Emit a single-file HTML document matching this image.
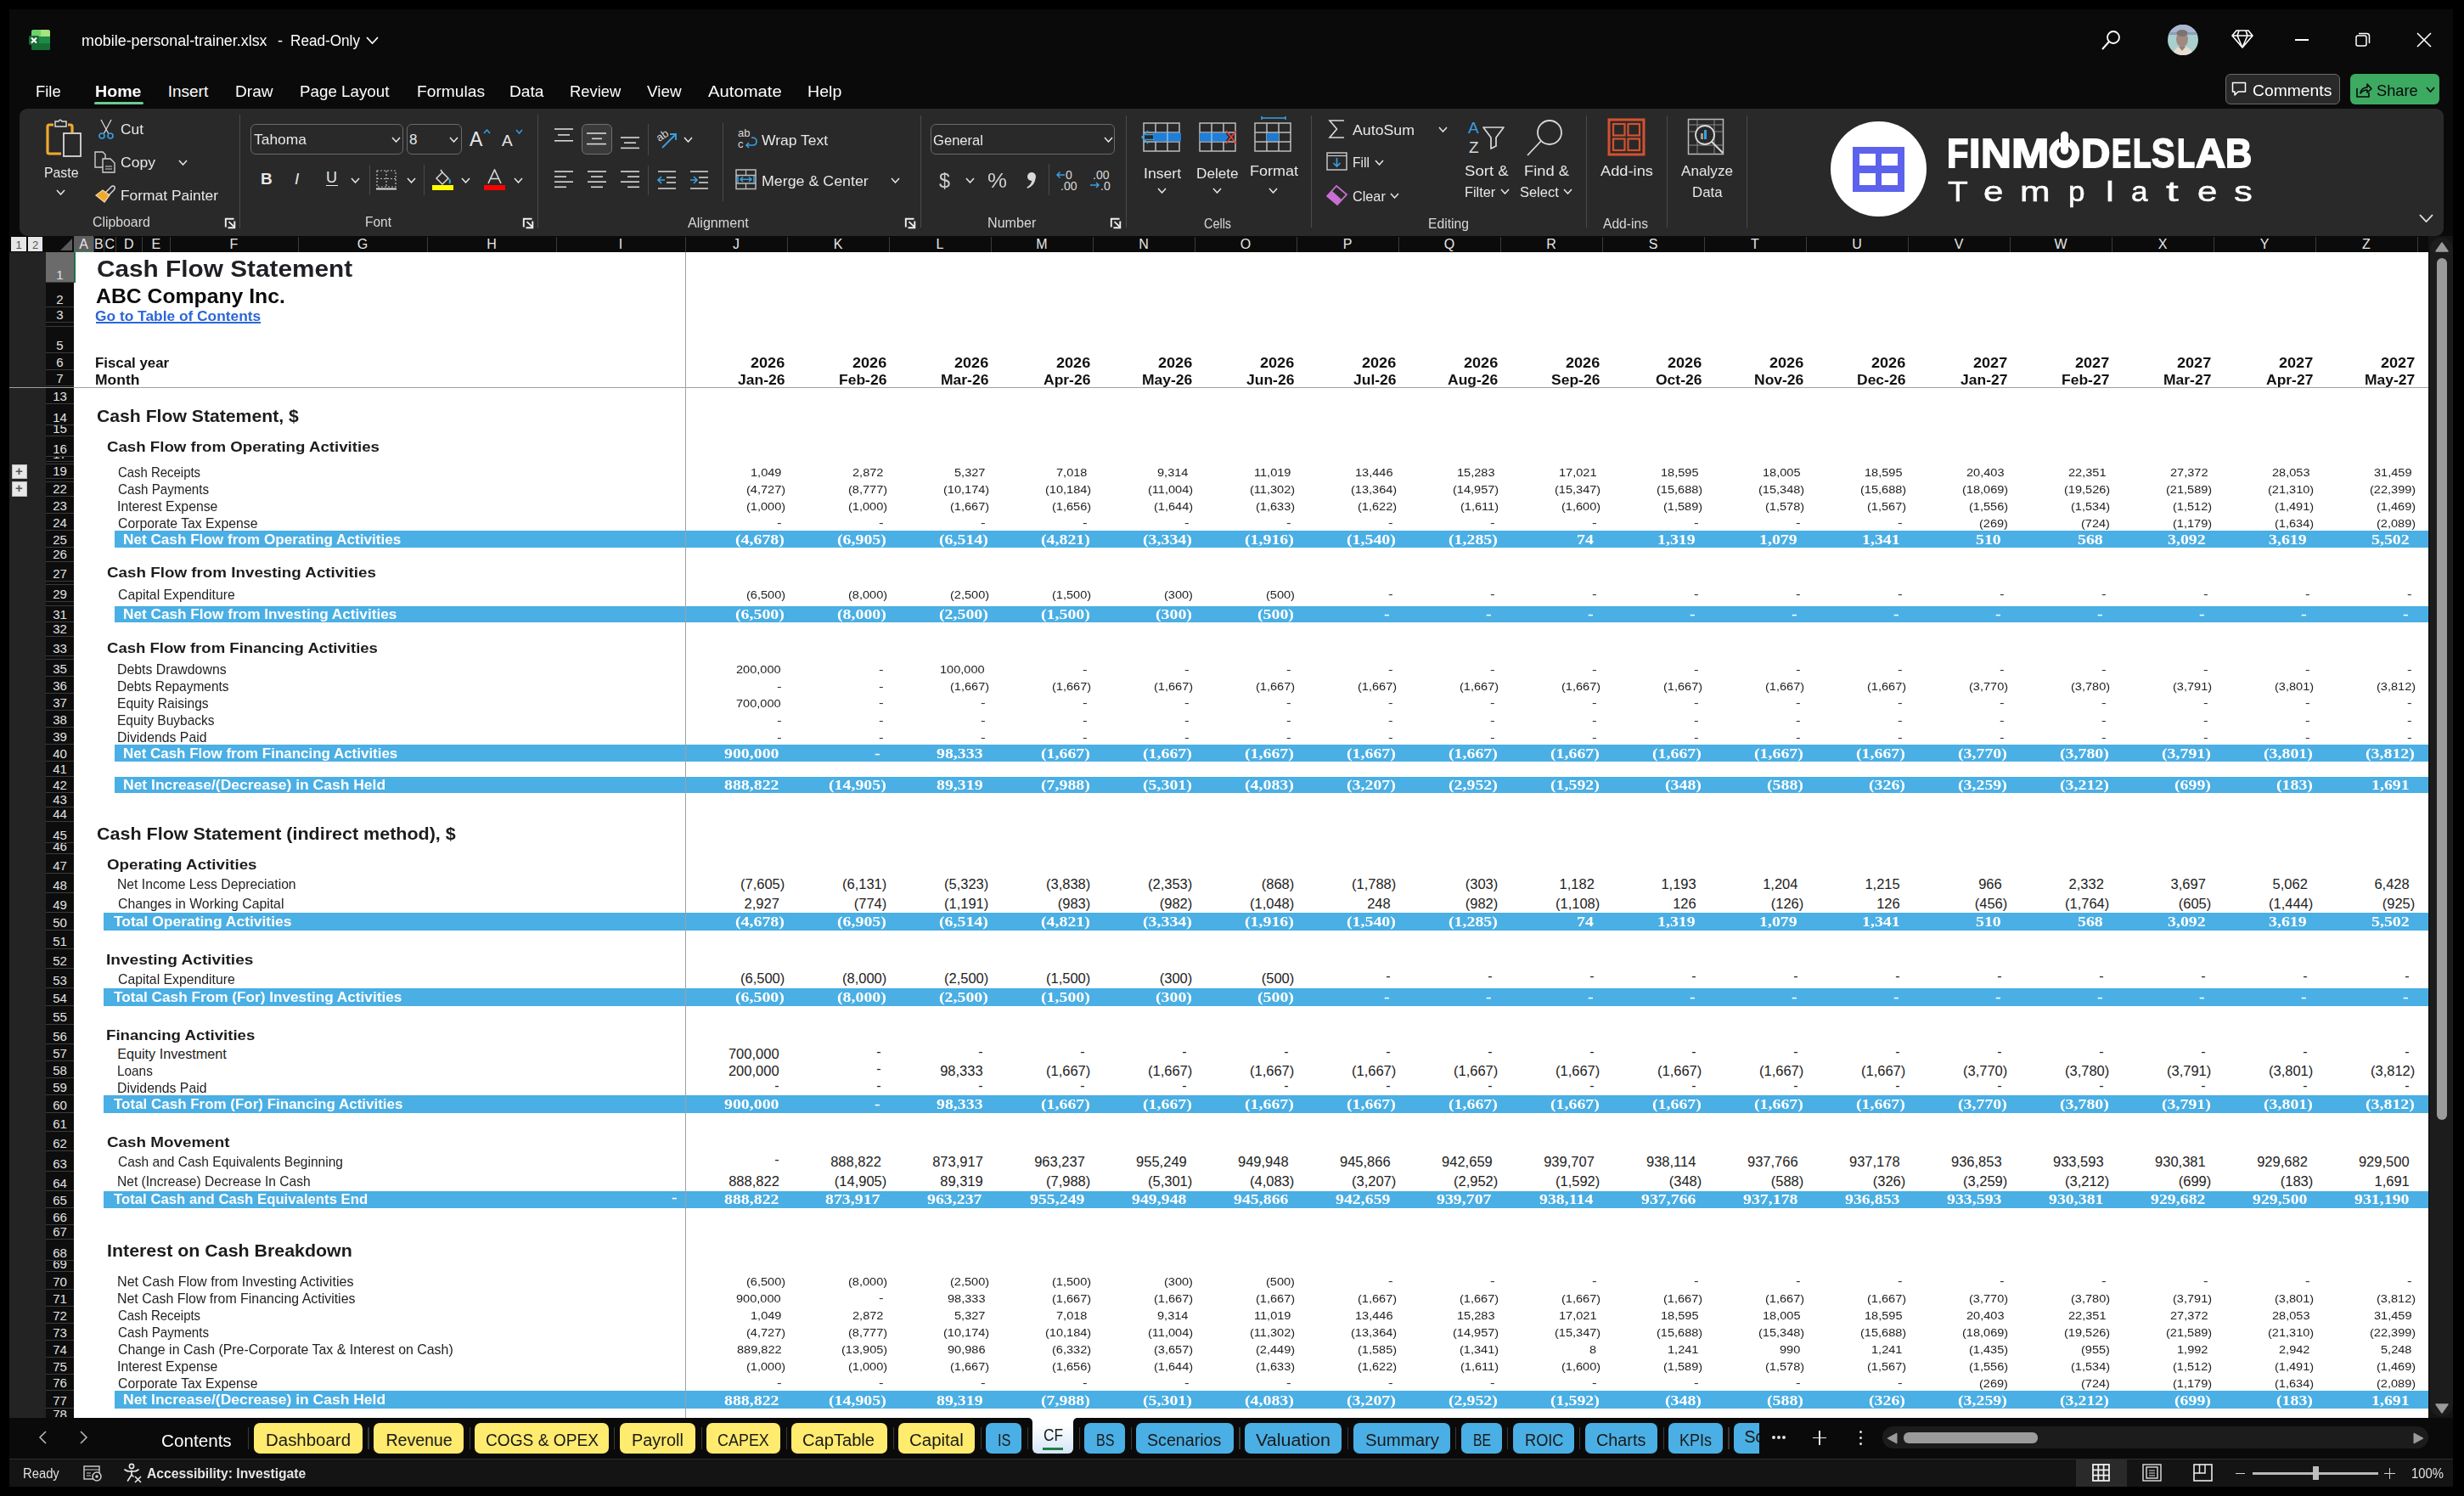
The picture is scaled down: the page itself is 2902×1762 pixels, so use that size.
<!DOCTYPE html>
<html><head><meta charset="utf-8"><title>Cash Flow Statement</title>
<style>
html,body{margin:0;padding:0;}
body{width:2902px;height:1762px;background:#000;position:relative;overflow:hidden;font-family:"Liberation Sans",sans-serif;}
div,span,svg{position:absolute;}
span{white-space:pre;display:block;}
</style></head><body>
<div style="left:11.0px;top:11.0px;width:2878.0px;height:267.0px;background:#0a0a0a;"></div>
<svg style="position:absolute;left:34px;top:34px" width="26" height="26" viewBox="0 0 26 26"><rect x="3" y="1" width="22" height="24" rx="2.5" fill="#1e8b46"/><path d="M5.5 1 H14 V9 H3 V3.5 Q3 1 5.5 1 Z" fill="#6fd36b"/><path d="M14 1 H22.5 Q25 1 25 3.5 V9 H14 Z" fill="#a8e27c"/><path d="M3 17 H25 V22.5 Q25 25 22.5 25 H5.5 Q3 25 3 22.5 Z" fill="#176c36"/><rect x="0" y="8" width="12" height="11" rx="2" fill="#1a6b35"/><path d="M3 10.5 L9 16.5 M9 10.5 L3 16.5" stroke="#fff" stroke-width="2"/></svg>
<span style="left:95.6px;top:39.2px;font:400 18px/18px 'Liberation Sans',sans-serif;color:#ffffff;transform:scaleX(0.9929);transform-origin:0 0;">mobile-personal-trainer.xlsx</span>
<span style="left:327.0px;top:39.2px;font:400 18px/18px 'Liberation Sans',sans-serif;color:#ffffff;">-</span>
<span style="left:341.5px;top:39.2px;font:400 18px/18px 'Liberation Sans',sans-serif;color:#ffffff;transform:scaleX(0.9528);transform-origin:0 0;">Read-Only</span>
<svg style="position:absolute;left:431.0px;top:42.5px" width="15" height="9"><path d="M1 1 L7.5 8 L14 1" fill="none" stroke="#ffffff" stroke-width="1.8"/></svg>
<svg style="position:absolute;left:2474px;top:35px" width="25" height="25"><circle cx="15" cy="9" r="7" fill="none" stroke="#fff" stroke-width="1.8"/><path d="M10 14 L2 23" stroke="#fff" stroke-width="2"/></svg>
<div style="left:2553px;top:28.7px;width:36px;height:36px;border-radius:50%;overflow:hidden;filter:blur(0.5px)"><svg style="left:0;top:0" width="36" height="36" viewBox="0 0 36 36"><rect x="0" y="0" width="36" height="36" fill="#a9cfcf"/><rect x="0" y="0" width="36" height="11" fill="#aab6d2"/><rect x="0" y="9" width="36" height="3" fill="#8aa0b8"/><ellipse cx="17" cy="17" rx="7" ry="9.5" fill="#a08a80"/><ellipse cx="17" cy="10" rx="6.5" ry="4" fill="#7d7370"/><path d="M6 36 Q8 28 13 26 L17 30 L22 26 Q28 28 30 36 Z" fill="#e6dcd4"/><path d="M13 26 L17 31 L21 26" fill="#9a8070"/></svg></div>
<svg style="position:absolute;left:2628px;top:34px" width="26" height="24"><path d="M6 2 H20 L25 8 L13 22 L1 8 Z M1 8 H25 M9 2 L7 8 L13 22 L19 8 L17 2" fill="none" stroke="#fff" stroke-width="1.6" stroke-linejoin="round"/></svg>
<div style="left:2703.0px;top:46.0px;width:16.0px;height:1.5px;background:#ffffff;"></div>
<svg style="position:absolute;left:2774px;top:38px" width="18" height="18"><rect x="1" y="4" width="12" height="12" rx="2" fill="none" stroke="#fff" stroke-width="1.5"/><path d="M4 1.5 H13.5 Q16.5 1.5 16.5 4.5 V13" fill="none" stroke="#fff" stroke-width="1.5"/></svg>
<svg style="position:absolute;left:2846px;top:38px" width="18" height="18"><path d="M1 1 L17 17 M17 1 L1 17" stroke="#fff" stroke-width="1.6"/></svg>
<span style="left:42.3px;top:97.7px;font:400 19px/19px 'Liberation Sans',sans-serif;color:#ffffff;transform:scaleX(0.9703);transform-origin:0 0;">File</span>
<span style="left:197.7px;top:97.7px;font:400 19px/19px 'Liberation Sans',sans-serif;color:#ffffff;">Insert</span>
<span style="left:277.4px;top:97.7px;font:400 19px/19px 'Liberation Sans',sans-serif;color:#ffffff;transform:scaleX(1.0061);transform-origin:0 0;">Draw</span>
<span style="left:353.0px;top:97.7px;font:400 19px/19px 'Liberation Sans',sans-serif;color:#ffffff;transform:scaleX(0.9881);transform-origin:0 0;">Page Layout</span>
<span style="left:490.7px;top:97.7px;font:400 19px/19px 'Liberation Sans',sans-serif;color:#ffffff;transform:scaleX(1.0117);transform-origin:0 0;">Formulas</span>
<span style="left:600.0px;top:97.7px;font:400 19px/19px 'Liberation Sans',sans-serif;color:#ffffff;transform:scaleX(1.0093);transform-origin:0 0;">Data</span>
<span style="left:670.8px;top:97.7px;font:400 19px/19px 'Liberation Sans',sans-serif;color:#ffffff;transform:scaleX(0.9666);transform-origin:0 0;">Review</span>
<span style="left:762.4px;top:97.7px;font:400 19px/19px 'Liberation Sans',sans-serif;color:#ffffff;transform:scaleX(0.9920);transform-origin:0 0;">View</span>
<span style="left:834.0px;top:97.7px;font:400 19px/19px 'Liberation Sans',sans-serif;color:#ffffff;transform:scaleX(1.0663);transform-origin:0 0;">Automate</span>
<span style="left:951.0px;top:97.7px;font:400 19px/19px 'Liberation Sans',sans-serif;color:#ffffff;transform:scaleX(1.0317);transform-origin:0 0;">Help</span>
<span style="left:111.5px;top:97.7px;font:700 19px/19px 'Liberation Sans',sans-serif;color:#ffffff;transform:scaleX(1.0326);transform-origin:0 0;">Home</span>
<div style="left:111.0px;top:120.0px;width:58.0px;height:3.0px;background:#6ccb8f;border-radius:2px"></div>
<div style="left:2621.0px;top:87.0px;width:135.0px;height:36.0px;background:#292929;border:1px solid #6a6a6a;border-radius:6px;box-sizing:border-box"></div>
<svg style="position:absolute;left:2628px;top:96px" width="18" height="18"><path d="M1.5 1.5 H16.5 V12 H8 L4 16 V12 H1.5 Z" fill="none" stroke="#fff" stroke-width="1.5" stroke-linejoin="round"/></svg>
<span style="left:2652.7px;top:97.4px;font:400 19px/19px 'Liberation Sans',sans-serif;color:#ffffff;transform:scaleX(1.0159);transform-origin:0 0;">Comments</span>
<div style="left:2768.0px;top:87.0px;width:105.0px;height:36.0px;background:#3daa62;border-radius:6px"></div>
<svg style="position:absolute;left:2774px;top:96px" width="20" height="20"><path d="M2 8 V18 H16 V13" fill="none" stroke="#0a0a0a" stroke-width="1.6"/><path d="M6 14 Q7 7 14 7 V3 L19 8.5 L14 13 V10 Q9 10 6 14 Z" fill="none" stroke="#0a0a0a" stroke-width="1.6" stroke-linejoin="round"/></svg>
<span style="left:2799.0px;top:97.4px;font:400 19px/19px 'Liberation Sans',sans-serif;color:#0a0a0a;transform:scaleX(0.9608);transform-origin:0 0;">Share</span>
<svg style="position:absolute;left:2856.5px;top:101.5px" width="11" height="7"><path d="M1 1 L5.5 6 L10 1" fill="none" stroke="#0a0a0a" stroke-width="1.6"/></svg>
<div style="left:23.0px;top:128.0px;width:2855.0px;height:149.5px;background:#292929;border-radius:9px"></div>
<svg style="position:absolute;left:54px;top:139px" width="44" height="50" viewBox="0 0 44 50"><path d="M9 8 H4 Q2 8 2 10 V40 Q2 42 4 42 H18" fill="none" stroke="#f0a92e" stroke-width="3.2"/><path d="M26 8 H29 Q31 8 31 10 V17" fill="none" stroke="#f0a92e" stroke-width="3.2"/><path d="M11 4 H15 Q16.5 0.5 19 4 H24 V10 H11 Z" fill="none" stroke="#d9d9d9" stroke-width="1.5"/><rect x="21" y="18" width="20" height="27" fill="none" stroke="#d9d9d9" stroke-width="1.8"/></svg>
<span style="left:51.5px;top:194.6px;font:400 17px/17px 'Liberation Sans',sans-serif;color:#e8e8e8;transform:scaleX(0.9317);transform-origin:0 0;">Paste</span>
<svg style="position:absolute;left:66.0px;top:222.5px" width="11" height="7"><path d="M1 1 L5.5 6 L10 1" fill="none" stroke="#e8e8e8" stroke-width="1.5"/></svg>
<svg style="position:absolute;left:115px;top:140px" width="20" height="25"><path d="M4 1 L12.5 17 M16 1 L7.5 17" stroke="#d9d9d9" stroke-width="1.3"/><circle cx="5" cy="20" r="3" fill="none" stroke="#3a9fe0" stroke-width="1.6"/><circle cx="15" cy="20" r="3" fill="none" stroke="#3a9fe0" stroke-width="1.6"/></svg>
<span style="left:142.0px;top:144.0px;font:400 17px/17px 'Liberation Sans',sans-serif;color:#e8e8e8;transform:scaleX(1.0207);transform-origin:0 0;">Cut</span>
<svg style="position:absolute;left:111px;top:178px" width="26" height="26"><path d="M1 1 H10 L13 4 V19 H1 Z" fill="none" stroke="#cfcfcf" stroke-width="1.4"/><path d="M10 9 H19 L24 14 V25 H10 Z" fill="#292929" stroke="#cfcfcf" stroke-width="1.4"/><path d="M13 18 H21 M13 21 H21" stroke="#cfcfcf" stroke-width="1.2"/></svg>
<span style="left:142.0px;top:182.5px;font:400 17px/17px 'Liberation Sans',sans-serif;color:#e8e8e8;transform:scaleX(1.0331);transform-origin:0 0;">Copy</span>
<svg style="position:absolute;left:209.5px;top:187.5px" width="11" height="7"><path d="M1 1 L5.5 6 L10 1" fill="none" stroke="#e8e8e8" stroke-width="1.5"/></svg>
<svg style="position:absolute;left:111px;top:217px" width="26" height="24"><path d="M2 13 L12 21 L18 13 L10 7 Z" fill="#f0a92e" stroke="#f7d49a" stroke-width="1.3"/><path d="M13 10 L20 3 Q22 1 24 3 Q25 5 23 7 L16 14" fill="none" stroke="#d9d9d9" stroke-width="1.5"/></svg>
<span style="left:142.0px;top:222.4px;font:400 17px/17px 'Liberation Sans',sans-serif;color:#e8e8e8;transform:scaleX(1.0231);transform-origin:0 0;">Format Painter</span>
<span style="left:109.0px;top:254.1px;font:400 16px/16px 'Liberation Sans',sans-serif;color:#d8d8d8;transform:scaleX(0.9891);transform-origin:0 0;">Clipboard</span>
<svg style="position:absolute;left:264px;top:256px" width="15" height="15"><path d="M1.8 11.5 V1.8 H11.5" fill="none" stroke="#f0f0f0" stroke-width="1.9"/><path d="M5.5 5.2 L11.8 11" stroke="#f0f0f0" stroke-width="1.7"/><path d="M4.5 12.3 H12.3 V4.5" fill="none" stroke="#f0f0f0" stroke-width="1.9"/></svg>
<div style="left:282.0px;top:135.0px;width:1.0px;height:134.0px;background:#4a4a4a;"></div>
<div style="left:295.0px;top:146.0px;width:179.5px;height:35.5px;background:#292929;border:1px solid #6a6a6a;border-radius:6px;box-sizing:border-box"></div>
<span style="left:298.6px;top:156.2px;font:400 17px/17px 'Liberation Sans',sans-serif;color:#e8e8e8;transform:scaleX(1.0253);transform-origin:0 0;">Tahoma</span>
<svg style="position:absolute;left:460.5px;top:160.5px" width="11" height="7"><path d="M1 1 L5.5 6 L10 1" fill="none" stroke="#e8e8e8" stroke-width="1.5"/></svg>
<div style="left:479.0px;top:146.0px;width:64.5px;height:35.5px;background:#292929;border:1px solid #6a6a6a;border-radius:6px;box-sizing:border-box"></div>
<span style="left:482.0px;top:156.2px;font:400 17px/17px 'Liberation Sans',sans-serif;color:#e8e8e8;">8</span>
<svg style="position:absolute;left:529.0px;top:160.5px" width="11" height="7"><path d="M1 1 L5.5 6 L10 1" fill="none" stroke="#e8e8e8" stroke-width="1.5"/></svg>
<span style="left:553.0px;top:152.5px;font:400 23px/23px 'Liberation Sans',sans-serif;color:#e8e8e8;">A</span>
<svg style="position:absolute;left:569px;top:152px" width="9" height="6"><path d="M1 5 L4.5 1 L8 5" fill="none" stroke="#3a9fe0" stroke-width="1.5"/></svg>
<span style="left:591.0px;top:155.9px;font:400 19px/19px 'Liberation Sans',sans-serif;color:#e8e8e8;">A</span>
<svg style="position:absolute;left:607px;top:152px" width="9" height="6"><path d="M1 1 L4.5 5 L8 1" fill="none" stroke="#3a9fe0" stroke-width="1.5"/></svg>
<span style="left:307.0px;top:201.4px;font:700 19px/19px 'Liberation Sans',sans-serif;color:#e8e8e8;">B</span>
<span style="left:347.0px;top:201.4px;font:400 19px/19px 'Liberation Sans',sans-serif;color:#e8e8e8;font-style:italic">I</span>
<span style="left:384.0px;top:199.8px;font:400 18px/18px 'Liberation Sans',sans-serif;color:#e8e8e8;">U</span>
<div style="left:383.5px;top:217.5px;width:14.0px;height:1.5px;background:#e8e8e8;"></div>
<svg style="position:absolute;left:412.5px;top:208.5px" width="11" height="7"><path d="M1 1 L5.5 6 L10 1" fill="none" stroke="#e8e8e8" stroke-width="1.5"/></svg>
<div style="left:434.5px;top:194.0px;width:1.0px;height:35.5px;background:#4a4a4a;"></div>
<svg style="position:absolute;left:443px;top:200px" width="25" height="24"><rect x="1" y="1" width="22" height="19" fill="none" stroke="#bdbdbd" stroke-width="1.2" stroke-dasharray="2 2"/><path d="M12 1 V20 M1 10.5 H23" stroke="#bdbdbd" stroke-width="1.2" stroke-dasharray="2 2"/><path d="M0 22.5 H24" stroke="#e0e0e0" stroke-width="2"/></svg>
<svg style="position:absolute;left:478.5px;top:208.5px" width="11" height="7"><path d="M1 1 L5.5 6 L10 1" fill="none" stroke="#e8e8e8" stroke-width="1.5"/></svg>
<div style="left:499.0px;top:194.0px;width:1.0px;height:35.5px;background:#4a4a4a;"></div>
<svg style="position:absolute;left:509px;top:199px" width="25" height="26"><path d="M5 11 L12 4 L19 11 L12 18 Z" fill="none" stroke="#d9d9d9" stroke-width="1.5"/><path d="M12 4 L10 1" stroke="#d9d9d9" stroke-width="1.5"/><path d="M20 12 Q22 15 20 17" fill="none" stroke="#3a9fe0" stroke-width="2"/><rect x="0" y="19" width="25" height="6" fill="#ffff00"/></svg>
<svg style="position:absolute;left:543.2px;top:208.5px" width="11" height="7"><path d="M1 1 L5.5 6 L10 1" fill="none" stroke="#e8e8e8" stroke-width="1.5"/></svg>
<svg style="position:absolute;left:570px;top:199px" width="25" height="26"><path d="M5 17 L12.5 1 L20 17 M7.5 11.5 H17.5" fill="none" stroke="#d9d9d9" stroke-width="1.6"/><rect x="0" y="19" width="25" height="6" fill="#ff0000"/></svg>
<svg style="position:absolute;left:604.5px;top:208.5px" width="11" height="7"><path d="M1 1 L5.5 6 L10 1" fill="none" stroke="#e8e8e8" stroke-width="1.5"/></svg>
<span style="left:430.0px;top:254.1px;font:400 16px/16px 'Liberation Sans',sans-serif;color:#d8d8d8;transform:scaleX(0.9673);transform-origin:0 0;">Font</span>
<svg style="position:absolute;left:615px;top:256px" width="15" height="15"><path d="M1.8 11.5 V1.8 H11.5" fill="none" stroke="#f0f0f0" stroke-width="1.9"/><path d="M5.5 5.2 L11.8 11" stroke="#f0f0f0" stroke-width="1.7"/><path d="M4.5 12.3 H12.3 V4.5" fill="none" stroke="#f0f0f0" stroke-width="1.9"/></svg>
<div style="left:632.5px;top:135.0px;width:1.0px;height:134.0px;background:#4a4a4a;"></div>
<svg style="position:absolute;left:652px;top:151px" width="26" height="22.700000000000003"><path d="M1 1.0 H23" stroke="#d9d9d9" stroke-width="1.6"/><path d="M5 7.9 H19" stroke="#d9d9d9" stroke-width="1.6"/><path d="M1 14.8 H23" stroke="#d9d9d9" stroke-width="1.6"/></svg>
<div style="left:685.0px;top:146.0px;width:36.0px;height:35.5px;background:#3a3a3a;border:1px solid #707070;border-radius:6px;box-sizing:border-box"></div>
<svg style="position:absolute;left:690px;top:155.5px" width="26" height="20.9"><path d="M1 1.0 H24" stroke="#d9d9d9" stroke-width="1.6"/><path d="M7 7.3 H19" stroke="#d9d9d9" stroke-width="1.6"/><path d="M1 13.6 H24" stroke="#d9d9d9" stroke-width="1.6"/></svg>
<svg style="position:absolute;left:730px;top:161px" width="26" height="20.6"><path d="M1 1.0 H23" stroke="#d9d9d9" stroke-width="1.6"/><path d="M5 7.2 H19" stroke="#d9d9d9" stroke-width="1.6"/><path d="M1 13.4 H23" stroke="#d9d9d9" stroke-width="1.6"/></svg>
<div style="left:763.3px;top:146.0px;width:1.0px;height:36.6px;background:#4a4a4a;"></div>
<svg style="position:absolute;left:772px;top:150px" width="27" height="27"><text x="1" y="14" font-family="Liberation Sans" font-size="13" fill="#d9d9d9" transform="rotate(-35 8 10)">ab</text><path d="M8 24 L24 8 M17 8 H24 V15" fill="none" stroke="#3a9fe0" stroke-width="1.8"/></svg>
<svg style="position:absolute;left:804.5px;top:160.5px" width="11" height="7"><path d="M1 1 L5.5 6 L10 1" fill="none" stroke="#e8e8e8" stroke-width="1.5"/></svg>
<div style="left:851.3px;top:144.6px;width:1.0px;height:92.8px;background:#4a4a4a;"></div>
<svg style="position:absolute;left:869px;top:150px" width="24" height="28"><text x="0" y="11" font-family="Liberation Sans" font-size="13" fill="#d9d9d9">ab</text><text x="0" y="24" font-family="Liberation Sans" font-size="13" fill="#d9d9d9">c</text><path d="M10 21 H18 Q22 21 22 16 Q22 12 16 12" fill="none" stroke="#3a9fe0" stroke-width="1.6"/><path d="M13 18 L10 21 L13 24" fill="none" stroke="#3a9fe0" stroke-width="1.6"/></svg>
<span style="left:897.0px;top:156.6px;font:400 17px/17px 'Liberation Sans',sans-serif;color:#e8e8e8;transform:scaleX(1.0280);transform-origin:0 0;">Wrap Text</span>
<svg style="position:absolute;left:652px;top:201px" width="26" height="26.4"><path d="M1 1.0 H23" stroke="#d9d9d9" stroke-width="1.6"/><path d="M1 7.1 H15" stroke="#d9d9d9" stroke-width="1.6"/><path d="M1 13.2 H23" stroke="#d9d9d9" stroke-width="1.6"/><path d="M1 19.299999999999997 H15" stroke="#d9d9d9" stroke-width="1.6"/></svg>
<svg style="position:absolute;left:691px;top:201px" width="26" height="26.4"><path d="M1 1.0 H23" stroke="#d9d9d9" stroke-width="1.6"/><path d="M5 7.1 H19" stroke="#d9d9d9" stroke-width="1.6"/><path d="M1 13.2 H23" stroke="#d9d9d9" stroke-width="1.6"/><path d="M5 19.299999999999997 H19" stroke="#d9d9d9" stroke-width="1.6"/></svg>
<svg style="position:absolute;left:730px;top:201px" width="26" height="26.4"><path d="M1 1.0 H23" stroke="#d9d9d9" stroke-width="1.6"/><path d="M9 7.1 H23" stroke="#d9d9d9" stroke-width="1.6"/><path d="M1 13.2 H23" stroke="#d9d9d9" stroke-width="1.6"/><path d="M9 19.299999999999997 H23" stroke="#d9d9d9" stroke-width="1.6"/></svg>
<div style="left:763.3px;top:195.0px;width:1.0px;height:35.0px;background:#4a4a4a;"></div>
<svg style="position:absolute;left:774px;top:200px" width="23" height="24"><path d="M1 2 H22 M11 9 H22 M11 15 H22 M1 22 H22" stroke="#d9d9d9" stroke-width="1.6"/><path d="M9 12 H1 M5 8 L1 12 L5 16" fill="none" stroke="#3a9fe0" stroke-width="1.6"/></svg>
<svg style="position:absolute;left:812px;top:200px" width="23" height="24"><path d="M1 2 H22 M11 9 H22 M11 15 H22 M1 22 H22" stroke="#d9d9d9" stroke-width="1.6"/><path d="M1 12 H9 M5 8 L9 12 L5 16" fill="none" stroke="#3a9fe0" stroke-width="1.6"/></svg>
<svg style="position:absolute;left:866px;top:199px" width="25" height="25"><rect x="1" y="1" width="23" height="22.5" fill="none" stroke="#bdbdbd" stroke-width="1.5"/><path d="M1 7.5 H24 M1 17 H24 M12.5 1 V7.5 M12.5 17 V23.5" stroke="#bdbdbd" stroke-width="1.3"/><path d="M3 8 V16.5 M22 8 V16.5" stroke="#3a9fe0" stroke-width="1.6"/><path d="M6 12.2 H19 M9 9.5 L6 12.2 L9 15 M16 9.5 L19 12.2 L16 15" fill="none" stroke="#3a9fe0" stroke-width="1.6"/></svg>
<span style="left:897.0px;top:204.6px;font:400 17px/17px 'Liberation Sans',sans-serif;color:#e8e8e8;transform:scaleX(1.0478);transform-origin:0 0;">Merge &amp; Center</span>
<svg style="position:absolute;left:1048.5px;top:208.5px" width="11" height="7"><path d="M1 1 L5.5 6 L10 1" fill="none" stroke="#e8e8e8" stroke-width="1.5"/></svg>
<span style="left:810.0px;top:254.5px;font:400 16px/16px 'Liberation Sans',sans-serif;color:#d8d8d8;transform:scaleX(1.0070);transform-origin:0 0;">Alignment</span>
<svg style="position:absolute;left:1065px;top:256px" width="15" height="15"><path d="M1.8 11.5 V1.8 H11.5" fill="none" stroke="#f0f0f0" stroke-width="1.9"/><path d="M5.5 5.2 L11.8 11" stroke="#f0f0f0" stroke-width="1.7"/><path d="M4.5 12.3 H12.3 V4.5" fill="none" stroke="#f0f0f0" stroke-width="1.9"/></svg>
<div style="left:1083.6px;top:135.5px;width:1.0px;height:132.5px;background:#4a4a4a;"></div>
<div style="left:1095.7px;top:146.0px;width:217.7px;height:35.7px;background:#292929;border:1px solid #6a6a6a;border-radius:6px;box-sizing:border-box"></div>
<span style="left:1099.0px;top:156.6px;font:400 17px/17px 'Liberation Sans',sans-serif;color:#e8e8e8;transform:scaleX(0.9757);transform-origin:0 0;">General</span>
<svg style="position:absolute;left:1299.5px;top:160.5px" width="11" height="7"><path d="M1 1 L5.5 6 L10 1" fill="none" stroke="#e8e8e8" stroke-width="1.5"/></svg>
<span style="left:1106.0px;top:201.5px;font:400 23px/23px 'Liberation Sans',sans-serif;color:#cfcfcf;transform:scaleX(1.0159);transform-origin:0 0;">$</span>
<svg style="position:absolute;left:1136.5px;top:208.5px" width="11" height="7"><path d="M1 1 L5.5 6 L10 1" fill="none" stroke="#e8e8e8" stroke-width="1.5"/></svg>
<span style="left:1163.0px;top:201.5px;font:400 23px/23px 'Liberation Sans',sans-serif;color:#cfcfcf;transform:scaleX(1.1245);transform-origin:0 0;">%</span>
<svg style="position:absolute;left:1207px;top:202px" width="15" height="21"><circle cx="8" cy="6" r="5" fill="#d9d9d9"/><path d="M12.6 7 Q12.5 16 3 20 L2.5 18.5 Q8 15 8.5 10 Z" fill="#d9d9d9"/></svg>
<div style="left:1234.9px;top:193.0px;width:1.0px;height:37.0px;background:#4a4a4a;"></div>
<svg style="position:absolute;left:1244px;top:199px" width="26" height="26"><text x="11" y="12" font-family="Liberation Sans" font-size="14" fill="#d9d9d9">0</text><text x="5" y="25" font-family="Liberation Sans" font-size="14" fill="#d9d9d9">.00</text><path d="M1 7 H10 M4.5 3.5 L1 7 L4.5 10.5" fill="none" stroke="#3a9fe0" stroke-width="1.5"/></svg>
<svg style="position:absolute;left:1282px;top:199px" width="27" height="26"><text x="5" y="12" font-family="Liberation Sans" font-size="14" fill="#d9d9d9">.00</text><text x="14" y="25" font-family="Liberation Sans" font-size="14" fill="#d9d9d9">.0</text><path d="M2 19 H12 M9 16 L12 19 L9 22" fill="none" stroke="#3a9fe0" stroke-width="1.5"/></svg>
<span style="left:1162.7px;top:254.5px;font:400 16px/16px 'Liberation Sans',sans-serif;color:#d8d8d8;transform:scaleX(1.0064);transform-origin:0 0;">Number</span>
<svg style="position:absolute;left:1307px;top:256px" width="15" height="15"><path d="M1.8 11.5 V1.8 H11.5" fill="none" stroke="#f0f0f0" stroke-width="1.9"/><path d="M5.5 5.2 L11.8 11" stroke="#f0f0f0" stroke-width="1.7"/><path d="M4.5 12.3 H12.3 V4.5" fill="none" stroke="#f0f0f0" stroke-width="1.9"/></svg>
<div style="left:1325.6px;top:135.5px;width:1.0px;height:132.5px;background:#4a4a4a;"></div>
<svg style="position:absolute;left:1343px;top:144px" width="50" height="38"><rect x="4" y="1" width="42" height="33" fill="none" stroke="#bdbdbd" stroke-width="1.5"/><path d="M18 1 V34 M32 1 V34 M4 12 H46 M4 23 H46" stroke="#bdbdbd" stroke-width="1.5"/><rect x="15" y="12.5" width="33" height="10" fill="#1f7fd8"/><path d="M32 12.5 V22.5" stroke="#9cc8ef" stroke-width="1.3"/><path d="M16 14.5 H6 M16 20.5 H6 M9 10 L2 17.5 L9 25" fill="none" stroke="#3a9fe0" stroke-width="1.6"/></svg>
<span style="left:1347.0px;top:196.0px;font:400 17px/17px 'Liberation Sans',sans-serif;color:#e8e8e8;transform:scaleX(1.0353);transform-origin:0 0;">Insert</span>
<svg style="position:absolute;left:1362.5px;top:220.5px" width="11" height="7"><path d="M1 1 L5.5 6 L10 1" fill="none" stroke="#e8e8e8" stroke-width="1.5"/></svg>
<svg style="position:absolute;left:1409px;top:144px" width="50" height="38"><rect x="4" y="1" width="42" height="33" fill="none" stroke="#bdbdbd" stroke-width="1.5"/><path d="M18 1 V34 M32 1 V34 M4 12 H46 M4 23 H46" stroke="#bdbdbd" stroke-width="1.5"/><path d="M4 12.5 H34 L38 17.5 L34 22.5 H4 Z" fill="#1f7fd8"/><path d="M18 12.5 V22.5" stroke="#9cc8ef" stroke-width="1.3"/><path d="M35 10 L47 25 M47 10 L35 25" stroke="#e0403a" stroke-width="1.8"/></svg>
<span style="left:1409.4px;top:196.0px;font:400 17px/17px 'Liberation Sans',sans-serif;color:#e8e8e8;transform:scaleX(1.0093);transform-origin:0 0;">Delete</span>
<svg style="position:absolute;left:1427.5px;top:220.5px" width="11" height="7"><path d="M1 1 L5.5 6 L10 1" fill="none" stroke="#e8e8e8" stroke-width="1.5"/></svg>
<svg style="position:absolute;left:1476px;top:137px" width="48" height="44"><path d="M10 2 H38 M10 0 V4 M38 0 V4" stroke="#3a9fe0" stroke-width="1.5"/><rect x="2" y="8" width="42" height="33" fill="none" stroke="#bdbdbd" stroke-width="1.5"/><path d="M16 8 V41 M30 8 V41 M2 19 H44 M2 30 H44" stroke="#bdbdbd" stroke-width="1.5"/><rect x="16" y="20" width="14" height="9" fill="#1a7ad4"/></svg>
<span style="left:1472.0px;top:193.4px;font:400 17px/17px 'Liberation Sans',sans-serif;color:#e8e8e8;transform:scaleX(1.0589);transform-origin:0 0;">Format</span>
<svg style="position:absolute;left:1493.9px;top:220.5px" width="11" height="7"><path d="M1 1 L5.5 6 L10 1" fill="none" stroke="#e8e8e8" stroke-width="1.5"/></svg>
<span style="left:1417.9px;top:256.0px;font:400 16px/16px 'Liberation Sans',sans-serif;color:#d8d8d8;transform:scaleX(0.9018);transform-origin:0 0;">Cells</span>
<div style="left:1544.0px;top:135.7px;width:1.0px;height:132.2px;background:#4a4a4a;"></div>
<svg style="position:absolute;left:1564px;top:140px" width="21" height="24"><path d="M19 2 H2 L10.5 12 L2 22 H19" fill="none" stroke="#d9d9d9" stroke-width="1.6" stroke-linejoin="miter"/></svg>
<span style="left:1593.0px;top:144.6px;font:400 17px/17px 'Liberation Sans',sans-serif;color:#e8e8e8;transform:scaleX(1.0440);transform-origin:0 0;">AutoSum</span>
<svg style="position:absolute;left:1693.9px;top:148.5px" width="11" height="7"><path d="M1 1 L5.5 6 L10 1" fill="none" stroke="#e8e8e8" stroke-width="1.5"/></svg>
<svg style="position:absolute;left:1562px;top:179px" width="26" height="24"><rect x="1" y="1" width="23" height="20" fill="none" stroke="#cfcfcf" stroke-width="1.4"/><path d="M1 4.5 H24" stroke="#cfcfcf" stroke-width="1.2"/><path d="M12.5 7 V17 M8.5 13 L12.5 17 L16.5 13" fill="none" stroke="#3a9fe0" stroke-width="1.7"/></svg>
<span style="left:1593.0px;top:183.0px;font:400 17px/17px 'Liberation Sans',sans-serif;color:#e8e8e8;transform:scaleX(0.9202);transform-origin:0 0;">Fill</span>
<svg style="position:absolute;left:1619.2px;top:187.5px" width="11" height="7"><path d="M1 1 L5.5 6 L10 1" fill="none" stroke="#e8e8e8" stroke-width="1.5"/></svg>
<svg style="position:absolute;left:1562px;top:218px" width="26" height="24"><path d="M12 1 L24 11 L13 23 L1 13 Z" fill="none" stroke="#c86fd1" stroke-width="1.8"/><path d="M7 7 L18 17 L13 23 L1 13 Z" fill="#c86fd1"/></svg>
<span style="left:1593.0px;top:222.6px;font:400 17px/17px 'Liberation Sans',sans-serif;color:#e8e8e8;transform:scaleX(0.9551);transform-origin:0 0;">Clear</span>
<svg style="position:absolute;left:1637.0px;top:226.5px" width="11" height="7"><path d="M1 1 L5.5 6 L10 1" fill="none" stroke="#e8e8e8" stroke-width="1.5"/></svg>
<svg style="position:absolute;left:1728px;top:140px" width="46" height="44"><text x="1" y="17" font-family="Liberation Sans" font-size="19" fill="#3a9fe0">A</text><text x="2" y="40" font-family="Liberation Sans" font-size="19" fill="#d9d9d9">Z</text><path d="M19 10 H43 L34 22 V32 L28 35 V22 Z" fill="none" stroke="#d9d9d9" stroke-width="1.7" stroke-linejoin="round"/></svg>
<span style="left:1725.0px;top:193.4px;font:400 17px/17px 'Liberation Sans',sans-serif;color:#e8e8e8;transform:scaleX(1.0924);transform-origin:0 0;">Sort &amp;</span>
<span style="left:1724.7px;top:217.6px;font:400 17px/17px 'Liberation Sans',sans-serif;color:#e8e8e8;transform:scaleX(0.9608);transform-origin:0 0;">Filter</span>
<svg style="position:absolute;left:1766.9px;top:221.5px" width="11" height="7"><path d="M1 1 L5.5 6 L10 1" fill="none" stroke="#e8e8e8" stroke-width="1.5"/></svg>
<svg style="position:absolute;left:1797px;top:140px" width="46" height="46"><circle cx="28" cy="16" r="14" fill="none" stroke="#d9d9d9" stroke-width="1.8"/><path d="M18 26 L2 43" stroke="#d9d9d9" stroke-width="1.8"/></svg>
<span style="left:1795.0px;top:193.4px;font:400 17px/17px 'Liberation Sans',sans-serif;color:#e8e8e8;transform:scaleX(1.0785);transform-origin:0 0;">Find &amp;</span>
<span style="left:1790.0px;top:217.6px;font:400 17px/17px 'Liberation Sans',sans-serif;color:#e8e8e8;transform:scaleX(0.9672);transform-origin:0 0;">Select</span>
<svg style="position:absolute;left:1840.5px;top:221.5px" width="11" height="7"><path d="M1 1 L5.5 6 L10 1" fill="none" stroke="#e8e8e8" stroke-width="1.5"/></svg>
<span style="left:1682.0px;top:256.0px;font:400 16px/16px 'Liberation Sans',sans-serif;color:#d8d8d8;transform:scaleX(0.9802);transform-origin:0 0;">Editing</span>
<div style="left:1868.0px;top:135.7px;width:1.0px;height:132.2px;background:#4a4a4a;"></div>
<svg style="position:absolute;left:1893px;top:139px" width="46" height="46"><rect x="2" y="2" width="41" height="41" fill="none" stroke="#d35230" stroke-width="3"/><rect x="7" y="7" width="13.5" height="13.5" fill="none" stroke="#d35230" stroke-width="2.2"/><rect x="24.5" y="7" width="13.5" height="13.5" fill="none" stroke="#d35230" stroke-width="2.2"/><rect x="7" y="24.5" width="13.5" height="13.5" fill="none" stroke="#d35230" stroke-width="2.2"/><rect x="24.5" y="24.5" width="13.5" height="13.5" fill="none" stroke="#d35230" stroke-width="2.2"/></svg>
<span style="left:1885.0px;top:193.4px;font:400 17px/17px 'Liberation Sans',sans-serif;color:#e8e8e8;transform:scaleX(1.0756);transform-origin:0 0;">Add-ins</span>
<span style="left:1888.0px;top:256.0px;font:400 16px/16px 'Liberation Sans',sans-serif;color:#d8d8d8;transform:scaleX(0.9764);transform-origin:0 0;">Add-ins</span>
<div style="left:1963.0px;top:135.7px;width:1.0px;height:132.2px;background:#4a4a4a;"></div>
<svg style="position:absolute;left:1987px;top:139px" width="46" height="46"><rect x="1.5" y="1.5" width="41" height="41" fill="none" stroke="#bdbdbd" stroke-width="1.5"/><path d="M1.5 8 H42.5 M1.5 16 H42.5 M1.5 32 H42.5 M12 1.5 V42.5 M32 1.5 V42.5" stroke="#8a8a8a" stroke-width="1"/><circle cx="21" cy="20" r="11" fill="#292929" stroke="#d9d9d9" stroke-width="1.8"/><rect x="16" y="18" width="3" height="7" fill="#9a9a9a"/><rect x="20" y="14" width="3" height="11" fill="#3a9fe0"/><path d="M29 28 L42 41" stroke="#d9d9d9" stroke-width="2"/></svg>
<span style="left:1980.0px;top:193.4px;font:400 17px/17px 'Liberation Sans',sans-serif;color:#e8e8e8;transform:scaleX(1.0085);transform-origin:0 0;">Analyze</span>
<span style="left:1992.5px;top:217.6px;font:400 17px/17px 'Liberation Sans',sans-serif;color:#e8e8e8;transform:scaleX(0.9887);transform-origin:0 0;">Data</span>
<div style="left:2056.5px;top:135.7px;width:1.0px;height:132.2px;background:#4a4a4a;"></div>
<div style="left:2156px;top:142.6px;width:112.6px;height:112.6px;border-radius:50%;background:#fff"></div>
<div style="left:2182.0px;top:173.0px;width:61.0px;height:52.6px;background:#5c62ec;"></div>
<div style="left:2190.0px;top:181.3px;width:19.0px;height:14.0px;background:#ffffff;"></div>
<div style="left:2216.0px;top:181.3px;width:19.0px;height:14.0px;background:#ffffff;"></div>
<div style="left:2190.0px;top:203.5px;width:19.0px;height:14.0px;background:#ffffff;"></div>
<div style="left:2216.0px;top:203.5px;width:19.0px;height:14.0px;background:#ffffff;"></div>
<span style="left:2293.30px;top:155.92px;font:700 49px/49px 'Liberation Sans',sans-serif;color:#ffffff;transform:scaleX(0.8483);transform-origin:0 0;-webkit-text-stroke:1.8px #fff;">F</span>
<span style="left:2318.76px;top:155.92px;font:700 49px/49px 'Liberation Sans',sans-serif;color:#ffffff;transform:scaleX(0.9852);transform-origin:0 0;-webkit-text-stroke:1.8px #fff;">I</span>
<span style="left:2332.57px;top:155.92px;font:700 49px/49px 'Liberation Sans',sans-serif;color:#ffffff;transform:scaleX(1.0135);transform-origin:0 0;-webkit-text-stroke:1.8px #fff;">N</span>
<span style="left:2368.54px;top:155.92px;font:700 49px/49px 'Liberation Sans',sans-serif;color:#ffffff;transform:scaleX(1.0875);transform-origin:0 0;-webkit-text-stroke:1.8px #fff;">M</span>
<span style="left:2450.80px;top:155.92px;font:700 49px/49px 'Liberation Sans',sans-serif;color:#ffffff;transform:scaleX(0.9723);transform-origin:0 0;-webkit-text-stroke:1.8px #fff;">D</span>
<span style="left:2486.56px;top:155.92px;font:700 49px/49px 'Liberation Sans',sans-serif;color:#ffffff;transform:scaleX(0.7044);transform-origin:0 0;-webkit-text-stroke:1.8px #fff;">E</span>
<span style="left:2511.70px;top:155.92px;font:700 49px/49px 'Liberation Sans',sans-serif;color:#ffffff;transform:scaleX(0.7212);transform-origin:0 0;-webkit-text-stroke:1.8px #fff;">L</span>
<span style="left:2534.47px;top:155.92px;font:700 49px/49px 'Liberation Sans',sans-serif;color:#ffffff;transform:scaleX(0.8367);transform-origin:0 0;-webkit-text-stroke:1.8px #fff;">S</span>
<span style="left:2564.15px;top:155.92px;font:700 49px/49px 'Liberation Sans',sans-serif;color:#ffffff;transform:scaleX(0.7054);transform-origin:0 0;-webkit-text-stroke:1.8px #fff;">L</span>
<span style="left:2586.08px;top:155.92px;font:700 49px/49px 'Liberation Sans',sans-serif;color:#ffffff;transform:scaleX(0.9960);transform-origin:0 0;-webkit-text-stroke:1.8px #fff;">A</span>
<span style="left:2621.49px;top:155.92px;font:700 49px/49px 'Liberation Sans',sans-serif;color:#ffffff;transform:scaleX(0.8832);transform-origin:0 0;-webkit-text-stroke:1.8px #fff;">B</span>
<svg style="position:absolute;left:2410px;top:152px" width="44" height="50" viewBox="0 0 44 50"><circle cx="21.3" cy="28.1" r="13.4" fill="none" stroke="#fff" stroke-width="9"/><rect x="15" y="0" width="13" height="16" fill="#292929"/><rect x="17" y="2.7" width="9.1" height="27" rx="4.5" fill="#fff"/></svg>
<span style="left:2294.22px;top:208.02px;font:400 34px/34px 'Liberation Sans',sans-serif;color:#ffffff;transform:scaleX(1.1455);transform-origin:0 0;-webkit-text-stroke:0.5px #fff;">T</span>
<span style="left:2336.11px;top:208.02px;font:400 34px/34px 'Liberation Sans',sans-serif;color:#ffffff;transform:scaleX(1.2390);transform-origin:0 0;-webkit-text-stroke:0.5px #fff;">e</span>
<span style="left:2379.32px;top:208.02px;font:400 34px/34px 'Liberation Sans',sans-serif;color:#ffffff;transform:scaleX(1.2557);transform-origin:0 0;-webkit-text-stroke:0.5px #fff;">m</span>
<span style="left:2436.02px;top:208.02px;font:400 34px/34px 'Liberation Sans',sans-serif;color:#ffffff;transform:scaleX(1.0327);transform-origin:0 0;-webkit-text-stroke:0.5px #fff;">p</span>
<span style="left:2479.71px;top:208.02px;font:400 34px/34px 'Liberation Sans',sans-serif;color:#ffffff;transform:scaleX(1.3072);transform-origin:0 0;-webkit-text-stroke:0.5px #fff;">l</span>
<span style="left:2510.49px;top:208.02px;font:400 34px/34px 'Liberation Sans',sans-serif;color:#ffffff;transform:scaleX(1.0394);transform-origin:0 0;-webkit-text-stroke:0.5px #fff;">a</span>
<span style="left:2551.41px;top:208.02px;font:400 34px/34px 'Liberation Sans',sans-serif;color:#ffffff;transform:scaleX(1.5571);transform-origin:0 0;-webkit-text-stroke:0.5px #fff;">t</span>
<span style="left:2587.71px;top:208.02px;font:400 34px/34px 'Liberation Sans',sans-serif;color:#ffffff;transform:scaleX(1.2390);transform-origin:0 0;-webkit-text-stroke:0.5px #fff;">e</span>
<span style="left:2630.89px;top:208.02px;font:400 34px/34px 'Liberation Sans',sans-serif;color:#ffffff;transform:scaleX(1.2847);transform-origin:0 0;-webkit-text-stroke:0.5px #fff;">s</span>
<svg style="position:absolute;left:2849.0px;top:252.0px" width="17" height="10"><path d="M1 1 L8.5 9 L16 1" fill="none" stroke="#e0e0e0" stroke-width="1.8"/></svg>
<div style="left:11.0px;top:278.0px;width:2849.0px;height:19.0px;background:#0b0b0b;"></div>
<div style="left:11.0px;top:297.0px;width:43.0px;height:1373.0px;background:#232323;"></div>
<div style="left:54.0px;top:297.0px;width:33.0px;height:1373.0px;background:#0d0d0d;"></div>
<div style="left:13.4px;top:279.0px;width:17.6px;height:17.4px;background:#e6e6e6;"></div>
<div style="left:33.0px;top:279.0px;width:17.2px;height:17.4px;background:#e6e6e6;"></div>
<span style="left:18.4px;top:282.0px;font:400 13px/13px 'Liberation Sans',sans-serif;color:#555;">1</span>
<span style="left:37.9px;top:282.0px;font:400 13px/13px 'Liberation Sans',sans-serif;color:#555;">2</span>
<svg style="position:absolute;left:70px;top:281px" width="16" height="15"><path d="M15 0 L15 14 L1 14 Z" fill="#5a5a5a"/></svg>
<div style="left:87.0px;top:278.0px;width:23.0px;height:19.0px;background:#5e5e5e;"></div>
<span style="left:93.2px;top:280.2px;font:400 16px/16px 'Liberation Sans',sans-serif;color:#e6e6e6;">A</span>
<div style="left:109.5px;top:279.0px;width:1.0px;height:18.0px;background:#3c3c3c;"></div>
<span style="left:110.9px;top:280.2px;font:400 16px/16px 'Liberation Sans',sans-serif;color:#e6e6e6;">B</span>
<div style="left:122.0px;top:279.0px;width:1.0px;height:18.0px;background:#3c3c3c;"></div>
<span style="left:123.5px;top:280.2px;font:400 16px/16px 'Liberation Sans',sans-serif;color:#e6e6e6;">C</span>
<div style="left:135.5px;top:279.0px;width:1.0px;height:18.0px;background:#3c3c3c;"></div>
<span style="left:145.9px;top:280.2px;font:400 16px/16px 'Liberation Sans',sans-serif;color:#e6e6e6;">D</span>
<div style="left:166.9px;top:279.0px;width:1.0px;height:18.0px;background:#3c3c3c;"></div>
<span style="left:178.4px;top:280.2px;font:400 16px/16px 'Liberation Sans',sans-serif;color:#e6e6e6;">E</span>
<div style="left:199.5px;top:279.0px;width:1.0px;height:18.0px;background:#3c3c3c;"></div>
<span style="left:270.6px;top:280.2px;font:400 16px/16px 'Liberation Sans',sans-serif;color:#e6e6e6;">F</span>
<div style="left:350.5px;top:279.0px;width:1.0px;height:18.0px;background:#3c3c3c;"></div>
<span style="left:420.8px;top:280.2px;font:400 16px/16px 'Liberation Sans',sans-serif;color:#e6e6e6;">G</span>
<div style="left:502.5px;top:279.0px;width:1.0px;height:18.0px;background:#3c3c3c;"></div>
<span style="left:573.2px;top:280.2px;font:400 16px/16px 'Liberation Sans',sans-serif;color:#e6e6e6;">H</span>
<div style="left:654.5px;top:279.0px;width:1.0px;height:18.0px;background:#3c3c3c;"></div>
<span style="left:728.8px;top:280.2px;font:400 16px/16px 'Liberation Sans',sans-serif;color:#e6e6e6;">I</span>
<div style="left:806.5px;top:279.0px;width:1.0px;height:18.0px;background:#3c3c3c;"></div>
<span style="left:863.0px;top:280.2px;font:400 16px/16px 'Liberation Sans',sans-serif;color:#e6e6e6;">J</span>
<div style="left:926.5px;top:279.0px;width:1.0px;height:18.0px;background:#3c3c3c;"></div>
<span style="left:981.7px;top:280.2px;font:400 16px/16px 'Liberation Sans',sans-serif;color:#e6e6e6;">K</span>
<div style="left:1046.5px;top:279.0px;width:1.0px;height:18.0px;background:#3c3c3c;"></div>
<span style="left:1102.5px;top:280.2px;font:400 16px/16px 'Liberation Sans',sans-serif;color:#e6e6e6;">L</span>
<div style="left:1166.5px;top:279.0px;width:1.0px;height:18.0px;background:#3c3c3c;"></div>
<span style="left:1220.3px;top:280.2px;font:400 16px/16px 'Liberation Sans',sans-serif;color:#e6e6e6;">M</span>
<div style="left:1286.5px;top:279.0px;width:1.0px;height:18.0px;background:#3c3c3c;"></div>
<span style="left:1341.2px;top:280.2px;font:400 16px/16px 'Liberation Sans',sans-serif;color:#e6e6e6;">N</span>
<div style="left:1406.5px;top:279.0px;width:1.0px;height:18.0px;background:#3c3c3c;"></div>
<span style="left:1460.8px;top:280.2px;font:400 16px/16px 'Liberation Sans',sans-serif;color:#e6e6e6;">O</span>
<div style="left:1526.5px;top:279.0px;width:1.0px;height:18.0px;background:#3c3c3c;"></div>
<span style="left:1581.7px;top:280.2px;font:400 16px/16px 'Liberation Sans',sans-serif;color:#e6e6e6;">P</span>
<div style="left:1646.5px;top:279.0px;width:1.0px;height:18.0px;background:#3c3c3c;"></div>
<span style="left:1700.8px;top:280.2px;font:400 16px/16px 'Liberation Sans',sans-serif;color:#e6e6e6;">Q</span>
<div style="left:1766.5px;top:279.0px;width:1.0px;height:18.0px;background:#3c3c3c;"></div>
<span style="left:1821.2px;top:280.2px;font:400 16px/16px 'Liberation Sans',sans-serif;color:#e6e6e6;">R</span>
<div style="left:1886.5px;top:279.0px;width:1.0px;height:18.0px;background:#3c3c3c;"></div>
<span style="left:1941.7px;top:280.2px;font:400 16px/16px 'Liberation Sans',sans-serif;color:#e6e6e6;">S</span>
<div style="left:2006.5px;top:279.0px;width:1.0px;height:18.0px;background:#3c3c3c;"></div>
<span style="left:2062.1px;top:280.2px;font:400 16px/16px 'Liberation Sans',sans-serif;color:#e6e6e6;">T</span>
<div style="left:2126.5px;top:279.0px;width:1.0px;height:18.0px;background:#3c3c3c;"></div>
<span style="left:2181.2px;top:280.2px;font:400 16px/16px 'Liberation Sans',sans-serif;color:#e6e6e6;">U</span>
<div style="left:2246.5px;top:279.0px;width:1.0px;height:18.0px;background:#3c3c3c;"></div>
<span style="left:2301.7px;top:280.2px;font:400 16px/16px 'Liberation Sans',sans-serif;color:#e6e6e6;">V</span>
<div style="left:2366.5px;top:279.0px;width:1.0px;height:18.0px;background:#3c3c3c;"></div>
<span style="left:2419.4px;top:280.2px;font:400 16px/16px 'Liberation Sans',sans-serif;color:#e6e6e6;">W</span>
<div style="left:2486.5px;top:279.0px;width:1.0px;height:18.0px;background:#3c3c3c;"></div>
<span style="left:2541.7px;top:280.2px;font:400 16px/16px 'Liberation Sans',sans-serif;color:#e6e6e6;">X</span>
<div style="left:2606.5px;top:279.0px;width:1.0px;height:18.0px;background:#3c3c3c;"></div>
<span style="left:2661.7px;top:280.2px;font:400 16px/16px 'Liberation Sans',sans-serif;color:#e6e6e6;">Y</span>
<div style="left:2726.5px;top:279.0px;width:1.0px;height:18.0px;background:#3c3c3c;"></div>
<span style="left:2782.1px;top:280.2px;font:400 16px/16px 'Liberation Sans',sans-serif;color:#e6e6e6;">Z</span>
<div style="left:2846.5px;top:279.0px;width:1.0px;height:18.0px;background:#3c3c3c;"></div>
<div style="left:87.0px;top:295.5px;width:23.0px;height:1.5px;background:#2e8b57;"></div>
<div style="left:54.0px;top:297.0px;width:33.0px;height:36.0px;background:#6b6b6b;"></div>
<div style="left:54.0px;top:332.0px;width:33.0px;height:1.0px;background:#3a3a3a;"></div>
<div style="left:54px;top:297.0px;width:33px;height:35.0px;overflow:hidden">
<span style="left:12.3px;top:19.3px;font:400 15px/15px 'Liberation Sans',sans-serif;color:#e2e2e2">1</span></div>
<div style="left:54.0px;top:361.0px;width:33.0px;height:1.0px;background:#3a3a3a;"></div>
<div style="left:54px;top:333.0px;width:33px;height:28.0px;overflow:hidden">
<span style="left:12.3px;top:12.3px;font:400 15px/15px 'Liberation Sans',sans-serif;color:#e2e2e2">2</span></div>
<div style="left:54.0px;top:379.0px;width:33.0px;height:1.0px;background:#3a3a3a;"></div>
<div style="left:54px;top:362.0px;width:33px;height:17.0px;overflow:hidden">
<span style="left:12.3px;top:1.3px;font:400 15px/15px 'Liberation Sans',sans-serif;color:#e2e2e2">3</span></div>
<div style="left:54.0px;top:384.0px;width:33.0px;height:1.0px;background:#3a3a3a;"></div>
<div style="left:54.0px;top:415.0px;width:33.0px;height:1.0px;background:#3a3a3a;"></div>
<div style="left:54px;top:385.0px;width:33px;height:30.0px;overflow:hidden">
<span style="left:12.3px;top:14.3px;font:400 15px/15px 'Liberation Sans',sans-serif;color:#e2e2e2">5</span></div>
<div style="left:54.0px;top:435.0px;width:33.0px;height:1.0px;background:#3a3a3a;"></div>
<div style="left:54px;top:416.0px;width:33px;height:19.0px;overflow:hidden">
<span style="left:12.3px;top:3.3px;font:400 15px/15px 'Liberation Sans',sans-serif;color:#e2e2e2">6</span></div>
<div style="left:54.0px;top:454.0px;width:33.0px;height:1.0px;background:#3a3a3a;"></div>
<div style="left:54px;top:436.0px;width:33px;height:18.0px;overflow:hidden">
<span style="left:12.3px;top:2.3px;font:400 15px/15px 'Liberation Sans',sans-serif;color:#e2e2e2">7</span></div>
<div style="left:54.0px;top:475.0px;width:33.0px;height:1.0px;background:#3a3a3a;"></div>
<div style="left:54px;top:456.0px;width:33px;height:19.0px;overflow:hidden">
<span style="left:8.2px;top:3.3px;font:400 15px/15px 'Liberation Sans',sans-serif;color:#e2e2e2">13</span></div>
<div style="left:54.0px;top:500.0px;width:33.0px;height:1.0px;background:#3a3a3a;"></div>
<div style="left:54px;top:476.0px;width:33px;height:24.0px;overflow:hidden">
<span style="left:8.2px;top:8.3px;font:400 15px/15px 'Liberation Sans',sans-serif;color:#e2e2e2">14</span></div>
<div style="left:54.0px;top:513.0px;width:33.0px;height:1.0px;background:#3a3a3a;"></div>
<div style="left:54px;top:501.0px;width:33px;height:12.0px;overflow:hidden">
<span style="left:8.2px;top:-3.7px;font:400 15px/15px 'Liberation Sans',sans-serif;color:#e2e2e2">15</span></div>
<div style="left:54.0px;top:537.0px;width:33.0px;height:1.0px;background:#3a3a3a;"></div>
<div style="left:54px;top:514.0px;width:33px;height:23.0px;overflow:hidden">
<span style="left:8.2px;top:7.3px;font:400 15px/15px 'Liberation Sans',sans-serif;color:#e2e2e2">16</span></div>
<div style="left:54.0px;top:543.0px;width:33.0px;height:1.0px;background:#3a3a3a;"></div>
<div style="left:54px;top:538.0px;width:33px;height:5.0px;overflow:hidden">
<span style="left:8.2px;top:-10.7px;font:400 15px/15px 'Liberation Sans',sans-serif;color:#e2e2e2">17</span></div>
<div style="left:54.0px;top:546.0px;width:33.0px;height:1.0px;background:#3a3a3a;"></div>
<div style="left:54.0px;top:563.0px;width:33.0px;height:1.0px;background:#3a3a3a;"></div>
<div style="left:54px;top:547.0px;width:33px;height:16.0px;overflow:hidden">
<span style="left:8.2px;top:0.3px;font:400 15px/15px 'Liberation Sans',sans-serif;color:#e2e2e2">19</span></div>
<div style="left:54.0px;top:567.0px;width:33.0px;height:1.0px;background:#3a3a3a;"></div>
<div style="left:54.0px;top:584.0px;width:33.0px;height:1.0px;background:#3a3a3a;"></div>
<div style="left:54px;top:568.0px;width:33px;height:16.0px;overflow:hidden">
<span style="left:8.2px;top:0.3px;font:400 15px/15px 'Liberation Sans',sans-serif;color:#e2e2e2">22</span></div>
<div style="left:54.0px;top:604.0px;width:33.0px;height:1.0px;background:#3a3a3a;"></div>
<div style="left:54px;top:585.0px;width:33px;height:19.0px;overflow:hidden">
<span style="left:8.2px;top:3.3px;font:400 15px/15px 'Liberation Sans',sans-serif;color:#e2e2e2">23</span></div>
<div style="left:54.0px;top:624.0px;width:33.0px;height:1.0px;background:#3a3a3a;"></div>
<div style="left:54px;top:605.0px;width:33px;height:19.0px;overflow:hidden">
<span style="left:8.2px;top:3.3px;font:400 15px/15px 'Liberation Sans',sans-serif;color:#e2e2e2">24</span></div>
<div style="left:54.0px;top:644.0px;width:33.0px;height:1.0px;background:#3a3a3a;"></div>
<div style="left:54px;top:625.0px;width:33px;height:19.0px;overflow:hidden">
<span style="left:8.2px;top:3.3px;font:400 15px/15px 'Liberation Sans',sans-serif;color:#e2e2e2">25</span></div>
<div style="left:54.0px;top:661.0px;width:33.0px;height:1.0px;background:#3a3a3a;"></div>
<div style="left:54px;top:645.0px;width:33px;height:16.0px;overflow:hidden">
<span style="left:8.2px;top:0.3px;font:400 15px/15px 'Liberation Sans',sans-serif;color:#e2e2e2">26</span></div>
<div style="left:54.0px;top:684.0px;width:33.0px;height:1.0px;background:#3a3a3a;"></div>
<div style="left:54px;top:662.0px;width:33px;height:22.0px;overflow:hidden">
<span style="left:8.2px;top:6.3px;font:400 15px/15px 'Liberation Sans',sans-serif;color:#e2e2e2">27</span></div>
<div style="left:54.0px;top:688.0px;width:33.0px;height:1.0px;background:#3a3a3a;"></div>
<div style="left:54.0px;top:708.0px;width:33.0px;height:1.0px;background:#3a3a3a;"></div>
<div style="left:54px;top:689.0px;width:33px;height:19.0px;overflow:hidden">
<span style="left:8.2px;top:3.3px;font:400 15px/15px 'Liberation Sans',sans-serif;color:#e2e2e2">29</span></div>
<div style="left:54.0px;top:712.5px;width:33.0px;height:1.0px;background:#3a3a3a;"></div>
<div style="left:54.0px;top:732.0px;width:33.0px;height:1.0px;background:#3a3a3a;"></div>
<div style="left:54px;top:713.5px;width:33px;height:18.5px;overflow:hidden">
<span style="left:8.2px;top:2.8px;font:400 15px/15px 'Liberation Sans',sans-serif;color:#e2e2e2">31</span></div>
<div style="left:54.0px;top:749.0px;width:33.0px;height:1.0px;background:#3a3a3a;"></div>
<div style="left:54px;top:733.0px;width:33px;height:16.0px;overflow:hidden">
<span style="left:8.2px;top:0.3px;font:400 15px/15px 'Liberation Sans',sans-serif;color:#e2e2e2">32</span></div>
<div style="left:54.0px;top:772.0px;width:33.0px;height:1.0px;background:#3a3a3a;"></div>
<div style="left:54px;top:750.0px;width:33px;height:22.0px;overflow:hidden">
<span style="left:8.2px;top:6.3px;font:400 15px/15px 'Liberation Sans',sans-serif;color:#e2e2e2">33</span></div>
<div style="left:54.0px;top:776.0px;width:33.0px;height:1.0px;background:#3a3a3a;"></div>
<div style="left:54.0px;top:796.0px;width:33.0px;height:1.0px;background:#3a3a3a;"></div>
<div style="left:54px;top:777.0px;width:33px;height:19.0px;overflow:hidden">
<span style="left:8.2px;top:3.3px;font:400 15px/15px 'Liberation Sans',sans-serif;color:#e2e2e2">35</span></div>
<div style="left:54.0px;top:816.0px;width:33.0px;height:1.0px;background:#3a3a3a;"></div>
<div style="left:54px;top:797.0px;width:33px;height:19.0px;overflow:hidden">
<span style="left:8.2px;top:3.3px;font:400 15px/15px 'Liberation Sans',sans-serif;color:#e2e2e2">36</span></div>
<div style="left:54.0px;top:836.0px;width:33.0px;height:1.0px;background:#3a3a3a;"></div>
<div style="left:54px;top:817.0px;width:33px;height:19.0px;overflow:hidden">
<span style="left:8.2px;top:3.3px;font:400 15px/15px 'Liberation Sans',sans-serif;color:#e2e2e2">37</span></div>
<div style="left:54.0px;top:856.0px;width:33.0px;height:1.0px;background:#3a3a3a;"></div>
<div style="left:54px;top:837.0px;width:33px;height:19.0px;overflow:hidden">
<span style="left:8.2px;top:3.3px;font:400 15px/15px 'Liberation Sans',sans-serif;color:#e2e2e2">38</span></div>
<div style="left:54.0px;top:876.0px;width:33.0px;height:1.0px;background:#3a3a3a;"></div>
<div style="left:54px;top:857.0px;width:33px;height:19.0px;overflow:hidden">
<span style="left:8.2px;top:3.3px;font:400 15px/15px 'Liberation Sans',sans-serif;color:#e2e2e2">39</span></div>
<div style="left:54.0px;top:896.0px;width:33.0px;height:1.0px;background:#3a3a3a;"></div>
<div style="left:54px;top:877.0px;width:33px;height:19.0px;overflow:hidden">
<span style="left:8.2px;top:3.3px;font:400 15px/15px 'Liberation Sans',sans-serif;color:#e2e2e2">40</span></div>
<div style="left:54.0px;top:913.5px;width:33.0px;height:1.0px;background:#3a3a3a;"></div>
<div style="left:54px;top:897.0px;width:33px;height:16.5px;overflow:hidden">
<span style="left:8.2px;top:0.8px;font:400 15px/15px 'Liberation Sans',sans-serif;color:#e2e2e2">41</span></div>
<div style="left:54.0px;top:933.0px;width:33.0px;height:1.0px;background:#3a3a3a;"></div>
<div style="left:54px;top:914.5px;width:33px;height:18.5px;overflow:hidden">
<span style="left:8.2px;top:2.8px;font:400 15px/15px 'Liberation Sans',sans-serif;color:#e2e2e2">42</span></div>
<div style="left:54.0px;top:950.0px;width:33.0px;height:1.0px;background:#3a3a3a;"></div>
<div style="left:54px;top:934.0px;width:33px;height:16.0px;overflow:hidden">
<span style="left:8.2px;top:0.3px;font:400 15px/15px 'Liberation Sans',sans-serif;color:#e2e2e2">43</span></div>
<div style="left:54.0px;top:967.0px;width:33.0px;height:1.0px;background:#3a3a3a;"></div>
<div style="left:54px;top:951.0px;width:33px;height:16.0px;overflow:hidden">
<span style="left:8.2px;top:0.3px;font:400 15px/15px 'Liberation Sans',sans-serif;color:#e2e2e2">44</span></div>
<div style="left:54.0px;top:992.0px;width:33.0px;height:1.0px;background:#3a3a3a;"></div>
<div style="left:54px;top:968.0px;width:33px;height:24.0px;overflow:hidden">
<span style="left:8.2px;top:8.3px;font:400 15px/15px 'Liberation Sans',sans-serif;color:#e2e2e2">45</span></div>
<div style="left:54.0px;top:1005.0px;width:33.0px;height:1.0px;background:#3a3a3a;"></div>
<div style="left:54px;top:993.0px;width:33px;height:12.0px;overflow:hidden">
<span style="left:8.2px;top:-3.7px;font:400 15px/15px 'Liberation Sans',sans-serif;color:#e2e2e2">46</span></div>
<div style="left:54.0px;top:1027.5px;width:33.0px;height:1.0px;background:#3a3a3a;"></div>
<div style="left:54px;top:1006.0px;width:33px;height:21.5px;overflow:hidden">
<span style="left:8.2px;top:5.8px;font:400 15px/15px 'Liberation Sans',sans-serif;color:#e2e2e2">47</span></div>
<div style="left:54.0px;top:1051.0px;width:33.0px;height:1.0px;background:#3a3a3a;"></div>
<div style="left:54px;top:1028.5px;width:33px;height:22.5px;overflow:hidden">
<span style="left:8.2px;top:6.8px;font:400 15px/15px 'Liberation Sans',sans-serif;color:#e2e2e2">48</span></div>
<div style="left:54.0px;top:1074.0px;width:33.0px;height:1.0px;background:#3a3a3a;"></div>
<div style="left:54px;top:1052.0px;width:33px;height:22.0px;overflow:hidden">
<span style="left:8.2px;top:6.3px;font:400 15px/15px 'Liberation Sans',sans-serif;color:#e2e2e2">49</span></div>
<div style="left:54.0px;top:1094.5px;width:33.0px;height:1.0px;background:#3a3a3a;"></div>
<div style="left:54px;top:1075.0px;width:33px;height:19.5px;overflow:hidden">
<span style="left:8.2px;top:3.8px;font:400 15px/15px 'Liberation Sans',sans-serif;color:#e2e2e2">50</span></div>
<div style="left:54.0px;top:1117.0px;width:33.0px;height:1.0px;background:#3a3a3a;"></div>
<div style="left:54px;top:1095.5px;width:33px;height:21.5px;overflow:hidden">
<span style="left:8.2px;top:5.8px;font:400 15px/15px 'Liberation Sans',sans-serif;color:#e2e2e2">51</span></div>
<div style="left:54.0px;top:1140.0px;width:33.0px;height:1.0px;background:#3a3a3a;"></div>
<div style="left:54px;top:1118.0px;width:33px;height:22.0px;overflow:hidden">
<span style="left:8.2px;top:6.3px;font:400 15px/15px 'Liberation Sans',sans-serif;color:#e2e2e2">52</span></div>
<div style="left:54.0px;top:1163.0px;width:33.0px;height:1.0px;background:#3a3a3a;"></div>
<div style="left:54px;top:1141.0px;width:33px;height:22.0px;overflow:hidden">
<span style="left:8.2px;top:6.3px;font:400 15px/15px 'Liberation Sans',sans-serif;color:#e2e2e2">53</span></div>
<div style="left:54.0px;top:1184.0px;width:33.0px;height:1.0px;background:#3a3a3a;"></div>
<div style="left:54px;top:1164.0px;width:33px;height:20.0px;overflow:hidden">
<span style="left:8.2px;top:4.3px;font:400 15px/15px 'Liberation Sans',sans-serif;color:#e2e2e2">54</span></div>
<div style="left:54.0px;top:1206.0px;width:33.0px;height:1.0px;background:#3a3a3a;"></div>
<div style="left:54px;top:1185.0px;width:33px;height:21.0px;overflow:hidden">
<span style="left:8.2px;top:5.3px;font:400 15px/15px 'Liberation Sans',sans-serif;color:#e2e2e2">55</span></div>
<div style="left:54.0px;top:1229.0px;width:33.0px;height:1.0px;background:#3a3a3a;"></div>
<div style="left:54px;top:1207.0px;width:33px;height:22.0px;overflow:hidden">
<span style="left:8.2px;top:6.3px;font:400 15px/15px 'Liberation Sans',sans-serif;color:#e2e2e2">56</span></div>
<div style="left:54.0px;top:1249.0px;width:33.0px;height:1.0px;background:#3a3a3a;"></div>
<div style="left:54px;top:1230.0px;width:33px;height:19.0px;overflow:hidden">
<span style="left:8.2px;top:3.3px;font:400 15px/15px 'Liberation Sans',sans-serif;color:#e2e2e2">57</span></div>
<div style="left:54.0px;top:1269.0px;width:33.0px;height:1.0px;background:#3a3a3a;"></div>
<div style="left:54px;top:1250.0px;width:33px;height:19.0px;overflow:hidden">
<span style="left:8.2px;top:3.3px;font:400 15px/15px 'Liberation Sans',sans-serif;color:#e2e2e2">58</span></div>
<div style="left:54.0px;top:1289.0px;width:33.0px;height:1.0px;background:#3a3a3a;"></div>
<div style="left:54px;top:1270.0px;width:33px;height:19.0px;overflow:hidden">
<span style="left:8.2px;top:3.3px;font:400 15px/15px 'Liberation Sans',sans-serif;color:#e2e2e2">59</span></div>
<div style="left:54.0px;top:1309.5px;width:33.0px;height:1.0px;background:#3a3a3a;"></div>
<div style="left:54px;top:1290.0px;width:33px;height:19.5px;overflow:hidden">
<span style="left:8.2px;top:3.8px;font:400 15px/15px 'Liberation Sans',sans-serif;color:#e2e2e2">60</span></div>
<div style="left:54.0px;top:1332.0px;width:33.0px;height:1.0px;background:#3a3a3a;"></div>
<div style="left:54px;top:1310.5px;width:33px;height:21.5px;overflow:hidden">
<span style="left:8.2px;top:5.8px;font:400 15px/15px 'Liberation Sans',sans-serif;color:#e2e2e2">61</span></div>
<div style="left:54.0px;top:1355.0px;width:33.0px;height:1.0px;background:#3a3a3a;"></div>
<div style="left:54px;top:1333.0px;width:33px;height:22.0px;overflow:hidden">
<span style="left:8.2px;top:6.3px;font:400 15px/15px 'Liberation Sans',sans-serif;color:#e2e2e2">62</span></div>
<div style="left:54.0px;top:1379.0px;width:33.0px;height:1.0px;background:#3a3a3a;"></div>
<div style="left:54px;top:1356.0px;width:33px;height:23.0px;overflow:hidden">
<span style="left:8.2px;top:7.3px;font:400 15px/15px 'Liberation Sans',sans-serif;color:#e2e2e2">63</span></div>
<div style="left:54.0px;top:1401.5px;width:33.0px;height:1.0px;background:#3a3a3a;"></div>
<div style="left:54px;top:1380.0px;width:33px;height:21.5px;overflow:hidden">
<span style="left:8.2px;top:5.8px;font:400 15px/15px 'Liberation Sans',sans-serif;color:#e2e2e2">64</span></div>
<div style="left:54.0px;top:1421.5px;width:33.0px;height:1.0px;background:#3a3a3a;"></div>
<div style="left:54px;top:1402.5px;width:33px;height:19.0px;overflow:hidden">
<span style="left:8.2px;top:3.3px;font:400 15px/15px 'Liberation Sans',sans-serif;color:#e2e2e2">65</span></div>
<div style="left:54.0px;top:1442.0px;width:33.0px;height:1.0px;background:#3a3a3a;"></div>
<div style="left:54px;top:1422.5px;width:33px;height:19.5px;overflow:hidden">
<span style="left:8.2px;top:3.8px;font:400 15px/15px 'Liberation Sans',sans-serif;color:#e2e2e2">66</span></div>
<div style="left:54.0px;top:1459.0px;width:33.0px;height:1.0px;background:#3a3a3a;"></div>
<div style="left:54px;top:1443.0px;width:33px;height:16.0px;overflow:hidden">
<span style="left:8.2px;top:0.3px;font:400 15px/15px 'Liberation Sans',sans-serif;color:#e2e2e2">67</span></div>
<div style="left:54.0px;top:1484.0px;width:33.0px;height:1.0px;background:#3a3a3a;"></div>
<div style="left:54px;top:1460.0px;width:33px;height:24.0px;overflow:hidden">
<span style="left:8.2px;top:8.3px;font:400 15px/15px 'Liberation Sans',sans-serif;color:#e2e2e2">68</span></div>
<div style="left:54.0px;top:1497.0px;width:33.0px;height:1.0px;background:#3a3a3a;"></div>
<div style="left:54px;top:1485.0px;width:33px;height:12.0px;overflow:hidden">
<span style="left:8.2px;top:-3.7px;font:400 15px/15px 'Liberation Sans',sans-serif;color:#e2e2e2">69</span></div>
<div style="left:54.0px;top:1517.5px;width:33.0px;height:1.0px;background:#3a3a3a;"></div>
<div style="left:54px;top:1498.0px;width:33px;height:19.5px;overflow:hidden">
<span style="left:8.2px;top:3.8px;font:400 15px/15px 'Liberation Sans',sans-serif;color:#e2e2e2">70</span></div>
<div style="left:54.0px;top:1537.5px;width:33.0px;height:1.0px;background:#3a3a3a;"></div>
<div style="left:54px;top:1518.5px;width:33px;height:19.0px;overflow:hidden">
<span style="left:8.2px;top:3.3px;font:400 15px/15px 'Liberation Sans',sans-serif;color:#e2e2e2">71</span></div>
<div style="left:54.0px;top:1557.5px;width:33.0px;height:1.0px;background:#3a3a3a;"></div>
<div style="left:54px;top:1538.5px;width:33px;height:19.0px;overflow:hidden">
<span style="left:8.2px;top:3.3px;font:400 15px/15px 'Liberation Sans',sans-serif;color:#e2e2e2">72</span></div>
<div style="left:54.0px;top:1577.5px;width:33.0px;height:1.0px;background:#3a3a3a;"></div>
<div style="left:54px;top:1558.5px;width:33px;height:19.0px;overflow:hidden">
<span style="left:8.2px;top:3.3px;font:400 15px/15px 'Liberation Sans',sans-serif;color:#e2e2e2">73</span></div>
<div style="left:54.0px;top:1597.5px;width:33.0px;height:1.0px;background:#3a3a3a;"></div>
<div style="left:54px;top:1578.5px;width:33px;height:19.0px;overflow:hidden">
<span style="left:8.2px;top:3.3px;font:400 15px/15px 'Liberation Sans',sans-serif;color:#e2e2e2">74</span></div>
<div style="left:54.0px;top:1617.5px;width:33.0px;height:1.0px;background:#3a3a3a;"></div>
<div style="left:54px;top:1598.5px;width:33px;height:19.0px;overflow:hidden">
<span style="left:8.2px;top:3.3px;font:400 15px/15px 'Liberation Sans',sans-serif;color:#e2e2e2">75</span></div>
<div style="left:54.0px;top:1637.0px;width:33.0px;height:1.0px;background:#3a3a3a;"></div>
<div style="left:54px;top:1618.5px;width:33px;height:18.5px;overflow:hidden">
<span style="left:8.2px;top:2.8px;font:400 15px/15px 'Liberation Sans',sans-serif;color:#e2e2e2">76</span></div>
<div style="left:54.0px;top:1657.5px;width:33.0px;height:1.0px;background:#3a3a3a;"></div>
<div style="left:54px;top:1638.0px;width:33px;height:19.5px;overflow:hidden">
<span style="left:8.2px;top:3.8px;font:400 15px/15px 'Liberation Sans',sans-serif;color:#e2e2e2">77</span></div>
<div style="left:54px;top:1658.5px;width:33px;height:10.5px;overflow:hidden">
<span style="left:8.2px;top:-0.2px;font:400 15px/15px 'Liberation Sans',sans-serif;color:#e2e2e2">78</span></div>
<div style="left:13.5px;top:546.5px;width:18.0px;height:17.5px;background:#e8e8e8;border:1px solid #bdbdbd;box-sizing:border-box"></div>
<span style="left:18.1px;top:546.8px;font:700 15px/15px 'Liberation Sans',sans-serif;color:#555;">+</span>
<div style="left:13.5px;top:567.0px;width:18.0px;height:17.5px;background:#e8e8e8;border:1px solid #bdbdbd;box-sizing:border-box"></div>
<span style="left:18.1px;top:567.3px;font:700 15px/15px 'Liberation Sans',sans-serif;color:#555;">+</span>
<div style="left:87.0px;top:297.0px;width:2773.0px;height:1373.0px;background:#ffffff;"></div>
<div style="left:135.0px;top:625.0px;width:2725.0px;height:20.0px;background:#4aafe4;"></div>
<span style="left:145.38px;top:627.96px;font:700 16px/16px 'Liberation Sans',sans-serif;color:#ffffff;transform:scaleX(1.0724);transform-origin:0 0;">Net Cash Flow from Operating Activities</span>
<span style="left:866.16px;top:628.10px;font:700 16px/16px 'Liberation Serif',serif;color:#ffffff;transform:scaleX(1.2400);transform-origin:0 0;">(4,678)</span>
<span style="left:986.16px;top:628.10px;font:700 16px/16px 'Liberation Serif',serif;color:#ffffff;transform:scaleX(1.2400);transform-origin:0 0;">(6,905)</span>
<span style="left:1106.16px;top:628.10px;font:700 16px/16px 'Liberation Serif',serif;color:#ffffff;transform:scaleX(1.2400);transform-origin:0 0;">(6,514)</span>
<span style="left:1226.16px;top:628.10px;font:700 16px/16px 'Liberation Serif',serif;color:#ffffff;transform:scaleX(1.2400);transform-origin:0 0;">(4,821)</span>
<span style="left:1346.16px;top:628.10px;font:700 16px/16px 'Liberation Serif',serif;color:#ffffff;transform:scaleX(1.2400);transform-origin:0 0;">(3,334)</span>
<span style="left:1466.16px;top:628.10px;font:700 16px/16px 'Liberation Serif',serif;color:#ffffff;transform:scaleX(1.2400);transform-origin:0 0;">(1,916)</span>
<span style="left:1586.16px;top:628.10px;font:700 16px/16px 'Liberation Serif',serif;color:#ffffff;transform:scaleX(1.2400);transform-origin:0 0;">(1,540)</span>
<span style="left:1706.16px;top:628.10px;font:700 16px/16px 'Liberation Serif',serif;color:#ffffff;transform:scaleX(1.2400);transform-origin:0 0;">(1,285)</span>
<span style="left:1856.96px;top:628.10px;font:700 16px/16px 'Liberation Serif',serif;color:#ffffff;transform:scaleX(1.2400);transform-origin:0 0;">74</span>
<span style="left:1952.45px;top:628.10px;font:700 16px/16px 'Liberation Serif',serif;color:#ffffff;transform:scaleX(1.2400);transform-origin:0 0;">1,319</span>
<span style="left:2072.45px;top:628.10px;font:700 16px/16px 'Liberation Serif',serif;color:#ffffff;transform:scaleX(1.2400);transform-origin:0 0;">1,079</span>
<span style="left:2192.75px;top:628.10px;font:700 16px/16px 'Liberation Serif',serif;color:#ffffff;transform:scaleX(1.2400);transform-origin:0 0;">1,341</span>
<span style="left:2327.33px;top:628.10px;font:700 16px/16px 'Liberation Serif',serif;color:#ffffff;transform:scaleX(1.2400);transform-origin:0 0;">510</span>
<span style="left:2447.33px;top:628.10px;font:700 16px/16px 'Liberation Serif',serif;color:#ffffff;transform:scaleX(1.2400);transform-origin:0 0;">568</span>
<span style="left:2552.55px;top:628.10px;font:700 16px/16px 'Liberation Serif',serif;color:#ffffff;transform:scaleX(1.2400);transform-origin:0 0;">3,092</span>
<span style="left:2672.45px;top:628.10px;font:700 16px/16px 'Liberation Serif',serif;color:#ffffff;transform:scaleX(1.2400);transform-origin:0 0;">3,619</span>
<span style="left:2792.55px;top:628.10px;font:700 16px/16px 'Liberation Serif',serif;color:#ffffff;transform:scaleX(1.2400);transform-origin:0 0;">5,502</span>
<div style="left:135.0px;top:713.5px;width:2725.0px;height:19.5px;background:#4aafe4;"></div>
<span style="left:145.38px;top:716.06px;font:700 16px/16px 'Liberation Sans',sans-serif;color:#ffffff;transform:scaleX(1.0746);transform-origin:0 0;">Net Cash Flow from Investing Activities</span>
<span style="left:866.16px;top:716.20px;font:700 16px/16px 'Liberation Serif',serif;color:#ffffff;transform:scaleX(1.2400);transform-origin:0 0;">(6,500)</span>
<span style="left:986.16px;top:716.20px;font:700 16px/16px 'Liberation Serif',serif;color:#ffffff;transform:scaleX(1.2400);transform-origin:0 0;">(8,000)</span>
<span style="left:1106.16px;top:716.20px;font:700 16px/16px 'Liberation Serif',serif;color:#ffffff;transform:scaleX(1.2400);transform-origin:0 0;">(2,500)</span>
<span style="left:1226.16px;top:716.20px;font:700 16px/16px 'Liberation Serif',serif;color:#ffffff;transform:scaleX(1.2400);transform-origin:0 0;">(1,500)</span>
<span style="left:1361.04px;top:716.20px;font:700 16px/16px 'Liberation Serif',serif;color:#ffffff;transform:scaleX(1.2400);transform-origin:0 0;">(300)</span>
<span style="left:1481.04px;top:716.20px;font:700 16px/16px 'Liberation Serif',serif;color:#ffffff;transform:scaleX(1.2400);transform-origin:0 0;">(500)</span>
<span style="left:1630.10px;top:715.90px;font:700 16px/16px 'Liberation Serif',serif;color:#ffffff;transform:scaleX(1.2500);transform-origin:0 0;">-</span>
<span style="left:1750.10px;top:715.90px;font:700 16px/16px 'Liberation Serif',serif;color:#ffffff;transform:scaleX(1.2500);transform-origin:0 0;">-</span>
<span style="left:1870.10px;top:715.90px;font:700 16px/16px 'Liberation Serif',serif;color:#ffffff;transform:scaleX(1.2500);transform-origin:0 0;">-</span>
<span style="left:1990.10px;top:715.90px;font:700 16px/16px 'Liberation Serif',serif;color:#ffffff;transform:scaleX(1.2500);transform-origin:0 0;">-</span>
<span style="left:2110.10px;top:715.90px;font:700 16px/16px 'Liberation Serif',serif;color:#ffffff;transform:scaleX(1.2500);transform-origin:0 0;">-</span>
<span style="left:2230.10px;top:715.90px;font:700 16px/16px 'Liberation Serif',serif;color:#ffffff;transform:scaleX(1.2500);transform-origin:0 0;">-</span>
<span style="left:2350.10px;top:715.90px;font:700 16px/16px 'Liberation Serif',serif;color:#ffffff;transform:scaleX(1.2500);transform-origin:0 0;">-</span>
<span style="left:2470.10px;top:715.90px;font:700 16px/16px 'Liberation Serif',serif;color:#ffffff;transform:scaleX(1.2500);transform-origin:0 0;">-</span>
<span style="left:2590.10px;top:715.90px;font:700 16px/16px 'Liberation Serif',serif;color:#ffffff;transform:scaleX(1.2500);transform-origin:0 0;">-</span>
<span style="left:2710.10px;top:715.90px;font:700 16px/16px 'Liberation Serif',serif;color:#ffffff;transform:scaleX(1.2500);transform-origin:0 0;">-</span>
<span style="left:2830.10px;top:715.90px;font:700 16px/16px 'Liberation Serif',serif;color:#ffffff;transform:scaleX(1.2500);transform-origin:0 0;">-</span>
<div style="left:135.0px;top:877.0px;width:2725.0px;height:20.0px;background:#4aafe4;"></div>
<span style="left:145.40px;top:880.26px;font:700 16px/16px 'Liberation Sans',sans-serif;color:#ffffff;transform:scaleX(1.0592);transform-origin:0 0;">Net Cash Flow from Financing Activities</span>
<span style="left:852.61px;top:880.40px;font:700 16px/16px 'Liberation Serif',serif;color:#ffffff;transform:scaleX(1.2400);transform-origin:0 0;">900,000</span>
<span style="left:1030.10px;top:880.10px;font:700 16px/16px 'Liberation Serif',serif;color:#ffffff;transform:scaleX(1.2500);transform-origin:0 0;">-</span>
<span style="left:1102.53px;top:880.40px;font:700 16px/16px 'Liberation Serif',serif;color:#ffffff;transform:scaleX(1.2400);transform-origin:0 0;">98,333</span>
<span style="left:1226.16px;top:880.40px;font:700 16px/16px 'Liberation Serif',serif;color:#ffffff;transform:scaleX(1.2400);transform-origin:0 0;">(1,667)</span>
<span style="left:1346.16px;top:880.40px;font:700 16px/16px 'Liberation Serif',serif;color:#ffffff;transform:scaleX(1.2400);transform-origin:0 0;">(1,667)</span>
<span style="left:1466.16px;top:880.40px;font:700 16px/16px 'Liberation Serif',serif;color:#ffffff;transform:scaleX(1.2400);transform-origin:0 0;">(1,667)</span>
<span style="left:1586.16px;top:880.40px;font:700 16px/16px 'Liberation Serif',serif;color:#ffffff;transform:scaleX(1.2400);transform-origin:0 0;">(1,667)</span>
<span style="left:1706.16px;top:880.40px;font:700 16px/16px 'Liberation Serif',serif;color:#ffffff;transform:scaleX(1.2400);transform-origin:0 0;">(1,667)</span>
<span style="left:1826.16px;top:880.40px;font:700 16px/16px 'Liberation Serif',serif;color:#ffffff;transform:scaleX(1.2400);transform-origin:0 0;">(1,667)</span>
<span style="left:1946.16px;top:880.40px;font:700 16px/16px 'Liberation Serif',serif;color:#ffffff;transform:scaleX(1.2400);transform-origin:0 0;">(1,667)</span>
<span style="left:2066.16px;top:880.40px;font:700 16px/16px 'Liberation Serif',serif;color:#ffffff;transform:scaleX(1.2400);transform-origin:0 0;">(1,667)</span>
<span style="left:2186.16px;top:880.40px;font:700 16px/16px 'Liberation Serif',serif;color:#ffffff;transform:scaleX(1.2400);transform-origin:0 0;">(1,667)</span>
<span style="left:2306.16px;top:880.40px;font:700 16px/16px 'Liberation Serif',serif;color:#ffffff;transform:scaleX(1.2400);transform-origin:0 0;">(3,770)</span>
<span style="left:2426.16px;top:880.40px;font:700 16px/16px 'Liberation Serif',serif;color:#ffffff;transform:scaleX(1.2400);transform-origin:0 0;">(3,780)</span>
<span style="left:2546.16px;top:880.40px;font:700 16px/16px 'Liberation Serif',serif;color:#ffffff;transform:scaleX(1.2400);transform-origin:0 0;">(3,791)</span>
<span style="left:2666.16px;top:880.40px;font:700 16px/16px 'Liberation Serif',serif;color:#ffffff;transform:scaleX(1.2400);transform-origin:0 0;">(3,801)</span>
<span style="left:2786.16px;top:880.40px;font:700 16px/16px 'Liberation Serif',serif;color:#ffffff;transform:scaleX(1.2400);transform-origin:0 0;">(3,812)</span>
<div style="left:135.0px;top:914.5px;width:2725.0px;height:19.5px;background:#4aafe4;"></div>
<span style="left:145.36px;top:916.96px;font:700 16px/16px 'Liberation Sans',sans-serif;color:#ffffff;transform:scaleX(1.0929);transform-origin:0 0;">Net Increase/(Decrease) in Cash Held</span>
<span style="left:852.71px;top:917.10px;font:700 16px/16px 'Liberation Serif',serif;color:#ffffff;transform:scaleX(1.2400);transform-origin:0 0;">888,822</span>
<span style="left:976.24px;top:917.10px;font:700 16px/16px 'Liberation Serif',serif;color:#ffffff;transform:scaleX(1.2400);transform-origin:0 0;">(14,905)</span>
<span style="left:1102.53px;top:917.10px;font:700 16px/16px 'Liberation Serif',serif;color:#ffffff;transform:scaleX(1.2400);transform-origin:0 0;">89,319</span>
<span style="left:1226.16px;top:917.10px;font:700 16px/16px 'Liberation Serif',serif;color:#ffffff;transform:scaleX(1.2400);transform-origin:0 0;">(7,988)</span>
<span style="left:1346.16px;top:917.10px;font:700 16px/16px 'Liberation Serif',serif;color:#ffffff;transform:scaleX(1.2400);transform-origin:0 0;">(5,301)</span>
<span style="left:1466.16px;top:917.10px;font:700 16px/16px 'Liberation Serif',serif;color:#ffffff;transform:scaleX(1.2400);transform-origin:0 0;">(4,083)</span>
<span style="left:1586.16px;top:917.10px;font:700 16px/16px 'Liberation Serif',serif;color:#ffffff;transform:scaleX(1.2400);transform-origin:0 0;">(3,207)</span>
<span style="left:1706.16px;top:917.10px;font:700 16px/16px 'Liberation Serif',serif;color:#ffffff;transform:scaleX(1.2400);transform-origin:0 0;">(2,952)</span>
<span style="left:1826.16px;top:917.10px;font:700 16px/16px 'Liberation Serif',serif;color:#ffffff;transform:scaleX(1.2400);transform-origin:0 0;">(1,592)</span>
<span style="left:1961.04px;top:917.10px;font:700 16px/16px 'Liberation Serif',serif;color:#ffffff;transform:scaleX(1.2400);transform-origin:0 0;">(348)</span>
<span style="left:2081.04px;top:917.10px;font:700 16px/16px 'Liberation Serif',serif;color:#ffffff;transform:scaleX(1.2400);transform-origin:0 0;">(588)</span>
<span style="left:2201.04px;top:917.10px;font:700 16px/16px 'Liberation Serif',serif;color:#ffffff;transform:scaleX(1.2400);transform-origin:0 0;">(326)</span>
<span style="left:2306.16px;top:917.10px;font:700 16px/16px 'Liberation Serif',serif;color:#ffffff;transform:scaleX(1.2400);transform-origin:0 0;">(3,259)</span>
<span style="left:2426.16px;top:917.10px;font:700 16px/16px 'Liberation Serif',serif;color:#ffffff;transform:scaleX(1.2400);transform-origin:0 0;">(3,212)</span>
<span style="left:2561.04px;top:917.10px;font:700 16px/16px 'Liberation Serif',serif;color:#ffffff;transform:scaleX(1.2400);transform-origin:0 0;">(699)</span>
<span style="left:2681.04px;top:917.10px;font:700 16px/16px 'Liberation Serif',serif;color:#ffffff;transform:scaleX(1.2400);transform-origin:0 0;">(183)</span>
<span style="left:2792.75px;top:917.10px;font:700 16px/16px 'Liberation Serif',serif;color:#ffffff;transform:scaleX(1.2400);transform-origin:0 0;">1,691</span>
<div style="left:122.0px;top:1075.0px;width:2738.0px;height:20.5px;background:#4aafe4;"></div>
<span style="left:134.33px;top:1077.86px;font:700 16px/16px 'Liberation Sans',sans-serif;color:#ffffff;transform:scaleX(1.0905);transform-origin:0 0;">Total Operating Activities</span>
<span style="left:866.16px;top:1078.00px;font:700 16px/16px 'Liberation Serif',serif;color:#ffffff;transform:scaleX(1.2400);transform-origin:0 0;">(4,678)</span>
<span style="left:986.16px;top:1078.00px;font:700 16px/16px 'Liberation Serif',serif;color:#ffffff;transform:scaleX(1.2400);transform-origin:0 0;">(6,905)</span>
<span style="left:1106.16px;top:1078.00px;font:700 16px/16px 'Liberation Serif',serif;color:#ffffff;transform:scaleX(1.2400);transform-origin:0 0;">(6,514)</span>
<span style="left:1226.16px;top:1078.00px;font:700 16px/16px 'Liberation Serif',serif;color:#ffffff;transform:scaleX(1.2400);transform-origin:0 0;">(4,821)</span>
<span style="left:1346.16px;top:1078.00px;font:700 16px/16px 'Liberation Serif',serif;color:#ffffff;transform:scaleX(1.2400);transform-origin:0 0;">(3,334)</span>
<span style="left:1466.16px;top:1078.00px;font:700 16px/16px 'Liberation Serif',serif;color:#ffffff;transform:scaleX(1.2400);transform-origin:0 0;">(1,916)</span>
<span style="left:1586.16px;top:1078.00px;font:700 16px/16px 'Liberation Serif',serif;color:#ffffff;transform:scaleX(1.2400);transform-origin:0 0;">(1,540)</span>
<span style="left:1706.16px;top:1078.00px;font:700 16px/16px 'Liberation Serif',serif;color:#ffffff;transform:scaleX(1.2400);transform-origin:0 0;">(1,285)</span>
<span style="left:1856.96px;top:1078.00px;font:700 16px/16px 'Liberation Serif',serif;color:#ffffff;transform:scaleX(1.2400);transform-origin:0 0;">74</span>
<span style="left:1952.45px;top:1078.00px;font:700 16px/16px 'Liberation Serif',serif;color:#ffffff;transform:scaleX(1.2400);transform-origin:0 0;">1,319</span>
<span style="left:2072.45px;top:1078.00px;font:700 16px/16px 'Liberation Serif',serif;color:#ffffff;transform:scaleX(1.2400);transform-origin:0 0;">1,079</span>
<span style="left:2192.75px;top:1078.00px;font:700 16px/16px 'Liberation Serif',serif;color:#ffffff;transform:scaleX(1.2400);transform-origin:0 0;">1,341</span>
<span style="left:2327.33px;top:1078.00px;font:700 16px/16px 'Liberation Serif',serif;color:#ffffff;transform:scaleX(1.2400);transform-origin:0 0;">510</span>
<span style="left:2447.33px;top:1078.00px;font:700 16px/16px 'Liberation Serif',serif;color:#ffffff;transform:scaleX(1.2400);transform-origin:0 0;">568</span>
<span style="left:2552.55px;top:1078.00px;font:700 16px/16px 'Liberation Serif',serif;color:#ffffff;transform:scaleX(1.2400);transform-origin:0 0;">3,092</span>
<span style="left:2672.45px;top:1078.00px;font:700 16px/16px 'Liberation Serif',serif;color:#ffffff;transform:scaleX(1.2400);transform-origin:0 0;">3,619</span>
<span style="left:2792.55px;top:1078.00px;font:700 16px/16px 'Liberation Serif',serif;color:#ffffff;transform:scaleX(1.2400);transform-origin:0 0;">5,502</span>
<div style="left:122.0px;top:1164.0px;width:2738.0px;height:21.0px;background:#4aafe4;"></div>
<span style="left:134.33px;top:1167.06px;font:700 16px/16px 'Liberation Sans',sans-serif;color:#ffffff;transform:scaleX(1.0753);transform-origin:0 0;">Total Cash From (For) Investing Activities</span>
<span style="left:866.16px;top:1167.20px;font:700 16px/16px 'Liberation Serif',serif;color:#ffffff;transform:scaleX(1.2400);transform-origin:0 0;">(6,500)</span>
<span style="left:986.16px;top:1167.20px;font:700 16px/16px 'Liberation Serif',serif;color:#ffffff;transform:scaleX(1.2400);transform-origin:0 0;">(8,000)</span>
<span style="left:1106.16px;top:1167.20px;font:700 16px/16px 'Liberation Serif',serif;color:#ffffff;transform:scaleX(1.2400);transform-origin:0 0;">(2,500)</span>
<span style="left:1226.16px;top:1167.20px;font:700 16px/16px 'Liberation Serif',serif;color:#ffffff;transform:scaleX(1.2400);transform-origin:0 0;">(1,500)</span>
<span style="left:1361.04px;top:1167.20px;font:700 16px/16px 'Liberation Serif',serif;color:#ffffff;transform:scaleX(1.2400);transform-origin:0 0;">(300)</span>
<span style="left:1481.04px;top:1167.20px;font:700 16px/16px 'Liberation Serif',serif;color:#ffffff;transform:scaleX(1.2400);transform-origin:0 0;">(500)</span>
<span style="left:1630.10px;top:1166.90px;font:700 16px/16px 'Liberation Serif',serif;color:#ffffff;transform:scaleX(1.2500);transform-origin:0 0;">-</span>
<span style="left:1750.10px;top:1166.90px;font:700 16px/16px 'Liberation Serif',serif;color:#ffffff;transform:scaleX(1.2500);transform-origin:0 0;">-</span>
<span style="left:1870.10px;top:1166.90px;font:700 16px/16px 'Liberation Serif',serif;color:#ffffff;transform:scaleX(1.2500);transform-origin:0 0;">-</span>
<span style="left:1990.10px;top:1166.90px;font:700 16px/16px 'Liberation Serif',serif;color:#ffffff;transform:scaleX(1.2500);transform-origin:0 0;">-</span>
<span style="left:2110.10px;top:1166.90px;font:700 16px/16px 'Liberation Serif',serif;color:#ffffff;transform:scaleX(1.2500);transform-origin:0 0;">-</span>
<span style="left:2230.10px;top:1166.90px;font:700 16px/16px 'Liberation Serif',serif;color:#ffffff;transform:scaleX(1.2500);transform-origin:0 0;">-</span>
<span style="left:2350.10px;top:1166.90px;font:700 16px/16px 'Liberation Serif',serif;color:#ffffff;transform:scaleX(1.2500);transform-origin:0 0;">-</span>
<span style="left:2470.10px;top:1166.90px;font:700 16px/16px 'Liberation Serif',serif;color:#ffffff;transform:scaleX(1.2500);transform-origin:0 0;">-</span>
<span style="left:2590.10px;top:1166.90px;font:700 16px/16px 'Liberation Serif',serif;color:#ffffff;transform:scaleX(1.2500);transform-origin:0 0;">-</span>
<span style="left:2710.10px;top:1166.90px;font:700 16px/16px 'Liberation Serif',serif;color:#ffffff;transform:scaleX(1.2500);transform-origin:0 0;">-</span>
<span style="left:2830.10px;top:1166.90px;font:700 16px/16px 'Liberation Serif',serif;color:#ffffff;transform:scaleX(1.2500);transform-origin:0 0;">-</span>
<div style="left:122.0px;top:1290.0px;width:2738.0px;height:20.5px;background:#4aafe4;"></div>
<span style="left:134.33px;top:1293.16px;font:700 16px/16px 'Liberation Sans',sans-serif;color:#ffffff;transform:scaleX(1.0607);transform-origin:0 0;">Total Cash From (For) Financing Activities</span>
<span style="left:852.61px;top:1293.30px;font:700 16px/16px 'Liberation Serif',serif;color:#ffffff;transform:scaleX(1.2400);transform-origin:0 0;">900,000</span>
<span style="left:1030.10px;top:1293.00px;font:700 16px/16px 'Liberation Serif',serif;color:#ffffff;transform:scaleX(1.2500);transform-origin:0 0;">-</span>
<span style="left:1102.53px;top:1293.30px;font:700 16px/16px 'Liberation Serif',serif;color:#ffffff;transform:scaleX(1.2400);transform-origin:0 0;">98,333</span>
<span style="left:1226.16px;top:1293.30px;font:700 16px/16px 'Liberation Serif',serif;color:#ffffff;transform:scaleX(1.2400);transform-origin:0 0;">(1,667)</span>
<span style="left:1346.16px;top:1293.30px;font:700 16px/16px 'Liberation Serif',serif;color:#ffffff;transform:scaleX(1.2400);transform-origin:0 0;">(1,667)</span>
<span style="left:1466.16px;top:1293.30px;font:700 16px/16px 'Liberation Serif',serif;color:#ffffff;transform:scaleX(1.2400);transform-origin:0 0;">(1,667)</span>
<span style="left:1586.16px;top:1293.30px;font:700 16px/16px 'Liberation Serif',serif;color:#ffffff;transform:scaleX(1.2400);transform-origin:0 0;">(1,667)</span>
<span style="left:1706.16px;top:1293.30px;font:700 16px/16px 'Liberation Serif',serif;color:#ffffff;transform:scaleX(1.2400);transform-origin:0 0;">(1,667)</span>
<span style="left:1826.16px;top:1293.30px;font:700 16px/16px 'Liberation Serif',serif;color:#ffffff;transform:scaleX(1.2400);transform-origin:0 0;">(1,667)</span>
<span style="left:1946.16px;top:1293.30px;font:700 16px/16px 'Liberation Serif',serif;color:#ffffff;transform:scaleX(1.2400);transform-origin:0 0;">(1,667)</span>
<span style="left:2066.16px;top:1293.30px;font:700 16px/16px 'Liberation Serif',serif;color:#ffffff;transform:scaleX(1.2400);transform-origin:0 0;">(1,667)</span>
<span style="left:2186.16px;top:1293.30px;font:700 16px/16px 'Liberation Serif',serif;color:#ffffff;transform:scaleX(1.2400);transform-origin:0 0;">(1,667)</span>
<span style="left:2306.16px;top:1293.30px;font:700 16px/16px 'Liberation Serif',serif;color:#ffffff;transform:scaleX(1.2400);transform-origin:0 0;">(3,770)</span>
<span style="left:2426.16px;top:1293.30px;font:700 16px/16px 'Liberation Serif',serif;color:#ffffff;transform:scaleX(1.2400);transform-origin:0 0;">(3,780)</span>
<span style="left:2546.16px;top:1293.30px;font:700 16px/16px 'Liberation Serif',serif;color:#ffffff;transform:scaleX(1.2400);transform-origin:0 0;">(3,791)</span>
<span style="left:2666.16px;top:1293.30px;font:700 16px/16px 'Liberation Serif',serif;color:#ffffff;transform:scaleX(1.2400);transform-origin:0 0;">(3,801)</span>
<span style="left:2786.16px;top:1293.30px;font:700 16px/16px 'Liberation Serif',serif;color:#ffffff;transform:scaleX(1.2400);transform-origin:0 0;">(3,812)</span>
<div style="left:122.0px;top:1402.5px;width:2738.0px;height:20.0px;background:#4aafe4;"></div>
<span style="left:134.33px;top:1405.16px;font:700 16px/16px 'Liberation Sans',sans-serif;color:#ffffff;transform:scaleX(1.0463);transform-origin:0 0;">Total Cash and Cash Equivalents End</span>
<span style="left:852.71px;top:1405.30px;font:700 16px/16px 'Liberation Serif',serif;color:#ffffff;transform:scaleX(1.2400);transform-origin:0 0;">888,822</span>
<span style="left:972.42px;top:1405.30px;font:700 16px/16px 'Liberation Serif',serif;color:#ffffff;transform:scaleX(1.2400);transform-origin:0 0;">873,917</span>
<span style="left:1092.42px;top:1405.30px;font:700 16px/16px 'Liberation Serif',serif;color:#ffffff;transform:scaleX(1.2400);transform-origin:0 0;">963,237</span>
<span style="left:1212.61px;top:1405.30px;font:700 16px/16px 'Liberation Serif',serif;color:#ffffff;transform:scaleX(1.2400);transform-origin:0 0;">955,249</span>
<span style="left:1332.61px;top:1405.30px;font:700 16px/16px 'Liberation Serif',serif;color:#ffffff;transform:scaleX(1.2400);transform-origin:0 0;">949,948</span>
<span style="left:1452.52px;top:1405.30px;font:700 16px/16px 'Liberation Serif',serif;color:#ffffff;transform:scaleX(1.2400);transform-origin:0 0;">945,866</span>
<span style="left:1572.61px;top:1405.30px;font:700 16px/16px 'Liberation Serif',serif;color:#ffffff;transform:scaleX(1.2400);transform-origin:0 0;">942,659</span>
<span style="left:1692.42px;top:1405.30px;font:700 16px/16px 'Liberation Serif',serif;color:#ffffff;transform:scaleX(1.2400);transform-origin:0 0;">939,707</span>
<span style="left:1813.41px;top:1405.30px;font:700 16px/16px 'Liberation Serif',serif;color:#ffffff;transform:scaleX(1.2400);transform-origin:0 0;">938,114</span>
<span style="left:1932.52px;top:1405.30px;font:700 16px/16px 'Liberation Serif',serif;color:#ffffff;transform:scaleX(1.2400);transform-origin:0 0;">937,766</span>
<span style="left:2052.61px;top:1405.30px;font:700 16px/16px 'Liberation Serif',serif;color:#ffffff;transform:scaleX(1.2400);transform-origin:0 0;">937,178</span>
<span style="left:2172.61px;top:1405.30px;font:700 16px/16px 'Liberation Serif',serif;color:#ffffff;transform:scaleX(1.2400);transform-origin:0 0;">936,853</span>
<span style="left:2292.61px;top:1405.30px;font:700 16px/16px 'Liberation Serif',serif;color:#ffffff;transform:scaleX(1.2400);transform-origin:0 0;">933,593</span>
<span style="left:2412.91px;top:1405.30px;font:700 16px/16px 'Liberation Serif',serif;color:#ffffff;transform:scaleX(1.2400);transform-origin:0 0;">930,381</span>
<span style="left:2532.71px;top:1405.30px;font:700 16px/16px 'Liberation Serif',serif;color:#ffffff;transform:scaleX(1.2400);transform-origin:0 0;">929,682</span>
<span style="left:2652.61px;top:1405.30px;font:700 16px/16px 'Liberation Serif',serif;color:#ffffff;transform:scaleX(1.2400);transform-origin:0 0;">929,500</span>
<span style="left:2772.61px;top:1405.30px;font:700 16px/16px 'Liberation Serif',serif;color:#ffffff;transform:scaleX(1.2400);transform-origin:0 0;">931,190</span>
<div style="left:135.0px;top:1638.0px;width:2725.0px;height:20.5px;background:#4aafe4;"></div>
<span style="left:145.36px;top:1641.46px;font:700 16px/16px 'Liberation Sans',sans-serif;color:#ffffff;transform:scaleX(1.0929);transform-origin:0 0;">Net Increase/(Decrease) in Cash Held</span>
<span style="left:852.71px;top:1641.60px;font:700 16px/16px 'Liberation Serif',serif;color:#ffffff;transform:scaleX(1.2400);transform-origin:0 0;">888,822</span>
<span style="left:976.24px;top:1641.60px;font:700 16px/16px 'Liberation Serif',serif;color:#ffffff;transform:scaleX(1.2400);transform-origin:0 0;">(14,905)</span>
<span style="left:1102.53px;top:1641.60px;font:700 16px/16px 'Liberation Serif',serif;color:#ffffff;transform:scaleX(1.2400);transform-origin:0 0;">89,319</span>
<span style="left:1226.16px;top:1641.60px;font:700 16px/16px 'Liberation Serif',serif;color:#ffffff;transform:scaleX(1.2400);transform-origin:0 0;">(7,988)</span>
<span style="left:1346.16px;top:1641.60px;font:700 16px/16px 'Liberation Serif',serif;color:#ffffff;transform:scaleX(1.2400);transform-origin:0 0;">(5,301)</span>
<span style="left:1466.16px;top:1641.60px;font:700 16px/16px 'Liberation Serif',serif;color:#ffffff;transform:scaleX(1.2400);transform-origin:0 0;">(4,083)</span>
<span style="left:1586.16px;top:1641.60px;font:700 16px/16px 'Liberation Serif',serif;color:#ffffff;transform:scaleX(1.2400);transform-origin:0 0;">(3,207)</span>
<span style="left:1706.16px;top:1641.60px;font:700 16px/16px 'Liberation Serif',serif;color:#ffffff;transform:scaleX(1.2400);transform-origin:0 0;">(2,952)</span>
<span style="left:1826.16px;top:1641.60px;font:700 16px/16px 'Liberation Serif',serif;color:#ffffff;transform:scaleX(1.2400);transform-origin:0 0;">(1,592)</span>
<span style="left:1961.04px;top:1641.60px;font:700 16px/16px 'Liberation Serif',serif;color:#ffffff;transform:scaleX(1.2400);transform-origin:0 0;">(348)</span>
<span style="left:2081.04px;top:1641.60px;font:700 16px/16px 'Liberation Serif',serif;color:#ffffff;transform:scaleX(1.2400);transform-origin:0 0;">(588)</span>
<span style="left:2201.04px;top:1641.60px;font:700 16px/16px 'Liberation Serif',serif;color:#ffffff;transform:scaleX(1.2400);transform-origin:0 0;">(326)</span>
<span style="left:2306.16px;top:1641.60px;font:700 16px/16px 'Liberation Serif',serif;color:#ffffff;transform:scaleX(1.2400);transform-origin:0 0;">(3,259)</span>
<span style="left:2426.16px;top:1641.60px;font:700 16px/16px 'Liberation Serif',serif;color:#ffffff;transform:scaleX(1.2400);transform-origin:0 0;">(3,212)</span>
<span style="left:2561.04px;top:1641.60px;font:700 16px/16px 'Liberation Serif',serif;color:#ffffff;transform:scaleX(1.2400);transform-origin:0 0;">(699)</span>
<span style="left:2681.04px;top:1641.60px;font:700 16px/16px 'Liberation Serif',serif;color:#ffffff;transform:scaleX(1.2400);transform-origin:0 0;">(183)</span>
<span style="left:2792.75px;top:1641.60px;font:700 16px/16px 'Liberation Serif',serif;color:#ffffff;transform:scaleX(1.2400);transform-origin:0 0;">1,691</span>
<span style="left:113.61px;top:302.90px;font:700 28px/28px 'Liberation Sans',sans-serif;color:#1f1f24;transform:scaleX(1.0633);transform-origin:0 0;">Cash Flow Statement</span>
<span style="left:113.18px;top:336.68px;font:700 24px/24px 'Liberation Sans',sans-serif;color:#0a0a0a;transform:scaleX(1.0316);transform-origin:0 0;">ABC Company Inc.</span>
<span style="left:112.31px;top:363.61px;font:700 17px/17px 'Liberation Sans',sans-serif;color:#2a66d9;transform:scaleX(1.0201);transform-origin:0 0;">Go to Table of Contents</span>
<div style="left:113.0px;top:379.3px;width:194.0px;height:1.5px;background:#2a66d9;"></div>
<span style="left:111.91px;top:419.03px;font:700 16.5px/16.5px 'Liberation Sans',sans-serif;color:#111;transform:scaleX(1.0204);transform-origin:0 0;">Fiscal year</span>
<span style="left:111.86px;top:439.03px;font:700 16.5px/16.5px 'Liberation Sans',sans-serif;color:#111;transform:scaleX(1.0600);transform-origin:0 0;">Month</span>
<span style="left:883.93px;top:419.23px;font:700 16.5px/16.5px 'Liberation Sans',sans-serif;color:#111;transform:scaleX(1.0950);transform-origin:0 0;">2026</span>
<span style="left:868.76px;top:438.83px;font:700 16.5px/16.5px 'Liberation Sans',sans-serif;color:#111;transform:scaleX(1.0600);transform-origin:0 0;">Jan-26</span>
<span style="left:1003.93px;top:419.23px;font:700 16.5px/16.5px 'Liberation Sans',sans-serif;color:#111;transform:scaleX(1.0950);transform-origin:0 0;">2026</span>
<span style="left:987.79px;top:438.83px;font:700 16.5px/16.5px 'Liberation Sans',sans-serif;color:#111;transform:scaleX(1.0600);transform-origin:0 0;">Feb-26</span>
<span style="left:1123.93px;top:419.23px;font:700 16.5px/16.5px 'Liberation Sans',sans-serif;color:#111;transform:scaleX(1.0950);transform-origin:0 0;">2026</span>
<span style="left:1107.71px;top:438.83px;font:700 16.5px/16.5px 'Liberation Sans',sans-serif;color:#111;transform:scaleX(1.0600);transform-origin:0 0;">Mar-26</span>
<span style="left:1243.93px;top:419.23px;font:700 16.5px/16.5px 'Liberation Sans',sans-serif;color:#111;transform:scaleX(1.0950);transform-origin:0 0;">2026</span>
<span style="left:1228.76px;top:438.83px;font:700 16.5px/16.5px 'Liberation Sans',sans-serif;color:#111;transform:scaleX(1.0600);transform-origin:0 0;">Apr-26</span>
<span style="left:1363.93px;top:419.23px;font:700 16.5px/16.5px 'Liberation Sans',sans-serif;color:#111;transform:scaleX(1.0950);transform-origin:0 0;">2026</span>
<span style="left:1344.82px;top:438.83px;font:700 16.5px/16.5px 'Liberation Sans',sans-serif;color:#111;transform:scaleX(1.0600);transform-origin:0 0;">May-26</span>
<span style="left:1483.93px;top:419.23px;font:700 16.5px/16.5px 'Liberation Sans',sans-serif;color:#111;transform:scaleX(1.0950);transform-origin:0 0;">2026</span>
<span style="left:1467.79px;top:438.83px;font:700 16.5px/16.5px 'Liberation Sans',sans-serif;color:#111;transform:scaleX(1.0600);transform-origin:0 0;">Jun-26</span>
<span style="left:1603.93px;top:419.23px;font:700 16.5px/16.5px 'Liberation Sans',sans-serif;color:#111;transform:scaleX(1.0950);transform-origin:0 0;">2026</span>
<span style="left:1593.57px;top:438.83px;font:700 16.5px/16.5px 'Liberation Sans',sans-serif;color:#111;transform:scaleX(1.0600);transform-origin:0 0;">Jul-26</span>
<span style="left:1723.93px;top:419.23px;font:700 16.5px/16.5px 'Liberation Sans',sans-serif;color:#111;transform:scaleX(1.0950);transform-origin:0 0;">2026</span>
<span style="left:1704.82px;top:438.83px;font:700 16.5px/16.5px 'Liberation Sans',sans-serif;color:#111;transform:scaleX(1.0600);transform-origin:0 0;">Aug-26</span>
<span style="left:1843.93px;top:419.23px;font:700 16.5px/16.5px 'Liberation Sans',sans-serif;color:#111;transform:scaleX(1.0950);transform-origin:0 0;">2026</span>
<span style="left:1826.74px;top:438.83px;font:700 16.5px/16.5px 'Liberation Sans',sans-serif;color:#111;transform:scaleX(1.0600);transform-origin:0 0;">Sep-26</span>
<span style="left:1963.93px;top:419.23px;font:700 16.5px/16.5px 'Liberation Sans',sans-serif;color:#111;transform:scaleX(1.0950);transform-origin:0 0;">2026</span>
<span style="left:1949.72px;top:438.83px;font:700 16.5px/16.5px 'Liberation Sans',sans-serif;color:#111;transform:scaleX(1.0600);transform-origin:0 0;">Oct-26</span>
<span style="left:2083.93px;top:419.23px;font:700 16.5px/16.5px 'Liberation Sans',sans-serif;color:#111;transform:scaleX(1.0950);transform-origin:0 0;">2026</span>
<span style="left:2065.78px;top:438.83px;font:700 16.5px/16.5px 'Liberation Sans',sans-serif;color:#111;transform:scaleX(1.0600);transform-origin:0 0;">Nov-26</span>
<span style="left:2203.93px;top:419.23px;font:700 16.5px/16.5px 'Liberation Sans',sans-serif;color:#111;transform:scaleX(1.0950);transform-origin:0 0;">2026</span>
<span style="left:2186.74px;top:438.83px;font:700 16.5px/16.5px 'Liberation Sans',sans-serif;color:#111;transform:scaleX(1.0600);transform-origin:0 0;">Dec-26</span>
<span style="left:2324.02px;top:419.23px;font:700 16.5px/16.5px 'Liberation Sans',sans-serif;color:#111;transform:scaleX(1.0950);transform-origin:0 0;">2027</span>
<span style="left:2308.84px;top:438.83px;font:700 16.5px/16.5px 'Liberation Sans',sans-serif;color:#111;transform:scaleX(1.0600);transform-origin:0 0;">Jan-27</span>
<span style="left:2444.02px;top:419.23px;font:700 16.5px/16.5px 'Liberation Sans',sans-serif;color:#111;transform:scaleX(1.0950);transform-origin:0 0;">2027</span>
<span style="left:2427.88px;top:438.83px;font:700 16.5px/16.5px 'Liberation Sans',sans-serif;color:#111;transform:scaleX(1.0600);transform-origin:0 0;">Feb-27</span>
<span style="left:2564.02px;top:419.23px;font:700 16.5px/16.5px 'Liberation Sans',sans-serif;color:#111;transform:scaleX(1.0950);transform-origin:0 0;">2027</span>
<span style="left:2547.79px;top:438.83px;font:700 16.5px/16.5px 'Liberation Sans',sans-serif;color:#111;transform:scaleX(1.0600);transform-origin:0 0;">Mar-27</span>
<span style="left:2684.02px;top:419.23px;font:700 16.5px/16.5px 'Liberation Sans',sans-serif;color:#111;transform:scaleX(1.0950);transform-origin:0 0;">2027</span>
<span style="left:2668.84px;top:438.83px;font:700 16.5px/16.5px 'Liberation Sans',sans-serif;color:#111;transform:scaleX(1.0600);transform-origin:0 0;">Apr-27</span>
<span style="left:2804.02px;top:419.23px;font:700 16.5px/16.5px 'Liberation Sans',sans-serif;color:#111;transform:scaleX(1.0950);transform-origin:0 0;">2027</span>
<span style="left:2784.91px;top:438.83px;font:700 16.5px/16.5px 'Liberation Sans',sans-serif;color:#111;transform:scaleX(1.0600);transform-origin:0 0;">May-27</span>
<span style="left:113.55px;top:479.32px;font:700 21px/21px 'Liberation Sans',sans-serif;color:#1c1c1c;transform:scaleX(1.0086);transform-origin:0 0;">Cash Flow Statement, $</span>
<span style="left:125.75px;top:518.21px;font:700 17px/17px 'Liberation Sans',sans-serif;color:#1c1c1c;transform:scaleX(1.0984);transform-origin:0 0;">Cash Flow from Operating Activities</span>
<span style="left:125.75px;top:666.21px;font:700 17px/17px 'Liberation Sans',sans-serif;color:#1c1c1c;transform:scaleX(1.1060);transform-origin:0 0;">Cash Flow from Investing Activities</span>
<span style="left:125.76px;top:754.71px;font:700 17px/17px 'Liberation Sans',sans-serif;color:#1c1c1c;transform:scaleX(1.0915);transform-origin:0 0;">Cash Flow from Financing Activities</span>
<span style="left:113.54px;top:970.82px;font:700 21px/21px 'Liberation Sans',sans-serif;color:#1c1c1c;transform:scaleX(1.0235);transform-origin:0 0;">Cash Flow Statement (indirect method), $</span>
<span style="left:125.75px;top:1010.31px;font:700 17px/17px 'Liberation Sans',sans-serif;color:#1c1c1c;transform:scaleX(1.1033);transform-origin:0 0;">Operating Activities</span>
<span style="left:125.26px;top:1121.91px;font:700 17px/17px 'Liberation Sans',sans-serif;color:#1c1c1c;transform:scaleX(1.1240);transform-origin:0 0;">Investing Activities</span>
<span style="left:125.29px;top:1211.11px;font:700 17px/17px 'Liberation Sans',sans-serif;color:#1c1c1c;transform:scaleX(1.0962);transform-origin:0 0;">Financing Activities</span>
<span style="left:125.75px;top:1337.31px;font:700 17px/17px 'Liberation Sans',sans-serif;color:#1c1c1c;transform:scaleX(1.1085);transform-origin:0 0;">Cash Movement</span>
<span style="left:126.31px;top:1463.47px;font:700 20px/20px 'Liberation Sans',sans-serif;color:#1c1c1c;transform:scaleX(1.0695);transform-origin:0 0;">Interest on Cash Breakdown</span>
<span style="left:138.75px;top:548.19px;font:400 16.2px/16.2px 'Liberation Sans',sans-serif;color:#222222;transform:scaleX(0.9221);transform-origin:0 0;">Cash Receipts</span>
<span style="left:883.77px;top:551.23px;font:400 12.6px/12.6px 'Liberation Sans',sans-serif;color:#222222;transform:scaleX(1.1550);transform-origin:0 0;">1,049</span>
<span style="left:1003.85px;top:551.23px;font:400 12.6px/12.6px 'Liberation Sans',sans-serif;color:#222222;transform:scaleX(1.1550);transform-origin:0 0;">2,872</span>
<span style="left:1123.85px;top:551.23px;font:400 12.6px/12.6px 'Liberation Sans',sans-serif;color:#222222;transform:scaleX(1.1550);transform-origin:0 0;">5,327</span>
<span style="left:1243.70px;top:551.23px;font:400 12.6px/12.6px 'Liberation Sans',sans-serif;color:#222222;transform:scaleX(1.1550);transform-origin:0 0;">7,018</span>
<span style="left:1363.48px;top:551.23px;font:400 12.6px/12.6px 'Liberation Sans',sans-serif;color:#222222;transform:scaleX(1.1550);transform-origin:0 0;">9,314</span>
<span style="left:1476.71px;top:551.23px;font:400 12.6px/12.6px 'Liberation Sans',sans-serif;color:#222222;transform:scaleX(1.1550);transform-origin:0 0;">11,019</span>
<span style="left:1595.55px;top:551.23px;font:400 12.6px/12.6px 'Liberation Sans',sans-serif;color:#222222;transform:scaleX(1.1550);transform-origin:0 0;">13,446</span>
<span style="left:1715.55px;top:551.23px;font:400 12.6px/12.6px 'Liberation Sans',sans-serif;color:#222222;transform:scaleX(1.1550);transform-origin:0 0;">15,283</span>
<span style="left:1835.62px;top:551.23px;font:400 12.6px/12.6px 'Liberation Sans',sans-serif;color:#222222;transform:scaleX(1.1550);transform-origin:0 0;">17,021</span>
<span style="left:1955.55px;top:551.23px;font:400 12.6px/12.6px 'Liberation Sans',sans-serif;color:#222222;transform:scaleX(1.1550);transform-origin:0 0;">18,595</span>
<span style="left:2075.55px;top:551.23px;font:400 12.6px/12.6px 'Liberation Sans',sans-serif;color:#222222;transform:scaleX(1.1550);transform-origin:0 0;">18,005</span>
<span style="left:2195.55px;top:551.23px;font:400 12.6px/12.6px 'Liberation Sans',sans-serif;color:#222222;transform:scaleX(1.1550);transform-origin:0 0;">18,595</span>
<span style="left:2315.55px;top:551.23px;font:400 12.6px/12.6px 'Liberation Sans',sans-serif;color:#222222;transform:scaleX(1.1550);transform-origin:0 0;">20,403</span>
<span style="left:2435.62px;top:551.23px;font:400 12.6px/12.6px 'Liberation Sans',sans-serif;color:#222222;transform:scaleX(1.1550);transform-origin:0 0;">22,351</span>
<span style="left:2555.70px;top:551.23px;font:400 12.6px/12.6px 'Liberation Sans',sans-serif;color:#222222;transform:scaleX(1.1550);transform-origin:0 0;">27,372</span>
<span style="left:2675.55px;top:551.23px;font:400 12.6px/12.6px 'Liberation Sans',sans-serif;color:#222222;transform:scaleX(1.1550);transform-origin:0 0;">28,053</span>
<span style="left:2795.62px;top:551.23px;font:400 12.6px/12.6px 'Liberation Sans',sans-serif;color:#222222;transform:scaleX(1.1550);transform-origin:0 0;">31,459</span>
<span style="left:138.74px;top:567.89px;font:400 16.2px/16.2px 'Liberation Sans',sans-serif;color:#222222;transform:scaleX(0.9372);transform-origin:0 0;">Cash Payments</span>
<span style="left:879.01px;top:570.93px;font:400 12.6px/12.6px 'Liberation Sans',sans-serif;color:#222222;transform:scaleX(1.1550);transform-origin:0 0;">(4,727)</span>
<span style="left:999.01px;top:570.93px;font:400 12.6px/12.6px 'Liberation Sans',sans-serif;color:#222222;transform:scaleX(1.1550);transform-origin:0 0;">(8,777)</span>
<span style="left:1110.94px;top:570.93px;font:400 12.6px/12.6px 'Liberation Sans',sans-serif;color:#222222;transform:scaleX(1.1550);transform-origin:0 0;">(10,174)</span>
<span style="left:1230.94px;top:570.93px;font:400 12.6px/12.6px 'Liberation Sans',sans-serif;color:#222222;transform:scaleX(1.1550);transform-origin:0 0;">(10,184)</span>
<span style="left:1351.95px;top:570.93px;font:400 12.6px/12.6px 'Liberation Sans',sans-serif;color:#222222;transform:scaleX(1.1550);transform-origin:0 0;">(11,004)</span>
<span style="left:1471.95px;top:570.93px;font:400 12.6px/12.6px 'Liberation Sans',sans-serif;color:#222222;transform:scaleX(1.1550);transform-origin:0 0;">(11,302)</span>
<span style="left:1590.94px;top:570.93px;font:400 12.6px/12.6px 'Liberation Sans',sans-serif;color:#222222;transform:scaleX(1.1550);transform-origin:0 0;">(13,364)</span>
<span style="left:1710.94px;top:570.93px;font:400 12.6px/12.6px 'Liberation Sans',sans-serif;color:#222222;transform:scaleX(1.1550);transform-origin:0 0;">(14,957)</span>
<span style="left:1830.94px;top:570.93px;font:400 12.6px/12.6px 'Liberation Sans',sans-serif;color:#222222;transform:scaleX(1.1550);transform-origin:0 0;">(15,347)</span>
<span style="left:1950.94px;top:570.93px;font:400 12.6px/12.6px 'Liberation Sans',sans-serif;color:#222222;transform:scaleX(1.1550);transform-origin:0 0;">(15,688)</span>
<span style="left:2070.94px;top:570.93px;font:400 12.6px/12.6px 'Liberation Sans',sans-serif;color:#222222;transform:scaleX(1.1550);transform-origin:0 0;">(15,348)</span>
<span style="left:2190.94px;top:570.93px;font:400 12.6px/12.6px 'Liberation Sans',sans-serif;color:#222222;transform:scaleX(1.1550);transform-origin:0 0;">(15,688)</span>
<span style="left:2310.94px;top:570.93px;font:400 12.6px/12.6px 'Liberation Sans',sans-serif;color:#222222;transform:scaleX(1.1550);transform-origin:0 0;">(18,069)</span>
<span style="left:2430.94px;top:570.93px;font:400 12.6px/12.6px 'Liberation Sans',sans-serif;color:#222222;transform:scaleX(1.1550);transform-origin:0 0;">(19,526)</span>
<span style="left:2550.94px;top:570.93px;font:400 12.6px/12.6px 'Liberation Sans',sans-serif;color:#222222;transform:scaleX(1.1550);transform-origin:0 0;">(21,589)</span>
<span style="left:2670.94px;top:570.93px;font:400 12.6px/12.6px 'Liberation Sans',sans-serif;color:#222222;transform:scaleX(1.1550);transform-origin:0 0;">(21,310)</span>
<span style="left:2790.94px;top:570.93px;font:400 12.6px/12.6px 'Liberation Sans',sans-serif;color:#222222;transform:scaleX(1.1550);transform-origin:0 0;">(22,399)</span>
<span style="left:138.08px;top:587.79px;font:400 16.2px/16.2px 'Liberation Sans',sans-serif;color:#222222;transform:scaleX(0.9741);transform-origin:0 0;">Interest Expense</span>
<span style="left:879.01px;top:590.83px;font:400 12.6px/12.6px 'Liberation Sans',sans-serif;color:#222222;transform:scaleX(1.1550);transform-origin:0 0;">(1,000)</span>
<span style="left:999.01px;top:590.83px;font:400 12.6px/12.6px 'Liberation Sans',sans-serif;color:#222222;transform:scaleX(1.1550);transform-origin:0 0;">(1,000)</span>
<span style="left:1119.01px;top:590.83px;font:400 12.6px/12.6px 'Liberation Sans',sans-serif;color:#222222;transform:scaleX(1.1550);transform-origin:0 0;">(1,667)</span>
<span style="left:1239.01px;top:590.83px;font:400 12.6px/12.6px 'Liberation Sans',sans-serif;color:#222222;transform:scaleX(1.1550);transform-origin:0 0;">(1,656)</span>
<span style="left:1359.01px;top:590.83px;font:400 12.6px/12.6px 'Liberation Sans',sans-serif;color:#222222;transform:scaleX(1.1550);transform-origin:0 0;">(1,644)</span>
<span style="left:1479.01px;top:590.83px;font:400 12.6px/12.6px 'Liberation Sans',sans-serif;color:#222222;transform:scaleX(1.1550);transform-origin:0 0;">(1,633)</span>
<span style="left:1599.01px;top:590.83px;font:400 12.6px/12.6px 'Liberation Sans',sans-serif;color:#222222;transform:scaleX(1.1550);transform-origin:0 0;">(1,622)</span>
<span style="left:1720.10px;top:590.83px;font:400 12.6px/12.6px 'Liberation Sans',sans-serif;color:#222222;transform:scaleX(1.1550);transform-origin:0 0;">(1,611)</span>
<span style="left:1839.01px;top:590.83px;font:400 12.6px/12.6px 'Liberation Sans',sans-serif;color:#222222;transform:scaleX(1.1550);transform-origin:0 0;">(1,600)</span>
<span style="left:1959.01px;top:590.83px;font:400 12.6px/12.6px 'Liberation Sans',sans-serif;color:#222222;transform:scaleX(1.1550);transform-origin:0 0;">(1,589)</span>
<span style="left:2079.01px;top:590.83px;font:400 12.6px/12.6px 'Liberation Sans',sans-serif;color:#222222;transform:scaleX(1.1550);transform-origin:0 0;">(1,578)</span>
<span style="left:2199.01px;top:590.83px;font:400 12.6px/12.6px 'Liberation Sans',sans-serif;color:#222222;transform:scaleX(1.1550);transform-origin:0 0;">(1,567)</span>
<span style="left:2319.01px;top:590.83px;font:400 12.6px/12.6px 'Liberation Sans',sans-serif;color:#222222;transform:scaleX(1.1550);transform-origin:0 0;">(1,556)</span>
<span style="left:2439.01px;top:590.83px;font:400 12.6px/12.6px 'Liberation Sans',sans-serif;color:#222222;transform:scaleX(1.1550);transform-origin:0 0;">(1,534)</span>
<span style="left:2559.01px;top:590.83px;font:400 12.6px/12.6px 'Liberation Sans',sans-serif;color:#222222;transform:scaleX(1.1550);transform-origin:0 0;">(1,512)</span>
<span style="left:2679.01px;top:590.83px;font:400 12.6px/12.6px 'Liberation Sans',sans-serif;color:#222222;transform:scaleX(1.1550);transform-origin:0 0;">(1,491)</span>
<span style="left:2799.01px;top:590.83px;font:400 12.6px/12.6px 'Liberation Sans',sans-serif;color:#222222;transform:scaleX(1.1550);transform-origin:0 0;">(1,469)</span>
<span style="left:138.71px;top:607.69px;font:400 16.2px/16.2px 'Liberation Sans',sans-serif;color:#222222;transform:scaleX(0.9736);transform-origin:0 0;">Corporate Tax Expense</span>
<span style="left:914.60px;top:609.20px;font:400 13px/13px 'Liberation Sans',sans-serif;color:#222222;transform:scaleX(1.3000);transform-origin:0 0;">-</span>
<span style="left:1034.60px;top:609.20px;font:400 13px/13px 'Liberation Sans',sans-serif;color:#222222;transform:scaleX(1.3000);transform-origin:0 0;">-</span>
<span style="left:1154.60px;top:609.20px;font:400 13px/13px 'Liberation Sans',sans-serif;color:#222222;transform:scaleX(1.3000);transform-origin:0 0;">-</span>
<span style="left:1274.60px;top:609.20px;font:400 13px/13px 'Liberation Sans',sans-serif;color:#222222;transform:scaleX(1.3000);transform-origin:0 0;">-</span>
<span style="left:1394.60px;top:609.20px;font:400 13px/13px 'Liberation Sans',sans-serif;color:#222222;transform:scaleX(1.3000);transform-origin:0 0;">-</span>
<span style="left:1514.60px;top:609.20px;font:400 13px/13px 'Liberation Sans',sans-serif;color:#222222;transform:scaleX(1.3000);transform-origin:0 0;">-</span>
<span style="left:1634.60px;top:609.20px;font:400 13px/13px 'Liberation Sans',sans-serif;color:#222222;transform:scaleX(1.3000);transform-origin:0 0;">-</span>
<span style="left:1754.60px;top:609.20px;font:400 13px/13px 'Liberation Sans',sans-serif;color:#222222;transform:scaleX(1.3000);transform-origin:0 0;">-</span>
<span style="left:1874.60px;top:609.20px;font:400 13px/13px 'Liberation Sans',sans-serif;color:#222222;transform:scaleX(1.3000);transform-origin:0 0;">-</span>
<span style="left:1994.60px;top:609.20px;font:400 13px/13px 'Liberation Sans',sans-serif;color:#222222;transform:scaleX(1.3000);transform-origin:0 0;">-</span>
<span style="left:2114.60px;top:609.20px;font:400 13px/13px 'Liberation Sans',sans-serif;color:#222222;transform:scaleX(1.3000);transform-origin:0 0;">-</span>
<span style="left:2234.60px;top:609.20px;font:400 13px/13px 'Liberation Sans',sans-serif;color:#222222;transform:scaleX(1.3000);transform-origin:0 0;">-</span>
<span style="left:2331.16px;top:610.73px;font:400 12.6px/12.6px 'Liberation Sans',sans-serif;color:#222222;transform:scaleX(1.1550);transform-origin:0 0;">(269)</span>
<span style="left:2451.16px;top:610.73px;font:400 12.6px/12.6px 'Liberation Sans',sans-serif;color:#222222;transform:scaleX(1.1550);transform-origin:0 0;">(724)</span>
<span style="left:2559.01px;top:610.73px;font:400 12.6px/12.6px 'Liberation Sans',sans-serif;color:#222222;transform:scaleX(1.1550);transform-origin:0 0;">(1,179)</span>
<span style="left:2679.01px;top:610.73px;font:400 12.6px/12.6px 'Liberation Sans',sans-serif;color:#222222;transform:scaleX(1.1550);transform-origin:0 0;">(1,634)</span>
<span style="left:2799.01px;top:610.73px;font:400 12.6px/12.6px 'Liberation Sans',sans-serif;color:#222222;transform:scaleX(1.1550);transform-origin:0 0;">(2,089)</span>
<span style="left:138.71px;top:691.89px;font:400 16.2px/16.2px 'Liberation Sans',sans-serif;color:#222222;transform:scaleX(0.9756);transform-origin:0 0;">Capital Expenditure</span>
<span style="left:879.01px;top:694.93px;font:400 12.6px/12.6px 'Liberation Sans',sans-serif;color:#222222;transform:scaleX(1.1550);transform-origin:0 0;">(6,500)</span>
<span style="left:999.01px;top:694.93px;font:400 12.6px/12.6px 'Liberation Sans',sans-serif;color:#222222;transform:scaleX(1.1550);transform-origin:0 0;">(8,000)</span>
<span style="left:1119.01px;top:694.93px;font:400 12.6px/12.6px 'Liberation Sans',sans-serif;color:#222222;transform:scaleX(1.1550);transform-origin:0 0;">(2,500)</span>
<span style="left:1239.01px;top:694.93px;font:400 12.6px/12.6px 'Liberation Sans',sans-serif;color:#222222;transform:scaleX(1.1550);transform-origin:0 0;">(1,500)</span>
<span style="left:1371.16px;top:694.93px;font:400 12.6px/12.6px 'Liberation Sans',sans-serif;color:#222222;transform:scaleX(1.1550);transform-origin:0 0;">(300)</span>
<span style="left:1491.16px;top:694.93px;font:400 12.6px/12.6px 'Liberation Sans',sans-serif;color:#222222;transform:scaleX(1.1550);transform-origin:0 0;">(500)</span>
<span style="left:1634.60px;top:693.40px;font:400 13px/13px 'Liberation Sans',sans-serif;color:#222222;transform:scaleX(1.3000);transform-origin:0 0;">-</span>
<span style="left:1754.60px;top:693.40px;font:400 13px/13px 'Liberation Sans',sans-serif;color:#222222;transform:scaleX(1.3000);transform-origin:0 0;">-</span>
<span style="left:1874.60px;top:693.40px;font:400 13px/13px 'Liberation Sans',sans-serif;color:#222222;transform:scaleX(1.3000);transform-origin:0 0;">-</span>
<span style="left:1994.60px;top:693.40px;font:400 13px/13px 'Liberation Sans',sans-serif;color:#222222;transform:scaleX(1.3000);transform-origin:0 0;">-</span>
<span style="left:2114.60px;top:693.40px;font:400 13px/13px 'Liberation Sans',sans-serif;color:#222222;transform:scaleX(1.3000);transform-origin:0 0;">-</span>
<span style="left:2234.60px;top:693.40px;font:400 13px/13px 'Liberation Sans',sans-serif;color:#222222;transform:scaleX(1.3000);transform-origin:0 0;">-</span>
<span style="left:2354.60px;top:693.40px;font:400 13px/13px 'Liberation Sans',sans-serif;color:#222222;transform:scaleX(1.3000);transform-origin:0 0;">-</span>
<span style="left:2474.60px;top:693.40px;font:400 13px/13px 'Liberation Sans',sans-serif;color:#222222;transform:scaleX(1.3000);transform-origin:0 0;">-</span>
<span style="left:2594.60px;top:693.40px;font:400 13px/13px 'Liberation Sans',sans-serif;color:#222222;transform:scaleX(1.3000);transform-origin:0 0;">-</span>
<span style="left:2714.60px;top:693.40px;font:400 13px/13px 'Liberation Sans',sans-serif;color:#222222;transform:scaleX(1.3000);transform-origin:0 0;">-</span>
<span style="left:2834.60px;top:693.40px;font:400 13px/13px 'Liberation Sans',sans-serif;color:#222222;transform:scaleX(1.3000);transform-origin:0 0;">-</span>
<span style="left:138.23px;top:779.99px;font:400 16.2px/16.2px 'Liberation Sans',sans-serif;color:#222222;transform:scaleX(0.9792);transform-origin:0 0;">Debts Drawdowns</span>
<span style="left:867.40px;top:783.03px;font:400 12.6px/12.6px 'Liberation Sans',sans-serif;color:#222222;transform:scaleX(1.1550);transform-origin:0 0;">200,000</span>
<span style="left:1034.60px;top:781.50px;font:400 13px/13px 'Liberation Sans',sans-serif;color:#222222;transform:scaleX(1.3000);transform-origin:0 0;">-</span>
<span style="left:1107.40px;top:783.03px;font:400 12.6px/12.6px 'Liberation Sans',sans-serif;color:#222222;transform:scaleX(1.1550);transform-origin:0 0;">100,000</span>
<span style="left:1274.60px;top:781.50px;font:400 13px/13px 'Liberation Sans',sans-serif;color:#222222;transform:scaleX(1.3000);transform-origin:0 0;">-</span>
<span style="left:1394.60px;top:781.50px;font:400 13px/13px 'Liberation Sans',sans-serif;color:#222222;transform:scaleX(1.3000);transform-origin:0 0;">-</span>
<span style="left:1514.60px;top:781.50px;font:400 13px/13px 'Liberation Sans',sans-serif;color:#222222;transform:scaleX(1.3000);transform-origin:0 0;">-</span>
<span style="left:1634.60px;top:781.50px;font:400 13px/13px 'Liberation Sans',sans-serif;color:#222222;transform:scaleX(1.3000);transform-origin:0 0;">-</span>
<span style="left:1754.60px;top:781.50px;font:400 13px/13px 'Liberation Sans',sans-serif;color:#222222;transform:scaleX(1.3000);transform-origin:0 0;">-</span>
<span style="left:1874.60px;top:781.50px;font:400 13px/13px 'Liberation Sans',sans-serif;color:#222222;transform:scaleX(1.3000);transform-origin:0 0;">-</span>
<span style="left:1994.60px;top:781.50px;font:400 13px/13px 'Liberation Sans',sans-serif;color:#222222;transform:scaleX(1.3000);transform-origin:0 0;">-</span>
<span style="left:2114.60px;top:781.50px;font:400 13px/13px 'Liberation Sans',sans-serif;color:#222222;transform:scaleX(1.3000);transform-origin:0 0;">-</span>
<span style="left:2234.60px;top:781.50px;font:400 13px/13px 'Liberation Sans',sans-serif;color:#222222;transform:scaleX(1.3000);transform-origin:0 0;">-</span>
<span style="left:2354.60px;top:781.50px;font:400 13px/13px 'Liberation Sans',sans-serif;color:#222222;transform:scaleX(1.3000);transform-origin:0 0;">-</span>
<span style="left:2474.60px;top:781.50px;font:400 13px/13px 'Liberation Sans',sans-serif;color:#222222;transform:scaleX(1.3000);transform-origin:0 0;">-</span>
<span style="left:2594.60px;top:781.50px;font:400 13px/13px 'Liberation Sans',sans-serif;color:#222222;transform:scaleX(1.3000);transform-origin:0 0;">-</span>
<span style="left:2714.60px;top:781.50px;font:400 13px/13px 'Liberation Sans',sans-serif;color:#222222;transform:scaleX(1.3000);transform-origin:0 0;">-</span>
<span style="left:2834.60px;top:781.50px;font:400 13px/13px 'Liberation Sans',sans-serif;color:#222222;transform:scaleX(1.3000);transform-origin:0 0;">-</span>
<span style="left:138.26px;top:800.09px;font:400 16.2px/16.2px 'Liberation Sans',sans-serif;color:#222222;transform:scaleX(0.9557);transform-origin:0 0;">Debts Repayments</span>
<span style="left:914.60px;top:801.60px;font:400 13px/13px 'Liberation Sans',sans-serif;color:#222222;transform:scaleX(1.3000);transform-origin:0 0;">-</span>
<span style="left:1034.60px;top:801.60px;font:400 13px/13px 'Liberation Sans',sans-serif;color:#222222;transform:scaleX(1.3000);transform-origin:0 0;">-</span>
<span style="left:1119.01px;top:803.13px;font:400 12.6px/12.6px 'Liberation Sans',sans-serif;color:#222222;transform:scaleX(1.1550);transform-origin:0 0;">(1,667)</span>
<span style="left:1239.01px;top:803.13px;font:400 12.6px/12.6px 'Liberation Sans',sans-serif;color:#222222;transform:scaleX(1.1550);transform-origin:0 0;">(1,667)</span>
<span style="left:1359.01px;top:803.13px;font:400 12.6px/12.6px 'Liberation Sans',sans-serif;color:#222222;transform:scaleX(1.1550);transform-origin:0 0;">(1,667)</span>
<span style="left:1479.01px;top:803.13px;font:400 12.6px/12.6px 'Liberation Sans',sans-serif;color:#222222;transform:scaleX(1.1550);transform-origin:0 0;">(1,667)</span>
<span style="left:1599.01px;top:803.13px;font:400 12.6px/12.6px 'Liberation Sans',sans-serif;color:#222222;transform:scaleX(1.1550);transform-origin:0 0;">(1,667)</span>
<span style="left:1719.01px;top:803.13px;font:400 12.6px/12.6px 'Liberation Sans',sans-serif;color:#222222;transform:scaleX(1.1550);transform-origin:0 0;">(1,667)</span>
<span style="left:1839.01px;top:803.13px;font:400 12.6px/12.6px 'Liberation Sans',sans-serif;color:#222222;transform:scaleX(1.1550);transform-origin:0 0;">(1,667)</span>
<span style="left:1959.01px;top:803.13px;font:400 12.6px/12.6px 'Liberation Sans',sans-serif;color:#222222;transform:scaleX(1.1550);transform-origin:0 0;">(1,667)</span>
<span style="left:2079.01px;top:803.13px;font:400 12.6px/12.6px 'Liberation Sans',sans-serif;color:#222222;transform:scaleX(1.1550);transform-origin:0 0;">(1,667)</span>
<span style="left:2199.01px;top:803.13px;font:400 12.6px/12.6px 'Liberation Sans',sans-serif;color:#222222;transform:scaleX(1.1550);transform-origin:0 0;">(1,667)</span>
<span style="left:2319.01px;top:803.13px;font:400 12.6px/12.6px 'Liberation Sans',sans-serif;color:#222222;transform:scaleX(1.1550);transform-origin:0 0;">(3,770)</span>
<span style="left:2439.01px;top:803.13px;font:400 12.6px/12.6px 'Liberation Sans',sans-serif;color:#222222;transform:scaleX(1.1550);transform-origin:0 0;">(3,780)</span>
<span style="left:2559.01px;top:803.13px;font:400 12.6px/12.6px 'Liberation Sans',sans-serif;color:#222222;transform:scaleX(1.1550);transform-origin:0 0;">(3,791)</span>
<span style="left:2679.01px;top:803.13px;font:400 12.6px/12.6px 'Liberation Sans',sans-serif;color:#222222;transform:scaleX(1.1550);transform-origin:0 0;">(3,801)</span>
<span style="left:2799.01px;top:803.13px;font:400 12.6px/12.6px 'Liberation Sans',sans-serif;color:#222222;transform:scaleX(1.1550);transform-origin:0 0;">(3,812)</span>
<span style="left:138.25px;top:819.89px;font:400 16.2px/16.2px 'Liberation Sans',sans-serif;color:#222222;transform:scaleX(0.9649);transform-origin:0 0;">Equity Raisings</span>
<span style="left:867.40px;top:822.93px;font:400 12.6px/12.6px 'Liberation Sans',sans-serif;color:#222222;transform:scaleX(1.1550);transform-origin:0 0;">700,000</span>
<span style="left:1034.60px;top:821.40px;font:400 13px/13px 'Liberation Sans',sans-serif;color:#222222;transform:scaleX(1.3000);transform-origin:0 0;">-</span>
<span style="left:1154.60px;top:821.40px;font:400 13px/13px 'Liberation Sans',sans-serif;color:#222222;transform:scaleX(1.3000);transform-origin:0 0;">-</span>
<span style="left:1274.60px;top:821.40px;font:400 13px/13px 'Liberation Sans',sans-serif;color:#222222;transform:scaleX(1.3000);transform-origin:0 0;">-</span>
<span style="left:1394.60px;top:821.40px;font:400 13px/13px 'Liberation Sans',sans-serif;color:#222222;transform:scaleX(1.3000);transform-origin:0 0;">-</span>
<span style="left:1514.60px;top:821.40px;font:400 13px/13px 'Liberation Sans',sans-serif;color:#222222;transform:scaleX(1.3000);transform-origin:0 0;">-</span>
<span style="left:1634.60px;top:821.40px;font:400 13px/13px 'Liberation Sans',sans-serif;color:#222222;transform:scaleX(1.3000);transform-origin:0 0;">-</span>
<span style="left:1754.60px;top:821.40px;font:400 13px/13px 'Liberation Sans',sans-serif;color:#222222;transform:scaleX(1.3000);transform-origin:0 0;">-</span>
<span style="left:1874.60px;top:821.40px;font:400 13px/13px 'Liberation Sans',sans-serif;color:#222222;transform:scaleX(1.3000);transform-origin:0 0;">-</span>
<span style="left:1994.60px;top:821.40px;font:400 13px/13px 'Liberation Sans',sans-serif;color:#222222;transform:scaleX(1.3000);transform-origin:0 0;">-</span>
<span style="left:2114.60px;top:821.40px;font:400 13px/13px 'Liberation Sans',sans-serif;color:#222222;transform:scaleX(1.3000);transform-origin:0 0;">-</span>
<span style="left:2234.60px;top:821.40px;font:400 13px/13px 'Liberation Sans',sans-serif;color:#222222;transform:scaleX(1.3000);transform-origin:0 0;">-</span>
<span style="left:2354.60px;top:821.40px;font:400 13px/13px 'Liberation Sans',sans-serif;color:#222222;transform:scaleX(1.3000);transform-origin:0 0;">-</span>
<span style="left:2474.60px;top:821.40px;font:400 13px/13px 'Liberation Sans',sans-serif;color:#222222;transform:scaleX(1.3000);transform-origin:0 0;">-</span>
<span style="left:2594.60px;top:821.40px;font:400 13px/13px 'Liberation Sans',sans-serif;color:#222222;transform:scaleX(1.3000);transform-origin:0 0;">-</span>
<span style="left:2714.60px;top:821.40px;font:400 13px/13px 'Liberation Sans',sans-serif;color:#222222;transform:scaleX(1.3000);transform-origin:0 0;">-</span>
<span style="left:2834.60px;top:821.40px;font:400 13px/13px 'Liberation Sans',sans-serif;color:#222222;transform:scaleX(1.3000);transform-origin:0 0;">-</span>
<span style="left:138.26px;top:839.99px;font:400 16.2px/16.2px 'Liberation Sans',sans-serif;color:#222222;transform:scaleX(0.9573);transform-origin:0 0;">Equity Buybacks</span>
<span style="left:914.60px;top:841.50px;font:400 13px/13px 'Liberation Sans',sans-serif;color:#222222;transform:scaleX(1.3000);transform-origin:0 0;">-</span>
<span style="left:1034.60px;top:841.50px;font:400 13px/13px 'Liberation Sans',sans-serif;color:#222222;transform:scaleX(1.3000);transform-origin:0 0;">-</span>
<span style="left:1154.60px;top:841.50px;font:400 13px/13px 'Liberation Sans',sans-serif;color:#222222;transform:scaleX(1.3000);transform-origin:0 0;">-</span>
<span style="left:1274.60px;top:841.50px;font:400 13px/13px 'Liberation Sans',sans-serif;color:#222222;transform:scaleX(1.3000);transform-origin:0 0;">-</span>
<span style="left:1394.60px;top:841.50px;font:400 13px/13px 'Liberation Sans',sans-serif;color:#222222;transform:scaleX(1.3000);transform-origin:0 0;">-</span>
<span style="left:1514.60px;top:841.50px;font:400 13px/13px 'Liberation Sans',sans-serif;color:#222222;transform:scaleX(1.3000);transform-origin:0 0;">-</span>
<span style="left:1634.60px;top:841.50px;font:400 13px/13px 'Liberation Sans',sans-serif;color:#222222;transform:scaleX(1.3000);transform-origin:0 0;">-</span>
<span style="left:1754.60px;top:841.50px;font:400 13px/13px 'Liberation Sans',sans-serif;color:#222222;transform:scaleX(1.3000);transform-origin:0 0;">-</span>
<span style="left:1874.60px;top:841.50px;font:400 13px/13px 'Liberation Sans',sans-serif;color:#222222;transform:scaleX(1.3000);transform-origin:0 0;">-</span>
<span style="left:1994.60px;top:841.50px;font:400 13px/13px 'Liberation Sans',sans-serif;color:#222222;transform:scaleX(1.3000);transform-origin:0 0;">-</span>
<span style="left:2114.60px;top:841.50px;font:400 13px/13px 'Liberation Sans',sans-serif;color:#222222;transform:scaleX(1.3000);transform-origin:0 0;">-</span>
<span style="left:2234.60px;top:841.50px;font:400 13px/13px 'Liberation Sans',sans-serif;color:#222222;transform:scaleX(1.3000);transform-origin:0 0;">-</span>
<span style="left:2354.60px;top:841.50px;font:400 13px/13px 'Liberation Sans',sans-serif;color:#222222;transform:scaleX(1.3000);transform-origin:0 0;">-</span>
<span style="left:2474.60px;top:841.50px;font:400 13px/13px 'Liberation Sans',sans-serif;color:#222222;transform:scaleX(1.3000);transform-origin:0 0;">-</span>
<span style="left:2594.60px;top:841.50px;font:400 13px/13px 'Liberation Sans',sans-serif;color:#222222;transform:scaleX(1.3000);transform-origin:0 0;">-</span>
<span style="left:2714.60px;top:841.50px;font:400 13px/13px 'Liberation Sans',sans-serif;color:#222222;transform:scaleX(1.3000);transform-origin:0 0;">-</span>
<span style="left:2834.60px;top:841.50px;font:400 13px/13px 'Liberation Sans',sans-serif;color:#222222;transform:scaleX(1.3000);transform-origin:0 0;">-</span>
<span style="left:138.23px;top:859.99px;font:400 16.2px/16.2px 'Liberation Sans',sans-serif;color:#222222;transform:scaleX(0.9772);transform-origin:0 0;">Dividends Paid</span>
<span style="left:914.60px;top:861.50px;font:400 13px/13px 'Liberation Sans',sans-serif;color:#222222;transform:scaleX(1.3000);transform-origin:0 0;">-</span>
<span style="left:1034.60px;top:861.50px;font:400 13px/13px 'Liberation Sans',sans-serif;color:#222222;transform:scaleX(1.3000);transform-origin:0 0;">-</span>
<span style="left:1154.60px;top:861.50px;font:400 13px/13px 'Liberation Sans',sans-serif;color:#222222;transform:scaleX(1.3000);transform-origin:0 0;">-</span>
<span style="left:1274.60px;top:861.50px;font:400 13px/13px 'Liberation Sans',sans-serif;color:#222222;transform:scaleX(1.3000);transform-origin:0 0;">-</span>
<span style="left:1394.60px;top:861.50px;font:400 13px/13px 'Liberation Sans',sans-serif;color:#222222;transform:scaleX(1.3000);transform-origin:0 0;">-</span>
<span style="left:1514.60px;top:861.50px;font:400 13px/13px 'Liberation Sans',sans-serif;color:#222222;transform:scaleX(1.3000);transform-origin:0 0;">-</span>
<span style="left:1634.60px;top:861.50px;font:400 13px/13px 'Liberation Sans',sans-serif;color:#222222;transform:scaleX(1.3000);transform-origin:0 0;">-</span>
<span style="left:1754.60px;top:861.50px;font:400 13px/13px 'Liberation Sans',sans-serif;color:#222222;transform:scaleX(1.3000);transform-origin:0 0;">-</span>
<span style="left:1874.60px;top:861.50px;font:400 13px/13px 'Liberation Sans',sans-serif;color:#222222;transform:scaleX(1.3000);transform-origin:0 0;">-</span>
<span style="left:1994.60px;top:861.50px;font:400 13px/13px 'Liberation Sans',sans-serif;color:#222222;transform:scaleX(1.3000);transform-origin:0 0;">-</span>
<span style="left:2114.60px;top:861.50px;font:400 13px/13px 'Liberation Sans',sans-serif;color:#222222;transform:scaleX(1.3000);transform-origin:0 0;">-</span>
<span style="left:2234.60px;top:861.50px;font:400 13px/13px 'Liberation Sans',sans-serif;color:#222222;transform:scaleX(1.3000);transform-origin:0 0;">-</span>
<span style="left:2354.60px;top:861.50px;font:400 13px/13px 'Liberation Sans',sans-serif;color:#222222;transform:scaleX(1.3000);transform-origin:0 0;">-</span>
<span style="left:2474.60px;top:861.50px;font:400 13px/13px 'Liberation Sans',sans-serif;color:#222222;transform:scaleX(1.3000);transform-origin:0 0;">-</span>
<span style="left:2594.60px;top:861.50px;font:400 13px/13px 'Liberation Sans',sans-serif;color:#222222;transform:scaleX(1.3000);transform-origin:0 0;">-</span>
<span style="left:2714.60px;top:861.50px;font:400 13px/13px 'Liberation Sans',sans-serif;color:#222222;transform:scaleX(1.3000);transform-origin:0 0;">-</span>
<span style="left:2834.60px;top:861.50px;font:400 13px/13px 'Liberation Sans',sans-serif;color:#222222;transform:scaleX(1.3000);transform-origin:0 0;">-</span>
<span style="left:138.24px;top:1032.99px;font:400 16.2px/16.2px 'Liberation Sans',sans-serif;color:#222222;transform:scaleX(0.9713);transform-origin:0 0;">Net Income Less Depreciation</span>
<span style="left:871.97px;top:1032.73px;font:400 16.5px/16.5px 'Liberation Sans',sans-serif;color:#222222;">(7,605)</span>
<span style="left:991.97px;top:1032.73px;font:400 16.5px/16.5px 'Liberation Sans',sans-serif;color:#222222;">(6,131)</span>
<span style="left:1111.97px;top:1032.73px;font:400 16.5px/16.5px 'Liberation Sans',sans-serif;color:#222222;">(5,323)</span>
<span style="left:1231.97px;top:1032.73px;font:400 16.5px/16.5px 'Liberation Sans',sans-serif;color:#222222;">(3,838)</span>
<span style="left:1351.97px;top:1032.73px;font:400 16.5px/16.5px 'Liberation Sans',sans-serif;color:#222222;">(2,353)</span>
<span style="left:1485.75px;top:1032.73px;font:400 16.5px/16.5px 'Liberation Sans',sans-serif;color:#222222;">(868)</span>
<span style="left:1591.97px;top:1032.73px;font:400 16.5px/16.5px 'Liberation Sans',sans-serif;color:#222222;">(1,788)</span>
<span style="left:1725.75px;top:1032.73px;font:400 16.5px/16.5px 'Liberation Sans',sans-serif;color:#222222;">(303)</span>
<span style="left:1836.58px;top:1032.73px;font:400 16.5px/16.5px 'Liberation Sans',sans-serif;color:#222222;">1,182</span>
<span style="left:1956.41px;top:1032.73px;font:400 16.5px/16.5px 'Liberation Sans',sans-serif;color:#222222;">1,193</span>
<span style="left:2076.16px;top:1032.73px;font:400 16.5px/16.5px 'Liberation Sans',sans-serif;color:#222222;">1,204</span>
<span style="left:2196.41px;top:1032.73px;font:400 16.5px/16.5px 'Liberation Sans',sans-serif;color:#222222;">1,215</span>
<span style="left:2330.19px;top:1032.73px;font:400 16.5px/16.5px 'Liberation Sans',sans-serif;color:#222222;">966</span>
<span style="left:2436.57px;top:1032.73px;font:400 16.5px/16.5px 'Liberation Sans',sans-serif;color:#222222;">2,332</span>
<span style="left:2556.57px;top:1032.73px;font:400 16.5px/16.5px 'Liberation Sans',sans-serif;color:#222222;">3,697</span>
<span style="left:2676.57px;top:1032.73px;font:400 16.5px/16.5px 'Liberation Sans',sans-serif;color:#222222;">5,062</span>
<span style="left:2796.41px;top:1032.73px;font:400 16.5px/16.5px 'Liberation Sans',sans-serif;color:#222222;">6,428</span>
<span style="left:138.71px;top:1055.79px;font:400 16.2px/16.2px 'Liberation Sans',sans-serif;color:#222222;transform:scaleX(0.9753);transform-origin:0 0;">Changes in Working Capital</span>
<span style="left:876.58px;top:1055.53px;font:400 16.5px/16.5px 'Liberation Sans',sans-serif;color:#222222;">2,927</span>
<span style="left:1005.75px;top:1055.53px;font:400 16.5px/16.5px 'Liberation Sans',sans-serif;color:#222222;">(774)</span>
<span style="left:1111.97px;top:1055.53px;font:400 16.5px/16.5px 'Liberation Sans',sans-serif;color:#222222;">(1,191)</span>
<span style="left:1245.75px;top:1055.53px;font:400 16.5px/16.5px 'Liberation Sans',sans-serif;color:#222222;">(983)</span>
<span style="left:1365.75px;top:1055.53px;font:400 16.5px/16.5px 'Liberation Sans',sans-serif;color:#222222;">(982)</span>
<span style="left:1471.97px;top:1055.53px;font:400 16.5px/16.5px 'Liberation Sans',sans-serif;color:#222222;">(1,048)</span>
<span style="left:1610.19px;top:1055.53px;font:400 16.5px/16.5px 'Liberation Sans',sans-serif;color:#222222;">248</span>
<span style="left:1725.75px;top:1055.53px;font:400 16.5px/16.5px 'Liberation Sans',sans-serif;color:#222222;">(982)</span>
<span style="left:1831.97px;top:1055.53px;font:400 16.5px/16.5px 'Liberation Sans',sans-serif;color:#222222;">(1,108)</span>
<span style="left:1970.19px;top:1055.53px;font:400 16.5px/16.5px 'Liberation Sans',sans-serif;color:#222222;">126</span>
<span style="left:2085.74px;top:1055.53px;font:400 16.5px/16.5px 'Liberation Sans',sans-serif;color:#222222;">(126)</span>
<span style="left:2210.19px;top:1055.53px;font:400 16.5px/16.5px 'Liberation Sans',sans-serif;color:#222222;">126</span>
<span style="left:2325.74px;top:1055.53px;font:400 16.5px/16.5px 'Liberation Sans',sans-serif;color:#222222;">(456)</span>
<span style="left:2431.97px;top:1055.53px;font:400 16.5px/16.5px 'Liberation Sans',sans-serif;color:#222222;">(1,764)</span>
<span style="left:2565.74px;top:1055.53px;font:400 16.5px/16.5px 'Liberation Sans',sans-serif;color:#222222;">(605)</span>
<span style="left:2671.97px;top:1055.53px;font:400 16.5px/16.5px 'Liberation Sans',sans-serif;color:#222222;">(1,444)</span>
<span style="left:2805.74px;top:1055.53px;font:400 16.5px/16.5px 'Liberation Sans',sans-serif;color:#222222;">(925)</span>
<span style="left:138.71px;top:1144.69px;font:400 16.2px/16.2px 'Liberation Sans',sans-serif;color:#222222;transform:scaleX(0.9756);transform-origin:0 0;">Capital Expenditure</span>
<span style="left:871.97px;top:1144.43px;font:400 16.5px/16.5px 'Liberation Sans',sans-serif;color:#222222;">(6,500)</span>
<span style="left:991.97px;top:1144.43px;font:400 16.5px/16.5px 'Liberation Sans',sans-serif;color:#222222;">(8,000)</span>
<span style="left:1111.97px;top:1144.43px;font:400 16.5px/16.5px 'Liberation Sans',sans-serif;color:#222222;">(2,500)</span>
<span style="left:1231.97px;top:1144.43px;font:400 16.5px/16.5px 'Liberation Sans',sans-serif;color:#222222;">(1,500)</span>
<span style="left:1365.75px;top:1144.43px;font:400 16.5px/16.5px 'Liberation Sans',sans-serif;color:#222222;">(300)</span>
<span style="left:1485.75px;top:1144.43px;font:400 16.5px/16.5px 'Liberation Sans',sans-serif;color:#222222;">(500)</span>
<span style="left:1632.36px;top:1142.36px;font:400 16px/16px 'Liberation Sans',sans-serif;color:#222222;">-</span>
<span style="left:1752.36px;top:1142.36px;font:400 16px/16px 'Liberation Sans',sans-serif;color:#222222;">-</span>
<span style="left:1872.36px;top:1142.36px;font:400 16px/16px 'Liberation Sans',sans-serif;color:#222222;">-</span>
<span style="left:1992.36px;top:1142.36px;font:400 16px/16px 'Liberation Sans',sans-serif;color:#222222;">-</span>
<span style="left:2112.36px;top:1142.36px;font:400 16px/16px 'Liberation Sans',sans-serif;color:#222222;">-</span>
<span style="left:2232.36px;top:1142.36px;font:400 16px/16px 'Liberation Sans',sans-serif;color:#222222;">-</span>
<span style="left:2352.36px;top:1142.36px;font:400 16px/16px 'Liberation Sans',sans-serif;color:#222222;">-</span>
<span style="left:2472.36px;top:1142.36px;font:400 16px/16px 'Liberation Sans',sans-serif;color:#222222;">-</span>
<span style="left:2592.36px;top:1142.36px;font:400 16px/16px 'Liberation Sans',sans-serif;color:#222222;">-</span>
<span style="left:2712.36px;top:1142.36px;font:400 16px/16px 'Liberation Sans',sans-serif;color:#222222;">-</span>
<span style="left:2832.36px;top:1142.36px;font:400 16px/16px 'Liberation Sans',sans-serif;color:#222222;">-</span>
<span style="left:138.20px;top:1233.29px;font:400 16.2px/16.2px 'Liberation Sans',sans-serif;color:#222222;">Equity Investment</span>
<span style="left:857.93px;top:1233.03px;font:400 16.5px/16.5px 'Liberation Sans',sans-serif;color:#222222;">700,000</span>
<span style="left:1032.36px;top:1230.96px;font:400 16px/16px 'Liberation Sans',sans-serif;color:#222222;">-</span>
<span style="left:1152.36px;top:1230.96px;font:400 16px/16px 'Liberation Sans',sans-serif;color:#222222;">-</span>
<span style="left:1272.36px;top:1230.96px;font:400 16px/16px 'Liberation Sans',sans-serif;color:#222222;">-</span>
<span style="left:1392.36px;top:1230.96px;font:400 16px/16px 'Liberation Sans',sans-serif;color:#222222;">-</span>
<span style="left:1512.36px;top:1230.96px;font:400 16px/16px 'Liberation Sans',sans-serif;color:#222222;">-</span>
<span style="left:1632.36px;top:1230.96px;font:400 16px/16px 'Liberation Sans',sans-serif;color:#222222;">-</span>
<span style="left:1752.36px;top:1230.96px;font:400 16px/16px 'Liberation Sans',sans-serif;color:#222222;">-</span>
<span style="left:1872.36px;top:1230.96px;font:400 16px/16px 'Liberation Sans',sans-serif;color:#222222;">-</span>
<span style="left:1992.36px;top:1230.96px;font:400 16px/16px 'Liberation Sans',sans-serif;color:#222222;">-</span>
<span style="left:2112.36px;top:1230.96px;font:400 16px/16px 'Liberation Sans',sans-serif;color:#222222;">-</span>
<span style="left:2232.36px;top:1230.96px;font:400 16px/16px 'Liberation Sans',sans-serif;color:#222222;">-</span>
<span style="left:2352.36px;top:1230.96px;font:400 16px/16px 'Liberation Sans',sans-serif;color:#222222;">-</span>
<span style="left:2472.36px;top:1230.96px;font:400 16px/16px 'Liberation Sans',sans-serif;color:#222222;">-</span>
<span style="left:2592.36px;top:1230.96px;font:400 16px/16px 'Liberation Sans',sans-serif;color:#222222;">-</span>
<span style="left:2712.36px;top:1230.96px;font:400 16px/16px 'Liberation Sans',sans-serif;color:#222222;">-</span>
<span style="left:2832.36px;top:1230.96px;font:400 16px/16px 'Liberation Sans',sans-serif;color:#222222;">-</span>
<span style="left:138.27px;top:1252.89px;font:400 16.2px/16.2px 'Liberation Sans',sans-serif;color:#222222;transform:scaleX(0.9484);transform-origin:0 0;">Loans</span>
<span style="left:857.93px;top:1252.63px;font:400 16.5px/16.5px 'Liberation Sans',sans-serif;color:#222222;">200,000</span>
<span style="left:1032.36px;top:1250.56px;font:400 16px/16px 'Liberation Sans',sans-serif;color:#222222;">-</span>
<span style="left:1107.17px;top:1252.63px;font:400 16.5px/16.5px 'Liberation Sans',sans-serif;color:#222222;">98,333</span>
<span style="left:1231.97px;top:1252.63px;font:400 16.5px/16.5px 'Liberation Sans',sans-serif;color:#222222;">(1,667)</span>
<span style="left:1351.97px;top:1252.63px;font:400 16.5px/16.5px 'Liberation Sans',sans-serif;color:#222222;">(1,667)</span>
<span style="left:1471.97px;top:1252.63px;font:400 16.5px/16.5px 'Liberation Sans',sans-serif;color:#222222;">(1,667)</span>
<span style="left:1591.97px;top:1252.63px;font:400 16.5px/16.5px 'Liberation Sans',sans-serif;color:#222222;">(1,667)</span>
<span style="left:1711.97px;top:1252.63px;font:400 16.5px/16.5px 'Liberation Sans',sans-serif;color:#222222;">(1,667)</span>
<span style="left:1831.97px;top:1252.63px;font:400 16.5px/16.5px 'Liberation Sans',sans-serif;color:#222222;">(1,667)</span>
<span style="left:1951.97px;top:1252.63px;font:400 16.5px/16.5px 'Liberation Sans',sans-serif;color:#222222;">(1,667)</span>
<span style="left:2071.97px;top:1252.63px;font:400 16.5px/16.5px 'Liberation Sans',sans-serif;color:#222222;">(1,667)</span>
<span style="left:2191.97px;top:1252.63px;font:400 16.5px/16.5px 'Liberation Sans',sans-serif;color:#222222;">(1,667)</span>
<span style="left:2311.97px;top:1252.63px;font:400 16.5px/16.5px 'Liberation Sans',sans-serif;color:#222222;">(3,770)</span>
<span style="left:2431.97px;top:1252.63px;font:400 16.5px/16.5px 'Liberation Sans',sans-serif;color:#222222;">(3,780)</span>
<span style="left:2551.97px;top:1252.63px;font:400 16.5px/16.5px 'Liberation Sans',sans-serif;color:#222222;">(3,791)</span>
<span style="left:2671.97px;top:1252.63px;font:400 16.5px/16.5px 'Liberation Sans',sans-serif;color:#222222;">(3,801)</span>
<span style="left:2791.97px;top:1252.63px;font:400 16.5px/16.5px 'Liberation Sans',sans-serif;color:#222222;">(3,812)</span>
<span style="left:138.23px;top:1272.99px;font:400 16.2px/16.2px 'Liberation Sans',sans-serif;color:#222222;transform:scaleX(0.9772);transform-origin:0 0;">Dividends Paid</span>
<span style="left:912.36px;top:1270.66px;font:400 16px/16px 'Liberation Sans',sans-serif;color:#222222;">-</span>
<span style="left:1032.36px;top:1270.66px;font:400 16px/16px 'Liberation Sans',sans-serif;color:#222222;">-</span>
<span style="left:1152.36px;top:1270.66px;font:400 16px/16px 'Liberation Sans',sans-serif;color:#222222;">-</span>
<span style="left:1272.36px;top:1270.66px;font:400 16px/16px 'Liberation Sans',sans-serif;color:#222222;">-</span>
<span style="left:1392.36px;top:1270.66px;font:400 16px/16px 'Liberation Sans',sans-serif;color:#222222;">-</span>
<span style="left:1512.36px;top:1270.66px;font:400 16px/16px 'Liberation Sans',sans-serif;color:#222222;">-</span>
<span style="left:1632.36px;top:1270.66px;font:400 16px/16px 'Liberation Sans',sans-serif;color:#222222;">-</span>
<span style="left:1752.36px;top:1270.66px;font:400 16px/16px 'Liberation Sans',sans-serif;color:#222222;">-</span>
<span style="left:1872.36px;top:1270.66px;font:400 16px/16px 'Liberation Sans',sans-serif;color:#222222;">-</span>
<span style="left:1992.36px;top:1270.66px;font:400 16px/16px 'Liberation Sans',sans-serif;color:#222222;">-</span>
<span style="left:2112.36px;top:1270.66px;font:400 16px/16px 'Liberation Sans',sans-serif;color:#222222;">-</span>
<span style="left:2232.36px;top:1270.66px;font:400 16px/16px 'Liberation Sans',sans-serif;color:#222222;">-</span>
<span style="left:2352.36px;top:1270.66px;font:400 16px/16px 'Liberation Sans',sans-serif;color:#222222;">-</span>
<span style="left:2472.36px;top:1270.66px;font:400 16px/16px 'Liberation Sans',sans-serif;color:#222222;">-</span>
<span style="left:2592.36px;top:1270.66px;font:400 16px/16px 'Liberation Sans',sans-serif;color:#222222;">-</span>
<span style="left:2712.36px;top:1270.66px;font:400 16px/16px 'Liberation Sans',sans-serif;color:#222222;">-</span>
<span style="left:2832.36px;top:1270.66px;font:400 16px/16px 'Liberation Sans',sans-serif;color:#222222;">-</span>
<span style="left:138.72px;top:1359.99px;font:400 16.2px/16.2px 'Liberation Sans',sans-serif;color:#222222;transform:scaleX(0.9589);transform-origin:0 0;">Cash and Cash Equivalents Beginning</span>
<span style="left:912.36px;top:1357.66px;font:400 16px/16px 'Liberation Sans',sans-serif;color:#222222;">-</span>
<span style="left:978.18px;top:1359.73px;font:400 16.5px/16.5px 'Liberation Sans',sans-serif;color:#222222;">888,822</span>
<span style="left:1098.18px;top:1359.73px;font:400 16.5px/16.5px 'Liberation Sans',sans-serif;color:#222222;">873,917</span>
<span style="left:1218.18px;top:1359.73px;font:400 16.5px/16.5px 'Liberation Sans',sans-serif;color:#222222;">963,237</span>
<span style="left:1338.10px;top:1359.73px;font:400 16.5px/16.5px 'Liberation Sans',sans-serif;color:#222222;">955,249</span>
<span style="left:1458.01px;top:1359.73px;font:400 16.5px/16.5px 'Liberation Sans',sans-serif;color:#222222;">949,948</span>
<span style="left:1578.01px;top:1359.73px;font:400 16.5px/16.5px 'Liberation Sans',sans-serif;color:#222222;">945,866</span>
<span style="left:1698.10px;top:1359.73px;font:400 16.5px/16.5px 'Liberation Sans',sans-serif;color:#222222;">942,659</span>
<span style="left:1818.18px;top:1359.73px;font:400 16.5px/16.5px 'Liberation Sans',sans-serif;color:#222222;">939,707</span>
<span style="left:1939.00px;top:1359.73px;font:400 16.5px/16.5px 'Liberation Sans',sans-serif;color:#222222;">938,114</span>
<span style="left:2058.01px;top:1359.73px;font:400 16.5px/16.5px 'Liberation Sans',sans-serif;color:#222222;">937,766</span>
<span style="left:2178.01px;top:1359.73px;font:400 16.5px/16.5px 'Liberation Sans',sans-serif;color:#222222;">937,178</span>
<span style="left:2298.01px;top:1359.73px;font:400 16.5px/16.5px 'Liberation Sans',sans-serif;color:#222222;">936,853</span>
<span style="left:2418.01px;top:1359.73px;font:400 16.5px/16.5px 'Liberation Sans',sans-serif;color:#222222;">933,593</span>
<span style="left:2538.09px;top:1359.73px;font:400 16.5px/16.5px 'Liberation Sans',sans-serif;color:#222222;">930,381</span>
<span style="left:2658.18px;top:1359.73px;font:400 16.5px/16.5px 'Liberation Sans',sans-serif;color:#222222;">929,682</span>
<span style="left:2777.93px;top:1359.73px;font:400 16.5px/16.5px 'Liberation Sans',sans-serif;color:#222222;">929,500</span>
<span style="left:138.25px;top:1383.09px;font:400 16.2px/16.2px 'Liberation Sans',sans-serif;color:#222222;transform:scaleX(0.9624);transform-origin:0 0;">Net (Increase) Decrease In Cash</span>
<span style="left:858.18px;top:1382.83px;font:400 16.5px/16.5px 'Liberation Sans',sans-serif;color:#222222;">888,822</span>
<span style="left:982.81px;top:1382.83px;font:400 16.5px/16.5px 'Liberation Sans',sans-serif;color:#222222;">(14,905)</span>
<span style="left:1107.25px;top:1382.83px;font:400 16.5px/16.5px 'Liberation Sans',sans-serif;color:#222222;">89,319</span>
<span style="left:1231.97px;top:1382.83px;font:400 16.5px/16.5px 'Liberation Sans',sans-serif;color:#222222;">(7,988)</span>
<span style="left:1351.97px;top:1382.83px;font:400 16.5px/16.5px 'Liberation Sans',sans-serif;color:#222222;">(5,301)</span>
<span style="left:1471.97px;top:1382.83px;font:400 16.5px/16.5px 'Liberation Sans',sans-serif;color:#222222;">(4,083)</span>
<span style="left:1591.97px;top:1382.83px;font:400 16.5px/16.5px 'Liberation Sans',sans-serif;color:#222222;">(3,207)</span>
<span style="left:1711.97px;top:1382.83px;font:400 16.5px/16.5px 'Liberation Sans',sans-serif;color:#222222;">(2,952)</span>
<span style="left:1831.97px;top:1382.83px;font:400 16.5px/16.5px 'Liberation Sans',sans-serif;color:#222222;">(1,592)</span>
<span style="left:1965.75px;top:1382.83px;font:400 16.5px/16.5px 'Liberation Sans',sans-serif;color:#222222;">(348)</span>
<span style="left:2085.74px;top:1382.83px;font:400 16.5px/16.5px 'Liberation Sans',sans-serif;color:#222222;">(588)</span>
<span style="left:2205.74px;top:1382.83px;font:400 16.5px/16.5px 'Liberation Sans',sans-serif;color:#222222;">(326)</span>
<span style="left:2311.97px;top:1382.83px;font:400 16.5px/16.5px 'Liberation Sans',sans-serif;color:#222222;">(3,259)</span>
<span style="left:2431.97px;top:1382.83px;font:400 16.5px/16.5px 'Liberation Sans',sans-serif;color:#222222;">(3,212)</span>
<span style="left:2565.74px;top:1382.83px;font:400 16.5px/16.5px 'Liberation Sans',sans-serif;color:#222222;">(699)</span>
<span style="left:2685.74px;top:1382.83px;font:400 16.5px/16.5px 'Liberation Sans',sans-serif;color:#222222;">(183)</span>
<span style="left:2796.49px;top:1382.83px;font:400 16.5px/16.5px 'Liberation Sans',sans-serif;color:#222222;">1,691</span>
<span style="left:138.21px;top:1500.79px;font:400 16.2px/16.2px 'Liberation Sans',sans-serif;color:#222222;transform:scaleX(0.9955);transform-origin:0 0;">Net Cash Flow from Investing Activities</span>
<span style="left:879.01px;top:1503.83px;font:400 12.6px/12.6px 'Liberation Sans',sans-serif;color:#222222;transform:scaleX(1.1550);transform-origin:0 0;">(6,500)</span>
<span style="left:999.01px;top:1503.83px;font:400 12.6px/12.6px 'Liberation Sans',sans-serif;color:#222222;transform:scaleX(1.1550);transform-origin:0 0;">(8,000)</span>
<span style="left:1119.01px;top:1503.83px;font:400 12.6px/12.6px 'Liberation Sans',sans-serif;color:#222222;transform:scaleX(1.1550);transform-origin:0 0;">(2,500)</span>
<span style="left:1239.01px;top:1503.83px;font:400 12.6px/12.6px 'Liberation Sans',sans-serif;color:#222222;transform:scaleX(1.1550);transform-origin:0 0;">(1,500)</span>
<span style="left:1371.16px;top:1503.83px;font:400 12.6px/12.6px 'Liberation Sans',sans-serif;color:#222222;transform:scaleX(1.1550);transform-origin:0 0;">(300)</span>
<span style="left:1491.16px;top:1503.83px;font:400 12.6px/12.6px 'Liberation Sans',sans-serif;color:#222222;transform:scaleX(1.1550);transform-origin:0 0;">(500)</span>
<span style="left:1634.60px;top:1502.30px;font:400 13px/13px 'Liberation Sans',sans-serif;color:#222222;transform:scaleX(1.3000);transform-origin:0 0;">-</span>
<span style="left:1754.60px;top:1502.30px;font:400 13px/13px 'Liberation Sans',sans-serif;color:#222222;transform:scaleX(1.3000);transform-origin:0 0;">-</span>
<span style="left:1874.60px;top:1502.30px;font:400 13px/13px 'Liberation Sans',sans-serif;color:#222222;transform:scaleX(1.3000);transform-origin:0 0;">-</span>
<span style="left:1994.60px;top:1502.30px;font:400 13px/13px 'Liberation Sans',sans-serif;color:#222222;transform:scaleX(1.3000);transform-origin:0 0;">-</span>
<span style="left:2114.60px;top:1502.30px;font:400 13px/13px 'Liberation Sans',sans-serif;color:#222222;transform:scaleX(1.3000);transform-origin:0 0;">-</span>
<span style="left:2234.60px;top:1502.30px;font:400 13px/13px 'Liberation Sans',sans-serif;color:#222222;transform:scaleX(1.3000);transform-origin:0 0;">-</span>
<span style="left:2354.60px;top:1502.30px;font:400 13px/13px 'Liberation Sans',sans-serif;color:#222222;transform:scaleX(1.3000);transform-origin:0 0;">-</span>
<span style="left:2474.60px;top:1502.30px;font:400 13px/13px 'Liberation Sans',sans-serif;color:#222222;transform:scaleX(1.3000);transform-origin:0 0;">-</span>
<span style="left:2594.60px;top:1502.30px;font:400 13px/13px 'Liberation Sans',sans-serif;color:#222222;transform:scaleX(1.3000);transform-origin:0 0;">-</span>
<span style="left:2714.60px;top:1502.30px;font:400 13px/13px 'Liberation Sans',sans-serif;color:#222222;transform:scaleX(1.3000);transform-origin:0 0;">-</span>
<span style="left:2834.60px;top:1502.30px;font:400 13px/13px 'Liberation Sans',sans-serif;color:#222222;transform:scaleX(1.3000);transform-origin:0 0;">-</span>
<span style="left:138.23px;top:1520.89px;font:400 16.2px/16.2px 'Liberation Sans',sans-serif;color:#222222;transform:scaleX(0.9835);transform-origin:0 0;">Net Cash Flow from Financing Activities</span>
<span style="left:867.40px;top:1523.93px;font:400 12.6px/12.6px 'Liberation Sans',sans-serif;color:#222222;transform:scaleX(1.1550);transform-origin:0 0;">900,000</span>
<span style="left:1034.60px;top:1522.40px;font:400 13px/13px 'Liberation Sans',sans-serif;color:#222222;transform:scaleX(1.3000);transform-origin:0 0;">-</span>
<span style="left:1115.55px;top:1523.93px;font:400 12.6px/12.6px 'Liberation Sans',sans-serif;color:#222222;transform:scaleX(1.1550);transform-origin:0 0;">98,333</span>
<span style="left:1239.01px;top:1523.93px;font:400 12.6px/12.6px 'Liberation Sans',sans-serif;color:#222222;transform:scaleX(1.1550);transform-origin:0 0;">(1,667)</span>
<span style="left:1359.01px;top:1523.93px;font:400 12.6px/12.6px 'Liberation Sans',sans-serif;color:#222222;transform:scaleX(1.1550);transform-origin:0 0;">(1,667)</span>
<span style="left:1479.01px;top:1523.93px;font:400 12.6px/12.6px 'Liberation Sans',sans-serif;color:#222222;transform:scaleX(1.1550);transform-origin:0 0;">(1,667)</span>
<span style="left:1599.01px;top:1523.93px;font:400 12.6px/12.6px 'Liberation Sans',sans-serif;color:#222222;transform:scaleX(1.1550);transform-origin:0 0;">(1,667)</span>
<span style="left:1719.01px;top:1523.93px;font:400 12.6px/12.6px 'Liberation Sans',sans-serif;color:#222222;transform:scaleX(1.1550);transform-origin:0 0;">(1,667)</span>
<span style="left:1839.01px;top:1523.93px;font:400 12.6px/12.6px 'Liberation Sans',sans-serif;color:#222222;transform:scaleX(1.1550);transform-origin:0 0;">(1,667)</span>
<span style="left:1959.01px;top:1523.93px;font:400 12.6px/12.6px 'Liberation Sans',sans-serif;color:#222222;transform:scaleX(1.1550);transform-origin:0 0;">(1,667)</span>
<span style="left:2079.01px;top:1523.93px;font:400 12.6px/12.6px 'Liberation Sans',sans-serif;color:#222222;transform:scaleX(1.1550);transform-origin:0 0;">(1,667)</span>
<span style="left:2199.01px;top:1523.93px;font:400 12.6px/12.6px 'Liberation Sans',sans-serif;color:#222222;transform:scaleX(1.1550);transform-origin:0 0;">(1,667)</span>
<span style="left:2319.01px;top:1523.93px;font:400 12.6px/12.6px 'Liberation Sans',sans-serif;color:#222222;transform:scaleX(1.1550);transform-origin:0 0;">(3,770)</span>
<span style="left:2439.01px;top:1523.93px;font:400 12.6px/12.6px 'Liberation Sans',sans-serif;color:#222222;transform:scaleX(1.1550);transform-origin:0 0;">(3,780)</span>
<span style="left:2559.01px;top:1523.93px;font:400 12.6px/12.6px 'Liberation Sans',sans-serif;color:#222222;transform:scaleX(1.1550);transform-origin:0 0;">(3,791)</span>
<span style="left:2679.01px;top:1523.93px;font:400 12.6px/12.6px 'Liberation Sans',sans-serif;color:#222222;transform:scaleX(1.1550);transform-origin:0 0;">(3,801)</span>
<span style="left:2799.01px;top:1523.93px;font:400 12.6px/12.6px 'Liberation Sans',sans-serif;color:#222222;transform:scaleX(1.1550);transform-origin:0 0;">(3,812)</span>
<span style="left:138.75px;top:1540.89px;font:400 16.2px/16.2px 'Liberation Sans',sans-serif;color:#222222;transform:scaleX(0.9221);transform-origin:0 0;">Cash Receipts</span>
<span style="left:883.77px;top:1543.93px;font:400 12.6px/12.6px 'Liberation Sans',sans-serif;color:#222222;transform:scaleX(1.1550);transform-origin:0 0;">1,049</span>
<span style="left:1003.85px;top:1543.93px;font:400 12.6px/12.6px 'Liberation Sans',sans-serif;color:#222222;transform:scaleX(1.1550);transform-origin:0 0;">2,872</span>
<span style="left:1123.85px;top:1543.93px;font:400 12.6px/12.6px 'Liberation Sans',sans-serif;color:#222222;transform:scaleX(1.1550);transform-origin:0 0;">5,327</span>
<span style="left:1243.70px;top:1543.93px;font:400 12.6px/12.6px 'Liberation Sans',sans-serif;color:#222222;transform:scaleX(1.1550);transform-origin:0 0;">7,018</span>
<span style="left:1363.48px;top:1543.93px;font:400 12.6px/12.6px 'Liberation Sans',sans-serif;color:#222222;transform:scaleX(1.1550);transform-origin:0 0;">9,314</span>
<span style="left:1476.71px;top:1543.93px;font:400 12.6px/12.6px 'Liberation Sans',sans-serif;color:#222222;transform:scaleX(1.1550);transform-origin:0 0;">11,019</span>
<span style="left:1595.55px;top:1543.93px;font:400 12.6px/12.6px 'Liberation Sans',sans-serif;color:#222222;transform:scaleX(1.1550);transform-origin:0 0;">13,446</span>
<span style="left:1715.55px;top:1543.93px;font:400 12.6px/12.6px 'Liberation Sans',sans-serif;color:#222222;transform:scaleX(1.1550);transform-origin:0 0;">15,283</span>
<span style="left:1835.62px;top:1543.93px;font:400 12.6px/12.6px 'Liberation Sans',sans-serif;color:#222222;transform:scaleX(1.1550);transform-origin:0 0;">17,021</span>
<span style="left:1955.55px;top:1543.93px;font:400 12.6px/12.6px 'Liberation Sans',sans-serif;color:#222222;transform:scaleX(1.1550);transform-origin:0 0;">18,595</span>
<span style="left:2075.55px;top:1543.93px;font:400 12.6px/12.6px 'Liberation Sans',sans-serif;color:#222222;transform:scaleX(1.1550);transform-origin:0 0;">18,005</span>
<span style="left:2195.55px;top:1543.93px;font:400 12.6px/12.6px 'Liberation Sans',sans-serif;color:#222222;transform:scaleX(1.1550);transform-origin:0 0;">18,595</span>
<span style="left:2315.55px;top:1543.93px;font:400 12.6px/12.6px 'Liberation Sans',sans-serif;color:#222222;transform:scaleX(1.1550);transform-origin:0 0;">20,403</span>
<span style="left:2435.62px;top:1543.93px;font:400 12.6px/12.6px 'Liberation Sans',sans-serif;color:#222222;transform:scaleX(1.1550);transform-origin:0 0;">22,351</span>
<span style="left:2555.70px;top:1543.93px;font:400 12.6px/12.6px 'Liberation Sans',sans-serif;color:#222222;transform:scaleX(1.1550);transform-origin:0 0;">27,372</span>
<span style="left:2675.55px;top:1543.93px;font:400 12.6px/12.6px 'Liberation Sans',sans-serif;color:#222222;transform:scaleX(1.1550);transform-origin:0 0;">28,053</span>
<span style="left:2795.62px;top:1543.93px;font:400 12.6px/12.6px 'Liberation Sans',sans-serif;color:#222222;transform:scaleX(1.1550);transform-origin:0 0;">31,459</span>
<span style="left:138.74px;top:1560.99px;font:400 16.2px/16.2px 'Liberation Sans',sans-serif;color:#222222;transform:scaleX(0.9372);transform-origin:0 0;">Cash Payments</span>
<span style="left:879.01px;top:1564.03px;font:400 12.6px/12.6px 'Liberation Sans',sans-serif;color:#222222;transform:scaleX(1.1550);transform-origin:0 0;">(4,727)</span>
<span style="left:999.01px;top:1564.03px;font:400 12.6px/12.6px 'Liberation Sans',sans-serif;color:#222222;transform:scaleX(1.1550);transform-origin:0 0;">(8,777)</span>
<span style="left:1110.94px;top:1564.03px;font:400 12.6px/12.6px 'Liberation Sans',sans-serif;color:#222222;transform:scaleX(1.1550);transform-origin:0 0;">(10,174)</span>
<span style="left:1230.94px;top:1564.03px;font:400 12.6px/12.6px 'Liberation Sans',sans-serif;color:#222222;transform:scaleX(1.1550);transform-origin:0 0;">(10,184)</span>
<span style="left:1351.95px;top:1564.03px;font:400 12.6px/12.6px 'Liberation Sans',sans-serif;color:#222222;transform:scaleX(1.1550);transform-origin:0 0;">(11,004)</span>
<span style="left:1471.95px;top:1564.03px;font:400 12.6px/12.6px 'Liberation Sans',sans-serif;color:#222222;transform:scaleX(1.1550);transform-origin:0 0;">(11,302)</span>
<span style="left:1590.94px;top:1564.03px;font:400 12.6px/12.6px 'Liberation Sans',sans-serif;color:#222222;transform:scaleX(1.1550);transform-origin:0 0;">(13,364)</span>
<span style="left:1710.94px;top:1564.03px;font:400 12.6px/12.6px 'Liberation Sans',sans-serif;color:#222222;transform:scaleX(1.1550);transform-origin:0 0;">(14,957)</span>
<span style="left:1830.94px;top:1564.03px;font:400 12.6px/12.6px 'Liberation Sans',sans-serif;color:#222222;transform:scaleX(1.1550);transform-origin:0 0;">(15,347)</span>
<span style="left:1950.94px;top:1564.03px;font:400 12.6px/12.6px 'Liberation Sans',sans-serif;color:#222222;transform:scaleX(1.1550);transform-origin:0 0;">(15,688)</span>
<span style="left:2070.94px;top:1564.03px;font:400 12.6px/12.6px 'Liberation Sans',sans-serif;color:#222222;transform:scaleX(1.1550);transform-origin:0 0;">(15,348)</span>
<span style="left:2190.94px;top:1564.03px;font:400 12.6px/12.6px 'Liberation Sans',sans-serif;color:#222222;transform:scaleX(1.1550);transform-origin:0 0;">(15,688)</span>
<span style="left:2310.94px;top:1564.03px;font:400 12.6px/12.6px 'Liberation Sans',sans-serif;color:#222222;transform:scaleX(1.1550);transform-origin:0 0;">(18,069)</span>
<span style="left:2430.94px;top:1564.03px;font:400 12.6px/12.6px 'Liberation Sans',sans-serif;color:#222222;transform:scaleX(1.1550);transform-origin:0 0;">(19,526)</span>
<span style="left:2550.94px;top:1564.03px;font:400 12.6px/12.6px 'Liberation Sans',sans-serif;color:#222222;transform:scaleX(1.1550);transform-origin:0 0;">(21,589)</span>
<span style="left:2670.94px;top:1564.03px;font:400 12.6px/12.6px 'Liberation Sans',sans-serif;color:#222222;transform:scaleX(1.1550);transform-origin:0 0;">(21,310)</span>
<span style="left:2790.94px;top:1564.03px;font:400 12.6px/12.6px 'Liberation Sans',sans-serif;color:#222222;transform:scaleX(1.1550);transform-origin:0 0;">(22,399)</span>
<span style="left:138.70px;top:1580.99px;font:400 16.2px/16.2px 'Liberation Sans',sans-serif;color:#222222;transform:scaleX(0.9821);transform-origin:0 0;">Change in Cash (Pre-Corporate Tax &amp; Interest on Cash)</span>
<span style="left:867.62px;top:1584.03px;font:400 12.6px/12.6px 'Liberation Sans',sans-serif;color:#222222;transform:scaleX(1.1550);transform-origin:0 0;">889,822</span>
<span style="left:990.94px;top:1584.03px;font:400 12.6px/12.6px 'Liberation Sans',sans-serif;color:#222222;transform:scaleX(1.1550);transform-origin:0 0;">(13,905)</span>
<span style="left:1115.55px;top:1584.03px;font:400 12.6px/12.6px 'Liberation Sans',sans-serif;color:#222222;transform:scaleX(1.1550);transform-origin:0 0;">90,986</span>
<span style="left:1239.01px;top:1584.03px;font:400 12.6px/12.6px 'Liberation Sans',sans-serif;color:#222222;transform:scaleX(1.1550);transform-origin:0 0;">(6,332)</span>
<span style="left:1359.01px;top:1584.03px;font:400 12.6px/12.6px 'Liberation Sans',sans-serif;color:#222222;transform:scaleX(1.1550);transform-origin:0 0;">(3,657)</span>
<span style="left:1479.01px;top:1584.03px;font:400 12.6px/12.6px 'Liberation Sans',sans-serif;color:#222222;transform:scaleX(1.1550);transform-origin:0 0;">(2,449)</span>
<span style="left:1599.01px;top:1584.03px;font:400 12.6px/12.6px 'Liberation Sans',sans-serif;color:#222222;transform:scaleX(1.1550);transform-origin:0 0;">(1,585)</span>
<span style="left:1719.01px;top:1584.03px;font:400 12.6px/12.6px 'Liberation Sans',sans-serif;color:#222222;transform:scaleX(1.1550);transform-origin:0 0;">(1,341)</span>
<span style="left:1872.01px;top:1584.03px;font:400 12.6px/12.6px 'Liberation Sans',sans-serif;color:#222222;transform:scaleX(1.1550);transform-origin:0 0;">8</span>
<span style="left:1963.77px;top:1584.03px;font:400 12.6px/12.6px 'Liberation Sans',sans-serif;color:#222222;transform:scaleX(1.1550);transform-origin:0 0;">1,241</span>
<span style="left:2095.78px;top:1584.03px;font:400 12.6px/12.6px 'Liberation Sans',sans-serif;color:#222222;transform:scaleX(1.1550);transform-origin:0 0;">990</span>
<span style="left:2203.77px;top:1584.03px;font:400 12.6px/12.6px 'Liberation Sans',sans-serif;color:#222222;transform:scaleX(1.1550);transform-origin:0 0;">1,241</span>
<span style="left:2319.01px;top:1584.03px;font:400 12.6px/12.6px 'Liberation Sans',sans-serif;color:#222222;transform:scaleX(1.1550);transform-origin:0 0;">(1,435)</span>
<span style="left:2451.16px;top:1584.03px;font:400 12.6px/12.6px 'Liberation Sans',sans-serif;color:#222222;transform:scaleX(1.1550);transform-origin:0 0;">(955)</span>
<span style="left:2563.85px;top:1584.03px;font:400 12.6px/12.6px 'Liberation Sans',sans-serif;color:#222222;transform:scaleX(1.1550);transform-origin:0 0;">1,992</span>
<span style="left:2683.85px;top:1584.03px;font:400 12.6px/12.6px 'Liberation Sans',sans-serif;color:#222222;transform:scaleX(1.1550);transform-origin:0 0;">2,942</span>
<span style="left:2803.70px;top:1584.03px;font:400 12.6px/12.6px 'Liberation Sans',sans-serif;color:#222222;transform:scaleX(1.1550);transform-origin:0 0;">5,248</span>
<span style="left:138.08px;top:1601.09px;font:400 16.2px/16.2px 'Liberation Sans',sans-serif;color:#222222;transform:scaleX(0.9741);transform-origin:0 0;">Interest Expense</span>
<span style="left:879.01px;top:1604.13px;font:400 12.6px/12.6px 'Liberation Sans',sans-serif;color:#222222;transform:scaleX(1.1550);transform-origin:0 0;">(1,000)</span>
<span style="left:999.01px;top:1604.13px;font:400 12.6px/12.6px 'Liberation Sans',sans-serif;color:#222222;transform:scaleX(1.1550);transform-origin:0 0;">(1,000)</span>
<span style="left:1119.01px;top:1604.13px;font:400 12.6px/12.6px 'Liberation Sans',sans-serif;color:#222222;transform:scaleX(1.1550);transform-origin:0 0;">(1,667)</span>
<span style="left:1239.01px;top:1604.13px;font:400 12.6px/12.6px 'Liberation Sans',sans-serif;color:#222222;transform:scaleX(1.1550);transform-origin:0 0;">(1,656)</span>
<span style="left:1359.01px;top:1604.13px;font:400 12.6px/12.6px 'Liberation Sans',sans-serif;color:#222222;transform:scaleX(1.1550);transform-origin:0 0;">(1,644)</span>
<span style="left:1479.01px;top:1604.13px;font:400 12.6px/12.6px 'Liberation Sans',sans-serif;color:#222222;transform:scaleX(1.1550);transform-origin:0 0;">(1,633)</span>
<span style="left:1599.01px;top:1604.13px;font:400 12.6px/12.6px 'Liberation Sans',sans-serif;color:#222222;transform:scaleX(1.1550);transform-origin:0 0;">(1,622)</span>
<span style="left:1720.10px;top:1604.13px;font:400 12.6px/12.6px 'Liberation Sans',sans-serif;color:#222222;transform:scaleX(1.1550);transform-origin:0 0;">(1,611)</span>
<span style="left:1839.01px;top:1604.13px;font:400 12.6px/12.6px 'Liberation Sans',sans-serif;color:#222222;transform:scaleX(1.1550);transform-origin:0 0;">(1,600)</span>
<span style="left:1959.01px;top:1604.13px;font:400 12.6px/12.6px 'Liberation Sans',sans-serif;color:#222222;transform:scaleX(1.1550);transform-origin:0 0;">(1,589)</span>
<span style="left:2079.01px;top:1604.13px;font:400 12.6px/12.6px 'Liberation Sans',sans-serif;color:#222222;transform:scaleX(1.1550);transform-origin:0 0;">(1,578)</span>
<span style="left:2199.01px;top:1604.13px;font:400 12.6px/12.6px 'Liberation Sans',sans-serif;color:#222222;transform:scaleX(1.1550);transform-origin:0 0;">(1,567)</span>
<span style="left:2319.01px;top:1604.13px;font:400 12.6px/12.6px 'Liberation Sans',sans-serif;color:#222222;transform:scaleX(1.1550);transform-origin:0 0;">(1,556)</span>
<span style="left:2439.01px;top:1604.13px;font:400 12.6px/12.6px 'Liberation Sans',sans-serif;color:#222222;transform:scaleX(1.1550);transform-origin:0 0;">(1,534)</span>
<span style="left:2559.01px;top:1604.13px;font:400 12.6px/12.6px 'Liberation Sans',sans-serif;color:#222222;transform:scaleX(1.1550);transform-origin:0 0;">(1,512)</span>
<span style="left:2679.01px;top:1604.13px;font:400 12.6px/12.6px 'Liberation Sans',sans-serif;color:#222222;transform:scaleX(1.1550);transform-origin:0 0;">(1,491)</span>
<span style="left:2799.01px;top:1604.13px;font:400 12.6px/12.6px 'Liberation Sans',sans-serif;color:#222222;transform:scaleX(1.1550);transform-origin:0 0;">(1,469)</span>
<span style="left:138.71px;top:1620.89px;font:400 16.2px/16.2px 'Liberation Sans',sans-serif;color:#222222;transform:scaleX(0.9736);transform-origin:0 0;">Corporate Tax Expense</span>
<span style="left:914.60px;top:1622.40px;font:400 13px/13px 'Liberation Sans',sans-serif;color:#222222;transform:scaleX(1.3000);transform-origin:0 0;">-</span>
<span style="left:1034.60px;top:1622.40px;font:400 13px/13px 'Liberation Sans',sans-serif;color:#222222;transform:scaleX(1.3000);transform-origin:0 0;">-</span>
<span style="left:1154.60px;top:1622.40px;font:400 13px/13px 'Liberation Sans',sans-serif;color:#222222;transform:scaleX(1.3000);transform-origin:0 0;">-</span>
<span style="left:1274.60px;top:1622.40px;font:400 13px/13px 'Liberation Sans',sans-serif;color:#222222;transform:scaleX(1.3000);transform-origin:0 0;">-</span>
<span style="left:1394.60px;top:1622.40px;font:400 13px/13px 'Liberation Sans',sans-serif;color:#222222;transform:scaleX(1.3000);transform-origin:0 0;">-</span>
<span style="left:1514.60px;top:1622.40px;font:400 13px/13px 'Liberation Sans',sans-serif;color:#222222;transform:scaleX(1.3000);transform-origin:0 0;">-</span>
<span style="left:1634.60px;top:1622.40px;font:400 13px/13px 'Liberation Sans',sans-serif;color:#222222;transform:scaleX(1.3000);transform-origin:0 0;">-</span>
<span style="left:1754.60px;top:1622.40px;font:400 13px/13px 'Liberation Sans',sans-serif;color:#222222;transform:scaleX(1.3000);transform-origin:0 0;">-</span>
<span style="left:1874.60px;top:1622.40px;font:400 13px/13px 'Liberation Sans',sans-serif;color:#222222;transform:scaleX(1.3000);transform-origin:0 0;">-</span>
<span style="left:1994.60px;top:1622.40px;font:400 13px/13px 'Liberation Sans',sans-serif;color:#222222;transform:scaleX(1.3000);transform-origin:0 0;">-</span>
<span style="left:2114.60px;top:1622.40px;font:400 13px/13px 'Liberation Sans',sans-serif;color:#222222;transform:scaleX(1.3000);transform-origin:0 0;">-</span>
<span style="left:2234.60px;top:1622.40px;font:400 13px/13px 'Liberation Sans',sans-serif;color:#222222;transform:scaleX(1.3000);transform-origin:0 0;">-</span>
<span style="left:2331.16px;top:1623.93px;font:400 12.6px/12.6px 'Liberation Sans',sans-serif;color:#222222;transform:scaleX(1.1550);transform-origin:0 0;">(269)</span>
<span style="left:2451.16px;top:1623.93px;font:400 12.6px/12.6px 'Liberation Sans',sans-serif;color:#222222;transform:scaleX(1.1550);transform-origin:0 0;">(724)</span>
<span style="left:2559.01px;top:1623.93px;font:400 12.6px/12.6px 'Liberation Sans',sans-serif;color:#222222;transform:scaleX(1.1550);transform-origin:0 0;">(1,179)</span>
<span style="left:2679.01px;top:1623.93px;font:400 12.6px/12.6px 'Liberation Sans',sans-serif;color:#222222;transform:scaleX(1.1550);transform-origin:0 0;">(1,634)</span>
<span style="left:2799.01px;top:1623.93px;font:400 12.6px/12.6px 'Liberation Sans',sans-serif;color:#222222;transform:scaleX(1.1550);transform-origin:0 0;">(2,089)</span>
<span style="left:790.50px;top:1403.10px;font:700 16px/16px 'Liberation Serif',serif;color:#ffffff;transform:scaleX(1.2500);transform-origin:0 0;">-</span>
<div style="left:11.0px;top:455.6px;width:2849.0px;height:1.3px;background:#a0a0a0;"></div>
<div style="left:806.6px;top:297.0px;width:1.3px;height:1373.0px;background:#a0a0a0;"></div>
<div style="left:87.0px;top:297.0px;width:2.0px;height:36.0px;background:#1e7145;"></div>
<div style="left:2860.0px;top:278.0px;width:29.0px;height:1392.0px;background:#141414;"></div>
<div style="left:2862px;top:280px;width:26.5px;height:1388px;border-radius:13px;background:#1c1c1c"></div>
<svg style="position:absolute;left:2868px;top:285px" width="16" height="12"><path d="M8 1 L15 11 H1 Z" fill="#9a9a9a" stroke="#9a9a9a" stroke-linejoin="round" stroke-width="1.5"/></svg>
<div style="left:2870px;top:304px;width:12px;height:1015px;border-radius:6px;background:#9b9b9b"></div>
<svg style="position:absolute;left:2868px;top:1653px" width="16" height="12"><path d="M1 1 H15 L8 11 Z" fill="#9a9a9a" stroke="#9a9a9a" stroke-linejoin="round" stroke-width="1.5"/></svg>
<div style="left:11.0px;top:1670.0px;width:2878.0px;height:48.0px;background:#0a0a0a;"></div>
<svg style="position:absolute;left:45px;top:1685px" width="11" height="16"><path d="M9 1 L2 8 L9 15" fill="none" stroke="#bdbdbd" stroke-width="1.5"/></svg>
<svg style="position:absolute;left:93px;top:1685px" width="11" height="16"><path d="M2 1 L9 8 L2 15" fill="none" stroke="#bdbdbd" stroke-width="1.5"/></svg>
<span style="left:190.0px;top:1687.5px;font:400 19.5px/19.5px 'Liberation Sans',sans-serif;color:#ffffff;transform:scaleX(1.0596);transform-origin:0 0;">Contents</span>
<div style="left:292.0px;top:1681.0px;width:1.3px;height:26.0px;background:#3a3a3a;"></div>
<div style="left:433.4px;top:1681.0px;width:1.3px;height:26.0px;background:#3a3a3a;"></div>
<div style="left:552.8px;top:1681.0px;width:1.3px;height:26.0px;background:#3a3a3a;"></div>
<div style="left:723.0px;top:1681.0px;width:1.3px;height:26.0px;background:#3a3a3a;"></div>
<div style="left:825.5px;top:1681.0px;width:1.3px;height:26.0px;background:#3a3a3a;"></div>
<div style="left:926.0px;top:1681.0px;width:1.3px;height:26.0px;background:#3a3a3a;"></div>
<div style="left:1051.5px;top:1681.0px;width:1.3px;height:26.0px;background:#3a3a3a;"></div>
<div style="left:1155.0px;top:1681.0px;width:1.3px;height:26.0px;background:#3a3a3a;"></div>
<div style="left:1209.8px;top:1681.0px;width:1.3px;height:26.0px;background:#3a3a3a;"></div>
<div style="left:1270.7px;top:1681.0px;width:1.3px;height:26.0px;background:#3a3a3a;"></div>
<div style="left:1331.6px;top:1681.0px;width:1.3px;height:26.0px;background:#3a3a3a;"></div>
<div style="left:1459.4px;top:1681.0px;width:1.3px;height:26.0px;background:#3a3a3a;"></div>
<div style="left:1587.0px;top:1681.0px;width:1.3px;height:26.0px;background:#3a3a3a;"></div>
<div style="left:1714.0px;top:1681.0px;width:1.3px;height:26.0px;background:#3a3a3a;"></div>
<div style="left:1775.0px;top:1681.0px;width:1.3px;height:26.0px;background:#3a3a3a;"></div>
<div style="left:1860.0px;top:1681.0px;width:1.3px;height:26.0px;background:#3a3a3a;"></div>
<div style="left:1958.6px;top:1681.0px;width:1.3px;height:26.0px;background:#3a3a3a;"></div>
<div style="left:2035.4px;top:1681.0px;width:1.3px;height:26.0px;background:#3a3a3a;"></div>
<div style="left:299.0px;top:1676.0px;width:128.0px;height:35.7px;background:#ffeb6e;border-radius:7px"></div>
<span style="left:313.0px;top:1686.5px;font:400 19.5px/19.5px 'Liberation Sans',sans-serif;color:#1a1a1a;transform:scaleX(1.0483);transform-origin:0 0;">Dashboard</span>
<div style="left:440.0px;top:1676.0px;width:106.0px;height:35.7px;background:#ffeb6e;border-radius:7px"></div>
<span style="left:454.5px;top:1686.5px;font:400 19.5px/19.5px 'Liberation Sans',sans-serif;color:#1a1a1a;">Revenue</span>
<div style="left:559.0px;top:1676.0px;width:157.7px;height:35.7px;background:#ffeb6e;border-radius:7px"></div>
<span style="left:572.0px;top:1686.5px;font:400 19.5px/19.5px 'Liberation Sans',sans-serif;color:#1a1a1a;transform:scaleX(0.9820);transform-origin:0 0;">COGS &amp; OPEX</span>
<div style="left:729.7px;top:1676.0px;width:89.3px;height:35.7px;background:#ffeb6e;border-radius:7px"></div>
<span style="left:743.5px;top:1686.5px;font:400 19.5px/19.5px 'Liberation Sans',sans-serif;color:#1a1a1a;transform:scaleX(1.0219);transform-origin:0 0;">Payroll</span>
<div style="left:832.0px;top:1676.0px;width:87.0px;height:35.7px;background:#ffeb6e;border-radius:7px"></div>
<span style="left:845.0px;top:1686.5px;font:400 19.5px/19.5px 'Liberation Sans',sans-serif;color:#1a1a1a;transform:scaleX(0.9201);transform-origin:0 0;">CAPEX</span>
<div style="left:932.0px;top:1676.0px;width:112.6px;height:35.7px;background:#ffeb6e;border-radius:7px"></div>
<span style="left:945.0px;top:1686.5px;font:400 19.5px/19.5px 'Liberation Sans',sans-serif;color:#1a1a1a;transform:scaleX(1.0319);transform-origin:0 0;">CapTable</span>
<div style="left:1058.0px;top:1676.0px;width:90.0px;height:35.7px;background:#ffeb6e;border-radius:7px"></div>
<span style="left:1071.0px;top:1686.5px;font:400 19.5px/19.5px 'Liberation Sans',sans-serif;color:#1a1a1a;transform:scaleX(1.0496);transform-origin:0 0;">Capital</span>
<div style="left:1161.0px;top:1676.0px;width:42.0px;height:35.7px;background:#4aafe4;border-radius:7px"></div>
<span style="left:1174.5px;top:1686.5px;font:400 19.5px/19.5px 'Liberation Sans',sans-serif;color:#1a1a1a;transform:scaleX(0.8414);transform-origin:0 0;">IS</span>
<div style="left:1277.0px;top:1676.0px;width:47.7px;height:35.7px;background:#4aafe4;border-radius:7px"></div>
<span style="left:1291.0px;top:1686.5px;font:400 19.5px/19.5px 'Liberation Sans',sans-serif;color:#1a1a1a;transform:scaleX(0.8269);transform-origin:0 0;">BS</span>
<div style="left:1338.0px;top:1676.0px;width:114.5px;height:35.7px;background:#4aafe4;border-radius:7px"></div>
<span style="left:1351.0px;top:1686.5px;font:400 19.5px/19.5px 'Liberation Sans',sans-serif;color:#1a1a1a;transform:scaleX(1.0069);transform-origin:0 0;">Scenarios</span>
<div style="left:1466.0px;top:1676.0px;width:114.0px;height:35.7px;background:#4aafe4;border-radius:7px"></div>
<span style="left:1479.0px;top:1686.5px;font:400 19.5px/19.5px 'Liberation Sans',sans-serif;color:#1a1a1a;transform:scaleX(1.1022);transform-origin:0 0;">Valuation</span>
<div style="left:1593.7px;top:1676.0px;width:114.5px;height:35.7px;background:#4aafe4;border-radius:7px"></div>
<span style="left:1608.0px;top:1686.5px;font:400 19.5px/19.5px 'Liberation Sans',sans-serif;color:#1a1a1a;transform:scaleX(1.0427);transform-origin:0 0;">Summary</span>
<div style="left:1721.0px;top:1676.0px;width:48.0px;height:35.7px;background:#4aafe4;border-radius:7px"></div>
<span style="left:1734.6px;top:1686.5px;font:400 19.5px/19.5px 'Liberation Sans',sans-serif;color:#1a1a1a;transform:scaleX(0.8115);transform-origin:0 0;">BE</span>
<div style="left:1782.0px;top:1676.0px;width:72.0px;height:35.7px;background:#4aafe4;border-radius:7px"></div>
<span style="left:1795.5px;top:1686.5px;font:400 19.5px/19.5px 'Liberation Sans',sans-serif;color:#1a1a1a;transform:scaleX(0.9333);transform-origin:0 0;">ROIC</span>
<div style="left:1867.0px;top:1676.0px;width:84.7px;height:35.7px;background:#4aafe4;border-radius:7px"></div>
<span style="left:1880.0px;top:1686.5px;font:400 19.5px/19.5px 'Liberation Sans',sans-serif;color:#1a1a1a;transform:scaleX(1.0150);transform-origin:0 0;">Charts</span>
<div style="left:1965.0px;top:1676.0px;width:64.0px;height:35.7px;background:#4aafe4;border-radius:7px"></div>
<span style="left:1978.0px;top:1686.5px;font:400 19.5px/19.5px 'Liberation Sans',sans-serif;color:#1a1a1a;transform:scaleX(0.9230);transform-origin:0 0;">KPIs</span>
<div style="left:2041.5px;top:1676px;width:30.5px;height:35.7px;overflow:hidden;border-radius:7px 0 0 7px;background:#4aafe4"><span style="left:13px;top:7px;font:400 19.5px/19.5px 'Liberation Sans',sans-serif;color:#1a1a1a">Sc</span></div>
<div style="left:1211.3px;top:1670.0px;width:5.0px;height:6.0px;background:#ffffff;"></div>
<div style="left:1211.3px;top:1670.0px;width:5.0px;height:6.0px;background:#0a0a0a;border-top-right-radius:6px"></div>
<div style="left:1263.7px;top:1670.0px;width:5.0px;height:6.0px;background:#ffffff;"></div>
<div style="left:1263.7px;top:1670.0px;width:5.0px;height:6.0px;background:#0a0a0a;border-top-left-radius:6px"></div>
<div style="left:1216.3px;top:1669px;width:47.4px;height:42.7px;border-radius:0 0 6px 6px;background:linear-gradient(#ffffff 20%,#d3e5f6)"></div>
<span style="left:1228.5px;top:1681.3px;font:400 19.5px/19.5px 'Liberation Sans',sans-serif;color:#1a1a1a;transform:scaleX(0.8890);transform-origin:0 0;">CF</span>
<div style="left:1227.9px;top:1705.1px;width:23.9px;height:2.7px;background:#1e7e45;"></div>
<div style="left:2087px;top:1691px;width:4px;height:4px;border-radius:50%;background:#e0e0e0"></div>
<div style="left:2093px;top:1691px;width:4px;height:4px;border-radius:50%;background:#e0e0e0"></div>
<div style="left:2099px;top:1691px;width:4px;height:4px;border-radius:50%;background:#e0e0e0"></div>
<div style="left:2135.0px;top:1692.5px;width:16.3px;height:1.5px;background:#e6e6e6;"></div>
<div style="left:2142.4px;top:1685.0px;width:1.5px;height:16.5px;background:#e6e6e6;"></div>
<div style="left:2190px;top:1684.5px;width:3px;height:3px;border-radius:50%;background:#e0e0e0"></div>
<div style="left:2190px;top:1691.5px;width:3px;height:3px;border-radius:50%;background:#e0e0e0"></div>
<div style="left:2190px;top:1698.5px;width:3px;height:3px;border-radius:50%;background:#e0e0e0"></div>
<div style="left:2217px;top:1680px;width:642.7px;height:26.4px;border-radius:13px;background:#1c1c1c"></div>
<svg style="position:absolute;left:2222px;top:1687px" width="13" height="14"><path d="M12 1 V13 L1 7 Z" fill="#9a9a9a" stroke="#9a9a9a" stroke-linejoin="round"/></svg>
<div style="left:2241.6px;top:1687px;width:158.4px;height:12.5px;border-radius:6px;background:#9b9b9b"></div>
<svg style="position:absolute;left:2842px;top:1687px" width="13" height="14"><path d="M1 1 V13 L12 7 Z" fill="#9a9a9a" stroke="#9a9a9a" stroke-linejoin="round"/></svg>
<div style="left:11.0px;top:1718.0px;width:2878.0px;height:33.0px;background:#141414;"></div>
<div style="left:11.0px;top:1717.5px;width:2878.0px;height:1.0px;background:#2e2e2e;"></div>
<span style="left:27.0px;top:1727.9px;font:400 16px/16px 'Liberation Sans',sans-serif;color:#e0e0e0;transform:scaleX(0.9248);transform-origin:0 0;">Ready</span>
<svg style="position:absolute;left:98px;top:1726px" width="24" height="20"><rect x="1" y="1" width="18" height="15" fill="none" stroke="#d0d0d0" stroke-width="1.4"/><path d="M1 5 H19 M4 9 H9 M4 12 H9" stroke="#d0d0d0" stroke-width="1.2"/><circle cx="16" cy="13" r="5" fill="#141414" stroke="#d0d0d0" stroke-width="1.5"/><circle cx="16" cy="13" r="1.8" fill="#d0d0d0"/></svg>
<svg style="position:absolute;left:145px;top:1723px" width="24" height="24"><circle cx="10" cy="4" r="2.6" fill="none" stroke="#e6e6e6" stroke-width="1.6"/><path d="M2 8 Q6 11 10 9.5 Q14 11 18 8 M10 9.5 V14 L5.5 21 M10 14 L12 16" fill="none" stroke="#e6e6e6" stroke-width="1.7" stroke-linecap="round"/><path d="M14 16 L21 23 M21 16 L14 23" stroke="#e6e6e6" stroke-width="1.6"/></svg>
<span style="left:173.0px;top:1727.9px;font:700 16px/16px 'Liberation Sans',sans-serif;color:#e6e6e6;transform:scaleX(0.9793);transform-origin:0 0;">Accessibility: Investigate</span>
<div style="left:2445.0px;top:1718.0px;width:59.7px;height:33.0px;background:#2a2a2a;"></div>
<svg style="position:absolute;left:2464px;top:1724px" width="21" height="21"><rect x="1" y="1" width="19" height="19" fill="none" stroke="#f0f0f0" stroke-width="1.8"/><path d="M7.3 1 V20 M13.6 1 V20 M1 7.3 H20 M1 13.6 H20" stroke="#f0f0f0" stroke-width="1.8"/></svg>
<svg style="position:absolute;left:2523px;top:1724px" width="23" height="21"><rect x="1" y="1" width="21" height="19" fill="none" stroke="#e0e0e0" stroke-width="1.4"/><rect x="5" y="4" width="13" height="13" fill="none" stroke="#e0e0e0" stroke-width="1.4"/><path d="M8 8 H15 M8 11 H15 M8 14 H15" stroke="#e0e0e0" stroke-width="1.1"/></svg>
<svg style="position:absolute;left:2583px;top:1724px" width="23" height="21"><rect x="1" y="1" width="21" height="19" fill="none" stroke="#ececec" stroke-width="1.6"/><path d="M7.5 1 V11 H14 V1" fill="none" stroke="#ececec" stroke-width="1.5"/><path d="M1 11 H7.5" stroke="#ececec" stroke-width="1.5"/></svg>
<div style="left:2633.0px;top:1734.5px;width:11.0px;height:1.5px;background:#d0d0d0;"></div>
<div style="left:2653.0px;top:1734.3px;width:148.0px;height:2.4px;background:#b8b8b8;"></div>
<div style="left:2723.5px;top:1726.7px;width:7.5px;height:16.3px;background:#bdbdbd;"></div>
<div style="left:2807.7px;top:1734.5px;width:13.3px;height:1.5px;background:#d0d0d0;"></div>
<div style="left:2813.6px;top:1728.5px;width:1.5px;height:13.5px;background:#d0d0d0;"></div>
<span style="left:2840.0px;top:1728.3px;font:400 16px/16px 'Liberation Sans',sans-serif;color:#e0e0e0;transform:scaleX(0.9279);transform-origin:0 0;">100%</span>
</body></html>
